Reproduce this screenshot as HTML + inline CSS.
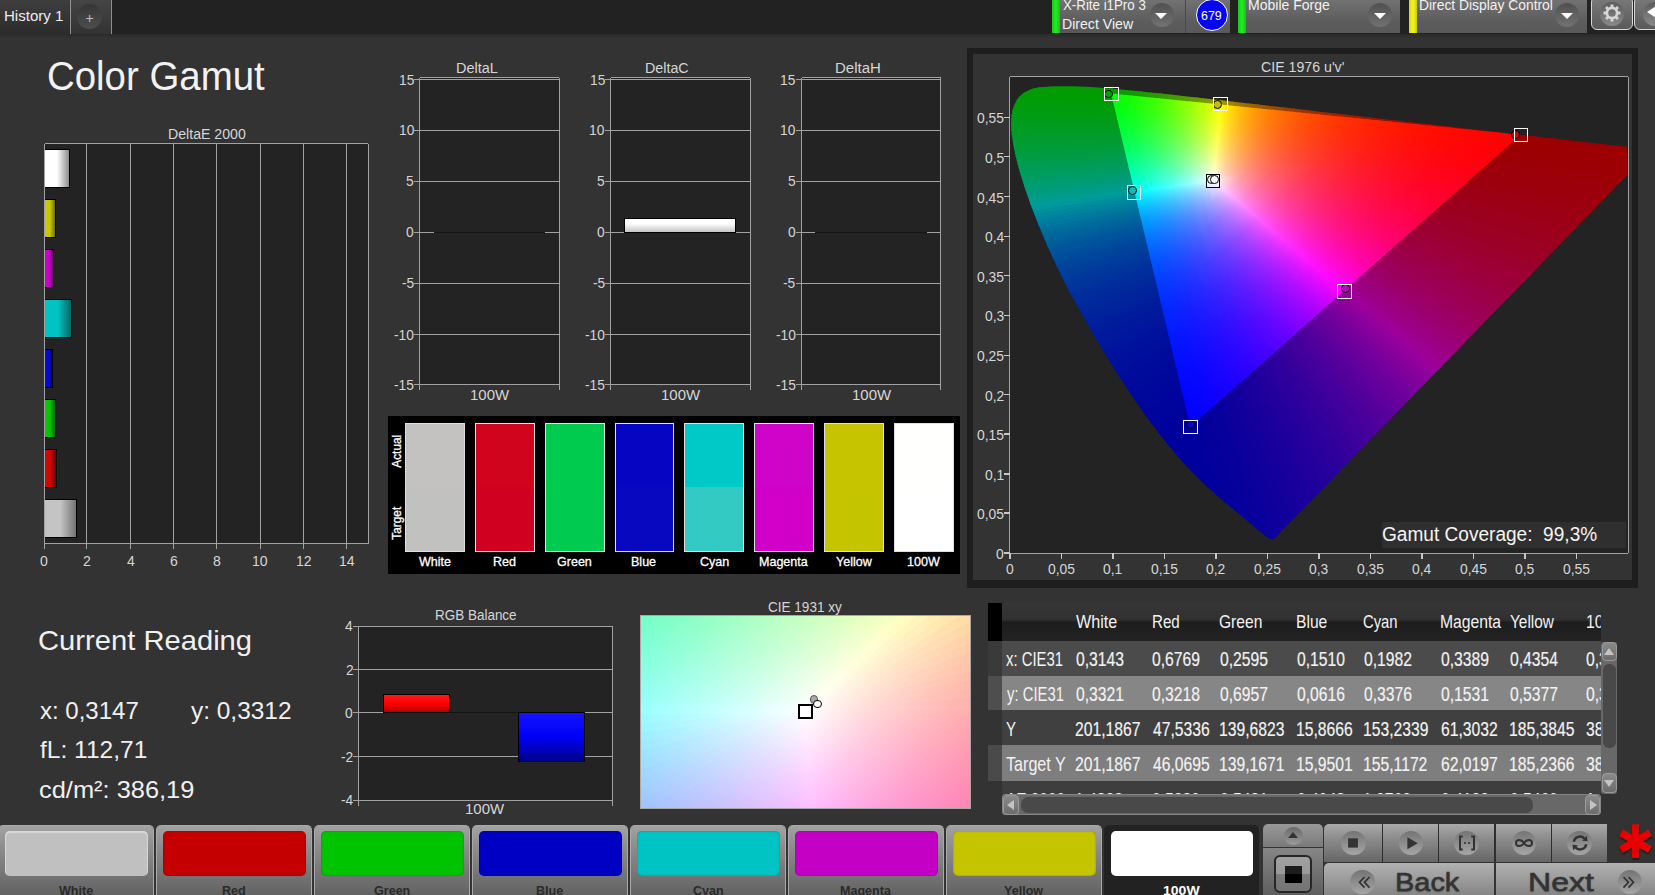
<!DOCTYPE html>
<html><head><meta charset="utf-8"><title>Color Gamut</title>
<style>
html,body{margin:0;padding:0;background:#333;}
body{width:1655px;height:895px;overflow:hidden;position:relative;font-family:"Liberation Sans",sans-serif;color:#e6e6e6;}
.a{position:absolute;}
.t{position:absolute;white-space:nowrap;}
</style></head><body>
<div class="a" style="left:0px;top:0px;width:1655px;height:33.5px;background:#222;"></div>
<div class="a" style="left:0px;top:33.5px;width:1655px;height:5px;background:linear-gradient(#2b2b2b,#333);"></div>
<div class="a" style="left:0px;top:0px;width:70px;height:33.5px;background:linear-gradient(#3e3e3e,#2b2b2b);"></div>
<div class="a" style="left:70px;top:0px;width:1px;height:33.5px;background:#8f8f8f;"></div>
<div class="a" style="left:71px;top:0px;width:40px;height:33.5px;background:linear-gradient(#454545,#333);"></div>
<div class="a" style="left:111px;top:0px;width:1px;height:33.5px;background:#8f8f8f;"></div>
<div class="a" style="left:77.1px;top:4px;width:25.4px;height:25.4px;border-radius:50%;background:linear-gradient(#353535,#4e4e4e);"></div>
<div class="t " style="left:85.54px;top:11.35px;font-size:14px;line-height:14px;transform:scaleX(1.000);transform-origin:0 50%;color:#bdbdbd;">+</div>
<div class="t " style="left:4.3px;top:9.03px;font-size:14.5px;line-height:14.5px;transform:scaleX(1.038);transform-origin:0 50%;color:#ededed;">History 1</div>
<div class="a" style="left:1052px;top:0px;width:178px;height:33.3px;background:linear-gradient(#727272,#5e5e5e 60%,#585858);"></div>
<div class="a" style="left:1052px;top:0px;width:7.5px;height:33.3px;background:linear-gradient(90deg,#19c819,#22ee22 50%,#14c414);"></div>
<div class="a" style="left:1185px;top:0px;width:1.2px;height:33.3px;background:#4a4a4a;"></div>
<div class="t " style="left:1062.93px;top:-2.35px;font-size:14px;line-height:14px;transform:scaleX(0.950);transform-origin:0 50%;color:#f2f2f2;">X-Rite i1Pro 3</div>
<div class="t " style="left:1062.07px;top:16.65px;font-size:14px;line-height:14px;transform:scaleX(1.008);transform-origin:0 50%;color:#f2f2f2;">Direct View</div>
<div class="a" style="left:1149.5px;top:2.6px;width:24px;height:24px;border-radius:12px;background:linear-gradient(#505050,#727272);"></div>
<div class="a" style="left:1155.4px;top:13.1px;width:0;height:0;border-left:6.1px solid transparent;border-right:6.1px solid transparent;border-top:6.2px solid #fff;"></div>
<div class="a" style="left:1238px;top:0px;width:162px;height:33.3px;background:linear-gradient(#727272,#5e5e5e 60%,#585858);"></div>
<div class="a" style="left:1238px;top:0px;width:7.5px;height:33.3px;background:linear-gradient(90deg,#19c819,#22ee22 50%,#14c414);"></div>
<div class="t " style="left:1248.08px;top:-2.35px;font-size:14px;line-height:14px;transform:scaleX(1.000);transform-origin:0 50%;color:#f2f2f2;">Mobile Forge</div>
<div class="a" style="left:1368px;top:2.6px;width:24px;height:24px;border-radius:12px;background:linear-gradient(#505050,#727272);"></div>
<div class="a" style="left:1373.9px;top:13.1px;width:0;height:0;border-left:6.1px solid transparent;border-right:6.1px solid transparent;border-top:6.2px solid #fff;"></div>
<div class="a" style="left:1409px;top:0px;width:177.7px;height:33.3px;background:linear-gradient(#727272,#5e5e5e 60%,#585858);"></div>
<div class="a" style="left:1409px;top:0px;width:7.5px;height:33.3px;background:linear-gradient(90deg,#d8d810,#f4f420 50%,#caca10);"></div>
<div class="t " style="left:1419.09px;top:-2.35px;font-size:14px;line-height:14px;transform:scaleX(0.989);transform-origin:0 50%;color:#f2f2f2;">Direct Display Control</div>
<div class="a" style="left:1555px;top:2.6px;width:24px;height:24px;border-radius:12px;background:linear-gradient(#505050,#727272);"></div>
<div class="a" style="left:1560.9px;top:13.1px;width:0;height:0;border-left:6.1px solid transparent;border-right:6.1px solid transparent;border-top:6.2px solid #fff;"></div>
<div class="a" style="left:1195.5px;top:-1.5px;width:30px;height:30px;border-radius:16px;background:#0606f0;border:1.3px solid #fff;"></div>
<div class="t " style="left:1201.13px;top:8.57px;font-size:13.5px;line-height:13.5px;transform:scaleX(0.920);transform-origin:0 50%;color:#fff;">679</div>
<div class="a" style="left:1591px;top:-4px;width:40px;height:32.2px;border-radius:6px;border:1.3px solid #d8d8d8;background:linear-gradient(#7a7a7a,#5a5a5a);"></div>
<div class="a" style="left:1600px;top:1.5px;width:24px;height:24px;border-radius:50%;background:linear-gradient(#5c5c5c,#8a8a8a);"></div>
<svg class="a" style="left:1600px;top:1.3px" width="24" height="24" viewBox="-12 -12 24 24"><g fill="none" stroke="#d6d6d6"><circle r="5.15" stroke-width="2.7"/><g stroke-width="2.9"><line x1="0" y1="-6" x2="0" y2="-8.5" transform="rotate(0)"/><line x1="0" y1="-6" x2="0" y2="-8.5" transform="rotate(45)"/><line x1="0" y1="-6" x2="0" y2="-8.5" transform="rotate(90)"/><line x1="0" y1="-6" x2="0" y2="-8.5" transform="rotate(135)"/><line x1="0" y1="-6" x2="0" y2="-8.5" transform="rotate(180)"/><line x1="0" y1="-6" x2="0" y2="-8.5" transform="rotate(225)"/><line x1="0" y1="-6" x2="0" y2="-8.5" transform="rotate(270)"/><line x1="0" y1="-6" x2="0" y2="-8.5" transform="rotate(315)"/></g></g></svg>
<div class="a" style="left:1634px;top:-4px;width:40px;height:32.2px;border-radius:6px;border:1.3px solid #d8d8d8;background:linear-gradient(#7a7a7a,#5a5a5a);"></div>
<div class="a" style="left:1643px;top:1.5px;width:24px;height:24px;border-radius:50%;background:linear-gradient(#5c5c5c,#8a8a8a);"></div>
<div class="a" style="left:1647px;top:6.4px;width:0;height:0;border-top:6.5px solid transparent;border-bottom:6.5px solid transparent;border-right:9px solid #fff;"></div>
<div class="t " style="left:47.18px;top:56.44px;font-size:40px;line-height:40px;transform:scaleX(0.960);transform-origin:0 50%;color:#f2f2f2;">Color Gamut</div>
<div class="t " style="left:167.57px;top:127.05px;font-size:14px;line-height:14px;transform:scaleX(1.010);transform-origin:0 50%;color:#d6d6d6;">DeltaE 2000</div>
<div class="a" style="left:44.6px;top:143.8px;width:323.8px;height:400px;background:#232323;"></div>
<div class="a" style="left:86px;top:143.8px;width:1px;height:400px;background:#a2a2a2;"></div>
<div class="a" style="left:130px;top:143.8px;width:1px;height:400px;background:#a2a2a2;"></div>
<div class="a" style="left:173px;top:143.8px;width:1px;height:400px;background:#a2a2a2;"></div>
<div class="a" style="left:216px;top:143.8px;width:1px;height:400px;background:#a2a2a2;"></div>
<div class="a" style="left:260px;top:143.8px;width:1px;height:400px;background:#a2a2a2;"></div>
<div class="a" style="left:303px;top:143.8px;width:1px;height:400px;background:#a2a2a2;"></div>
<div class="a" style="left:346px;top:143.8px;width:1px;height:400px;background:#a2a2a2;"></div>
<div class="a" style="left:44.6px;top:143px;width:323.8px;height:1px;background:#a2a2a2;"></div>
<div class="a" style="left:44.6px;top:543px;width:323.8px;height:1px;background:#a2a2a2;"></div>
<div class="a" style="left:44px;top:143.8px;width:1px;height:400px;background:#a2a2a2;"></div>
<div class="a" style="left:368px;top:143.8px;width:1px;height:400px;background:#a2a2a2;"></div>
<div class="a" style="left:44px;top:543.8px;width:1px;height:5px;background:#a2a2a2;"></div>
<div class="t " style="left:40px;top:553.73px;font-size:14.5px;line-height:14.5px;transform:scaleX(0.970);transform-origin:0 50%;color:#d6d6d6;">0</div>
<div class="a" style="left:86px;top:543.8px;width:1px;height:5px;background:#a2a2a2;"></div>
<div class="t " style="left:83.26px;top:553.73px;font-size:14.5px;line-height:14.5px;transform:scaleX(0.970);transform-origin:0 50%;color:#d6d6d6;">2</div>
<div class="a" style="left:130px;top:543.8px;width:1px;height:5px;background:#a2a2a2;"></div>
<div class="t " style="left:126.63px;top:553.73px;font-size:14.5px;line-height:14.5px;transform:scaleX(0.970);transform-origin:0 50%;color:#d6d6d6;">4</div>
<div class="a" style="left:173px;top:543.8px;width:1px;height:5px;background:#a2a2a2;"></div>
<div class="t " style="left:169.83px;top:553.73px;font-size:14.5px;line-height:14.5px;transform:scaleX(0.970);transform-origin:0 50%;color:#d6d6d6;">6</div>
<div class="a" style="left:216px;top:543.8px;width:1px;height:5px;background:#a2a2a2;"></div>
<div class="t " style="left:213.2px;top:553.73px;font-size:14.5px;line-height:14.5px;transform:scaleX(0.970);transform-origin:0 50%;color:#d6d6d6;">8</div>
<div class="a" style="left:260px;top:543.8px;width:1px;height:5px;background:#a2a2a2;"></div>
<div class="t " style="left:252.31px;top:553.73px;font-size:14.5px;line-height:14.5px;transform:scaleX(0.970);transform-origin:0 50%;color:#d6d6d6;">10</div>
<div class="a" style="left:303px;top:543.8px;width:1px;height:5px;background:#a2a2a2;"></div>
<div class="t " style="left:295.68px;top:553.73px;font-size:14.5px;line-height:14.5px;transform:scaleX(0.970);transform-origin:0 50%;color:#d6d6d6;">12</div>
<div class="a" style="left:346px;top:543.8px;width:1px;height:5px;background:#a2a2a2;"></div>
<div class="t " style="left:338.84px;top:553.73px;font-size:14.5px;line-height:14.5px;transform:scaleX(0.970);transform-origin:0 50%;color:#d6d6d6;">14</div>
<div class="a" style="left:45.2px;top:149.4px;width:25.3px;height:38.2px;background:linear-gradient(90deg,#ffffff 50%,#8c8c8c);border:1.3px solid #000;border-left:none;box-sizing:border-box;"></div>
<div class="a" style="left:45.2px;top:199.4px;width:11.2px;height:38.2px;background:linear-gradient(90deg,#c8c800 50%,#6c6c00);border:1.3px solid #000;border-left:none;box-sizing:border-box;"></div>
<div class="a" style="left:45.2px;top:249.4px;width:8.4px;height:38.2px;background:linear-gradient(90deg,#c800c8 50%,#6c006c);border:1.3px solid #000;border-left:none;box-sizing:border-box;"></div>
<div class="a" style="left:45.2px;top:299.4px;width:27.3px;height:38.2px;background:linear-gradient(90deg,#00c4c4 50%,#006464);border:1.3px solid #000;border-left:none;box-sizing:border-box;"></div>
<div class="a" style="left:45.2px;top:349.4px;width:7.8px;height:38.2px;background:linear-gradient(90deg,#0808d0 50%,#04046c);border:1.3px solid #000;border-left:none;box-sizing:border-box;"></div>
<div class="a" style="left:45.2px;top:399.4px;width:11px;height:38.2px;background:linear-gradient(90deg,#08c408 50%,#046c04);border:1.3px solid #000;border-left:none;box-sizing:border-box;"></div>
<div class="a" style="left:45.2px;top:449.4px;width:12.1px;height:38.2px;background:linear-gradient(90deg,#cc0808 50%,#6c0404);border:1.3px solid #000;border-left:none;box-sizing:border-box;"></div>
<div class="a" style="left:45.2px;top:499.4px;width:31.4px;height:38.2px;background:linear-gradient(90deg,#c4c4c4 50%,#747474);border:1.3px solid #000;border-left:none;box-sizing:border-box;"></div>
<div class="a" style="left:419.7px;top:77.6px;width:139.5px;height:306.8px;background:#232323;"></div>
<div class="t " style="left:455.54px;top:61.05px;font-size:14px;line-height:14px;transform:scaleX(1.033);transform-origin:0 50%;color:#d6d6d6;">DeltaL</div>
<div class="a" style="left:419.7px;top:79px;width:139.5px;height:1px;background:#a2a2a2;"></div>
<div class="a" style="left:414.2px;top:79px;width:5.5px;height:1px;background:#a2a2a2;"></div>
<div class="t " style="left:398.66px;top:72.63px;font-size:14.5px;line-height:14.5px;transform:scaleX(0.950);transform-origin:0 50%;color:#d6d6d6;">15</div>
<div class="a" style="left:419.7px;top:130px;width:139.5px;height:1px;background:#a2a2a2;"></div>
<div class="a" style="left:414.2px;top:130px;width:5.5px;height:1px;background:#a2a2a2;"></div>
<div class="t " style="left:398.59px;top:123.33px;font-size:14.5px;line-height:14.5px;transform:scaleX(0.950);transform-origin:0 50%;color:#d6d6d6;">10</div>
<div class="a" style="left:419.7px;top:181px;width:139.5px;height:1px;background:#a2a2a2;"></div>
<div class="a" style="left:414.2px;top:181px;width:5.5px;height:1px;background:#a2a2a2;"></div>
<div class="t " style="left:406.31px;top:174.38px;font-size:14.5px;line-height:14.5px;transform:scaleX(0.950);transform-origin:0 50%;color:#d6d6d6;">5</div>
<div class="a" style="left:419.7px;top:232px;width:139.5px;height:1px;background:#a2a2a2;"></div>
<div class="a" style="left:414.2px;top:232px;width:5.5px;height:1px;background:#a2a2a2;"></div>
<div class="t " style="left:406.24px;top:225.43px;font-size:14.5px;line-height:14.5px;transform:scaleX(0.950);transform-origin:0 50%;color:#d6d6d6;">0</div>
<div class="a" style="left:419.7px;top:283px;width:139.5px;height:1px;background:#a2a2a2;"></div>
<div class="a" style="left:414.2px;top:283px;width:5.5px;height:1px;background:#a2a2a2;"></div>
<div class="t " style="left:401.69px;top:276.48px;font-size:14.5px;line-height:14.5px;transform:scaleX(0.950);transform-origin:0 50%;color:#d6d6d6;">-5</div>
<div class="a" style="left:419.7px;top:334px;width:139.5px;height:1px;background:#a2a2a2;"></div>
<div class="a" style="left:414.2px;top:334px;width:5.5px;height:1px;background:#a2a2a2;"></div>
<div class="t " style="left:393.98px;top:327.53px;font-size:14.5px;line-height:14.5px;transform:scaleX(0.950);transform-origin:0 50%;color:#d6d6d6;">-10</div>
<div class="a" style="left:419.7px;top:384px;width:139.5px;height:1px;background:#a2a2a2;"></div>
<div class="a" style="left:414.2px;top:384px;width:5.5px;height:1px;background:#a2a2a2;"></div>
<div class="t " style="left:394.05px;top:378.43px;font-size:14.5px;line-height:14.5px;transform:scaleX(0.950);transform-origin:0 50%;color:#d6d6d6;">-15</div>
<div class="a" style="left:419.7px;top:77px;width:139.5px;height:1px;background:#a2a2a2;"></div>
<div class="a" style="left:419px;top:77.6px;width:1px;height:306.8px;background:#a2a2a2;"></div>
<div class="a" style="left:559px;top:77.6px;width:1px;height:306.8px;background:#a2a2a2;"></div>
<div class="a" style="left:419px;top:384.4px;width:1px;height:6px;background:#a2a2a2;"></div>
<div class="a" style="left:559px;top:384.4px;width:1px;height:6px;background:#a2a2a2;"></div>
<div class="t " style="left:470.33px;top:387.73px;font-size:14.5px;line-height:14.5px;transform:scaleX(1.032);transform-origin:0 50%;color:#d6d6d6;">100W</div>
<div class="a" style="left:610.6px;top:77.6px;width:139.5px;height:306.8px;background:#232323;"></div>
<div class="t " style="left:645.46px;top:61.05px;font-size:14px;line-height:14px;transform:scaleX(1.020);transform-origin:0 50%;color:#d6d6d6;">DeltaC</div>
<div class="a" style="left:610.6px;top:79px;width:139.5px;height:1px;background:#a2a2a2;"></div>
<div class="a" style="left:605.1px;top:79px;width:5.5px;height:1px;background:#a2a2a2;"></div>
<div class="t " style="left:589.56px;top:72.63px;font-size:14.5px;line-height:14.5px;transform:scaleX(0.950);transform-origin:0 50%;color:#d6d6d6;">15</div>
<div class="a" style="left:610.6px;top:130px;width:139.5px;height:1px;background:#a2a2a2;"></div>
<div class="a" style="left:605.1px;top:130px;width:5.5px;height:1px;background:#a2a2a2;"></div>
<div class="t " style="left:589.49px;top:123.33px;font-size:14.5px;line-height:14.5px;transform:scaleX(0.950);transform-origin:0 50%;color:#d6d6d6;">10</div>
<div class="a" style="left:610.6px;top:181px;width:139.5px;height:1px;background:#a2a2a2;"></div>
<div class="a" style="left:605.1px;top:181px;width:5.5px;height:1px;background:#a2a2a2;"></div>
<div class="t " style="left:597.21px;top:174.38px;font-size:14.5px;line-height:14.5px;transform:scaleX(0.950);transform-origin:0 50%;color:#d6d6d6;">5</div>
<div class="a" style="left:610.6px;top:232px;width:139.5px;height:1px;background:#a2a2a2;"></div>
<div class="a" style="left:605.1px;top:232px;width:5.5px;height:1px;background:#a2a2a2;"></div>
<div class="t " style="left:597.14px;top:225.43px;font-size:14.5px;line-height:14.5px;transform:scaleX(0.950);transform-origin:0 50%;color:#d6d6d6;">0</div>
<div class="a" style="left:610.6px;top:283px;width:139.5px;height:1px;background:#a2a2a2;"></div>
<div class="a" style="left:605.1px;top:283px;width:5.5px;height:1px;background:#a2a2a2;"></div>
<div class="t " style="left:592.59px;top:276.48px;font-size:14.5px;line-height:14.5px;transform:scaleX(0.950);transform-origin:0 50%;color:#d6d6d6;">-5</div>
<div class="a" style="left:610.6px;top:334px;width:139.5px;height:1px;background:#a2a2a2;"></div>
<div class="a" style="left:605.1px;top:334px;width:5.5px;height:1px;background:#a2a2a2;"></div>
<div class="t " style="left:584.88px;top:327.53px;font-size:14.5px;line-height:14.5px;transform:scaleX(0.950);transform-origin:0 50%;color:#d6d6d6;">-10</div>
<div class="a" style="left:610.6px;top:384px;width:139.5px;height:1px;background:#a2a2a2;"></div>
<div class="a" style="left:605.1px;top:384px;width:5.5px;height:1px;background:#a2a2a2;"></div>
<div class="t " style="left:584.95px;top:378.43px;font-size:14.5px;line-height:14.5px;transform:scaleX(0.950);transform-origin:0 50%;color:#d6d6d6;">-15</div>
<div class="a" style="left:610.6px;top:77px;width:139.5px;height:1px;background:#a2a2a2;"></div>
<div class="a" style="left:610px;top:77.6px;width:1px;height:306.8px;background:#a2a2a2;"></div>
<div class="a" style="left:750px;top:77.6px;width:1px;height:306.8px;background:#a2a2a2;"></div>
<div class="a" style="left:610px;top:384.4px;width:1px;height:6px;background:#a2a2a2;"></div>
<div class="a" style="left:750px;top:384.4px;width:1px;height:6px;background:#a2a2a2;"></div>
<div class="t " style="left:661.23px;top:387.73px;font-size:14.5px;line-height:14.5px;transform:scaleX(1.032);transform-origin:0 50%;color:#d6d6d6;">100W</div>
<div class="a" style="left:801.5px;top:77.6px;width:139.5px;height:306.8px;background:#232323;"></div>
<div class="t " style="left:835.35px;top:61.05px;font-size:14px;line-height:14px;transform:scaleX(1.071);transform-origin:0 50%;color:#d6d6d6;">DeltaH</div>
<div class="a" style="left:801.5px;top:79px;width:139.5px;height:1px;background:#a2a2a2;"></div>
<div class="a" style="left:796px;top:79px;width:5.5px;height:1px;background:#a2a2a2;"></div>
<div class="t " style="left:780.46px;top:72.63px;font-size:14.5px;line-height:14.5px;transform:scaleX(0.950);transform-origin:0 50%;color:#d6d6d6;">15</div>
<div class="a" style="left:801.5px;top:130px;width:139.5px;height:1px;background:#a2a2a2;"></div>
<div class="a" style="left:796px;top:130px;width:5.5px;height:1px;background:#a2a2a2;"></div>
<div class="t " style="left:780.39px;top:123.33px;font-size:14.5px;line-height:14.5px;transform:scaleX(0.950);transform-origin:0 50%;color:#d6d6d6;">10</div>
<div class="a" style="left:801.5px;top:181px;width:139.5px;height:1px;background:#a2a2a2;"></div>
<div class="a" style="left:796px;top:181px;width:5.5px;height:1px;background:#a2a2a2;"></div>
<div class="t " style="left:788.11px;top:174.38px;font-size:14.5px;line-height:14.5px;transform:scaleX(0.950);transform-origin:0 50%;color:#d6d6d6;">5</div>
<div class="a" style="left:801.5px;top:232px;width:139.5px;height:1px;background:#a2a2a2;"></div>
<div class="a" style="left:796px;top:232px;width:5.5px;height:1px;background:#a2a2a2;"></div>
<div class="t " style="left:788.04px;top:225.43px;font-size:14.5px;line-height:14.5px;transform:scaleX(0.950);transform-origin:0 50%;color:#d6d6d6;">0</div>
<div class="a" style="left:801.5px;top:283px;width:139.5px;height:1px;background:#a2a2a2;"></div>
<div class="a" style="left:796px;top:283px;width:5.5px;height:1px;background:#a2a2a2;"></div>
<div class="t " style="left:783.49px;top:276.48px;font-size:14.5px;line-height:14.5px;transform:scaleX(0.950);transform-origin:0 50%;color:#d6d6d6;">-5</div>
<div class="a" style="left:801.5px;top:334px;width:139.5px;height:1px;background:#a2a2a2;"></div>
<div class="a" style="left:796px;top:334px;width:5.5px;height:1px;background:#a2a2a2;"></div>
<div class="t " style="left:775.78px;top:327.53px;font-size:14.5px;line-height:14.5px;transform:scaleX(0.950);transform-origin:0 50%;color:#d6d6d6;">-10</div>
<div class="a" style="left:801.5px;top:384px;width:139.5px;height:1px;background:#a2a2a2;"></div>
<div class="a" style="left:796px;top:384px;width:5.5px;height:1px;background:#a2a2a2;"></div>
<div class="t " style="left:775.85px;top:378.43px;font-size:14.5px;line-height:14.5px;transform:scaleX(0.950);transform-origin:0 50%;color:#d6d6d6;">-15</div>
<div class="a" style="left:801.5px;top:77px;width:139.5px;height:1px;background:#a2a2a2;"></div>
<div class="a" style="left:801px;top:77.6px;width:1px;height:306.8px;background:#a2a2a2;"></div>
<div class="a" style="left:940px;top:77.6px;width:1px;height:306.8px;background:#a2a2a2;"></div>
<div class="a" style="left:801px;top:384.4px;width:1px;height:6px;background:#a2a2a2;"></div>
<div class="a" style="left:940px;top:384.4px;width:1px;height:6px;background:#a2a2a2;"></div>
<div class="t " style="left:852.13px;top:387.73px;font-size:14.5px;line-height:14.5px;transform:scaleX(1.032);transform-origin:0 50%;color:#d6d6d6;">100W</div>
<div class="a" style="left:433.5px;top:231.5px;width:111.5px;height:1.4px;background:#161616;"></div>
<div class="a" style="left:815.3px;top:231.5px;width:111.5px;height:1.4px;background:#161616;"></div>
<div class="a" style="left:624.2px;top:218.2px;width:112.2px;height:15px;box-sizing:border-box;border:1.8px solid #000;background:linear-gradient(#fff 35%,#c4c4c4);"></div>
<div class="a" style="left:387.8px;top:416.4px;width:572.6px;height:157.6px;background:#000;"></div>
<div class="a" style="left:405px;top:423.2px;width:59.8px;height:128.4px;box-sizing:border-box;border:1.2px solid #e0e0e0;background:linear-gradient(#c3c2c0 50%,#c1c1c0 50%);"></div>
<div class="t " style="left:418.93px;top:554.63px;font-size:13.2px;line-height:13.2px;transform:scaleX(0.950);transform-origin:0 50%;color:#fff;-webkit-text-stroke:0.3px #fff;">White</div>
<div class="a" style="left:474.86px;top:423.2px;width:59.8px;height:128.4px;box-sizing:border-box;border:1.2px solid #e0e0e0;background:linear-gradient(#d0041c 50%,#cf0020 50%);"></div>
<div class="t " style="left:492.93px;top:554.63px;font-size:13.2px;line-height:13.2px;transform:scaleX(0.950);transform-origin:0 50%;color:#fff;-webkit-text-stroke:0.3px #fff;">Red</div>
<div class="a" style="left:544.72px;top:423.2px;width:59.8px;height:128.4px;box-sizing:border-box;border:1.2px solid #e0e0e0;background:linear-gradient(#00cb4f 50%,#00cb50 50%);"></div>
<div class="t " style="left:557.05px;top:554.63px;font-size:13.2px;line-height:13.2px;transform:scaleX(0.950);transform-origin:0 50%;color:#fff;-webkit-text-stroke:0.3px #fff;">Green</div>
<div class="a" style="left:614.58px;top:423.2px;width:59.8px;height:128.4px;box-sizing:border-box;border:1.2px solid #e0e0e0;background:linear-gradient(#0606c2 50%,#0808c0 50%);"></div>
<div class="t " style="left:631.49px;top:554.63px;font-size:13.2px;line-height:13.2px;transform:scaleX(0.950);transform-origin:0 50%;color:#fff;-webkit-text-stroke:0.3px #fff;">Blue</div>
<div class="a" style="left:684.44px;top:423.2px;width:59.8px;height:128.4px;box-sizing:border-box;border:1.2px solid #e0e0e0;background:linear-gradient(#00c9c8 50%,#32cac2 50%);"></div>
<div class="t " style="left:699.56px;top:554.63px;font-size:13.2px;line-height:13.2px;transform:scaleX(0.950);transform-origin:0 50%;color:#fff;-webkit-text-stroke:0.3px #fff;">Cyan</div>
<div class="a" style="left:754.3px;top:423.2px;width:59.8px;height:128.4px;box-sizing:border-box;border:1.2px solid #e0e0e0;background:linear-gradient(#cf04c9 50%,#d000c8 50%);"></div>
<div class="t " style="left:759.08px;top:554.63px;font-size:13.2px;line-height:13.2px;transform:scaleX(0.950);transform-origin:0 50%;color:#fff;-webkit-text-stroke:0.3px #fff;">Magenta</div>
<div class="a" style="left:824.16px;top:423.2px;width:59.8px;height:128.4px;box-sizing:border-box;border:1.2px solid #e0e0e0;background:linear-gradient(#c6c300 50%,#c5c400 50%);"></div>
<div class="t " style="left:835.83px;top:554.63px;font-size:13.2px;line-height:13.2px;transform:scaleX(0.950);transform-origin:0 50%;color:#fff;-webkit-text-stroke:0.3px #fff;">Yellow</div>
<div class="a" style="left:894.02px;top:423.2px;width:59.8px;height:128.4px;box-sizing:border-box;border:1.2px solid #e0e0e0;background:linear-gradient(#fffffd 50%,#ffffff 50%);"></div>
<div class="t " style="left:906.85px;top:554.63px;font-size:13.2px;line-height:13.2px;transform:scaleX(0.950);transform-origin:0 50%;color:#fff;-webkit-text-stroke:0.3px #fff;">100W</div>
<div class="t " style="left:379.93px;top:444.75px;font-size:12.5px;line-height:12.5px;transform:rotate(-90deg) scaleX(0.950);transform-origin:50% 50%;color:#fff;-webkit-text-stroke:0.3px #fff;">Actual</div>
<div class="t " style="left:379.93px;top:517.15px;font-size:12.5px;line-height:12.5px;transform:rotate(-90deg) scaleX(0.950);transform-origin:50% 50%;color:#fff;-webkit-text-stroke:0.3px #fff;">Target</div>
<div class="a" style="left:967px;top:48px;width:671px;height:539.5px;background:#1e1e1e;"></div>
<div class="a" style="left:973.3px;top:53.8px;width:658.6px;height:526.6px;background:#333;"></div>
<div class="t " style="left:1260.79px;top:60.45px;font-size:14px;line-height:14px;transform:scaleX(1.012);transform-origin:0 50%;color:#d6d6d6;">CIE 1976 u'v'</div>
<div class="a" style="left:1009.6px;top:76.8px;width:618.4px;height:476.3px;background:#232323;"></div>
<svg class="a" style="left:1010.2px;top:77.4px" width="617.2" height="475" viewBox="1010.2 77.4 617.2 475"><defs><clipPath id="cl"><path d="M1274.4 539.2L1274.3 539.2L1274.2 539.2L1274.2 539.2L1274.1 539.3L1273.9 539.4L1273.7 539.3L1273.6 539.3L1273.4 539.4L1273.4 539.6L1273.3 539.7L1273.1 539.7L1272.9 539.7L1272.6 539.7L1272.3 539.7L1272 539.7L1271.6 539.7L1271.3 539.6L1270.9 539.5L1270.4 539.3L1269.6 538.9L1268.6 538.3L1267.5 537.6L1266.3 536.7L1264.9 535.6L1263.3 534.3L1261.4 532.9L1259.3 531.2L1257 529.2L1254.4 527L1251.6 524.6L1248.5 522L1245.1 519.2L1241.3 516L1237.1 512.5L1232.4 508.7L1227.4 504.6L1222.1 500.1L1216.2 495L1209.9 489.4L1203.1 483.2L1195.9 476.2L1188.1 468.1L1179.3 458.3L1169.3 446.4L1158.3 432.5L1146.6 416.8L1134.3 399.4L1121.5 380.2L1108.4 359.3L1095.2 337.3L1082.1 314.7L1069.5 291.8L1058 268.9L1047.8 246.7L1038.9 225.6L1031.2 205.8L1024.8 187.7L1019.8 171.6L1016 157.4L1013.5 145.1L1011.9 134.4L1011.3 125.3L1011.6 117.4L1012.7 110.6L1014.7 104.8L1017.3 99.9L1020.7 96L1024.6 92.9L1028.9 90.7L1033.7 89L1038.8 88L1044.2 87.3L1049.8 86.9L1055.6 86.7L1061.5 86.6L1067.3 86.6L1073.2 86.7L1079.1 86.9L1085.2 87.1L1091.5 87.5L1097.9 87.9L1104.6 88.4L1111.5 89L1118.6 89.6L1125.9 90.3L1133.6 91.1L1141.6 91.9L1149.9 92.8L1158.6 93.7L1167.6 94.7L1176.9 95.7L1186.7 96.8L1196.9 97.9L1207.5 99.1L1218.5 100.4L1229.9 101.7L1241.8 103.1L1254.1 104.5L1266.9 106L1280 107.5L1293.6 109L1307.5 110.6L1321.8 112.3L1336.4 114L1351.2 115.7L1366.3 117.4L1381.4 119.2L1396.3 120.9L1410.9 122.6L1425.4 124.2L1439.8 125.9L1454 127.5L1467.6 129.1L1480.6 130.6L1493 132L1504.8 133.3L1516 134.6L1526.5 135.9L1536.4 137L1545.6 138.1L1554.1 139L1562.1 140L1569.5 140.8L1576.4 141.6L1582.9 142.3L1589.1 143.1L1594.9 143.7L1600.4 144.4L1605.5 145L1610.2 145.5L1614.6 146L1618.6 146.5L1622.2 146.9L1625.4 147.2L1628.2 147.6L1630.8 147.9L1633.2 148.1L1635.3 148.4L1637.2 148.6L1638.8 148.8L1640.2 149L1641.4 149.1L1642.4 149.2L1643.4 149.3L1644.3 149.4L1645.2 149.5L1646 149.6L1646.7 149.7L1647.5 149.8L1648.3 149.9L1649 150L1649.7 150.1L1650.3 150.1L1650.7 150.2L1650.9 150.2L1651.2 150.2L1651.4 150.3L1651.6 150.3L1651.7 150.3L1651.8 150.3Z"/></clipPath><clipPath id="ct"><path d="M1521 135.2L1111.4 93.8L1190.5 427Z"/></clipPath><linearGradient id="g0" gradientUnits="userSpaceOnUse" x1="1213.6" y1="180.6" x2="1469.6" y2="180.6"><stop offset="0" stop-color="#ffffff"/><stop offset="0.1" stop-color="#ff9fae"/><stop offset="0.2" stop-color="#ff697f"/><stop offset="0.35" stop-color="#ff3b56"/><stop offset="0.5" stop-color="#ff213e"/><stop offset="0.65" stop-color="#ff112f"/><stop offset="0.8" stop-color="#ff0724"/><stop offset="1" stop-color="#ff001a"/></linearGradient><linearGradient id="g1" gradientUnits="userSpaceOnUse" x1="1213.6" y1="180.6" x2="1462.2" y2="187.1"><stop offset="0" stop-color="#ffffff"/><stop offset="0.1" stop-color="#ffa1b2"/><stop offset="0.2" stop-color="#ff6b85"/><stop offset="0.35" stop-color="#ff3c5d"/><stop offset="0.5" stop-color="#ff2245"/><stop offset="0.65" stop-color="#ff1235"/><stop offset="0.8" stop-color="#ff072a"/><stop offset="1" stop-color="#ff0020"/></linearGradient><linearGradient id="g2" gradientUnits="userSpaceOnUse" x1="1213.6" y1="180.6" x2="1455.2" y2="193.3"><stop offset="0" stop-color="#ffffff"/><stop offset="0.1" stop-color="#ffa2b6"/><stop offset="0.2" stop-color="#ff6d8a"/><stop offset="0.35" stop-color="#ff3e63"/><stop offset="0.5" stop-color="#ff234b"/><stop offset="0.65" stop-color="#ff123b"/><stop offset="0.8" stop-color="#ff0830"/><stop offset="1" stop-color="#ff0026"/></linearGradient><linearGradient id="g3" gradientUnits="userSpaceOnUse" x1="1213.6" y1="180.6" x2="1448.6" y2="199.1"><stop offset="0" stop-color="#ffffff"/><stop offset="0.1" stop-color="#ffa4b9"/><stop offset="0.2" stop-color="#ff6e8f"/><stop offset="0.35" stop-color="#ff3f69"/><stop offset="0.5" stop-color="#ff2451"/><stop offset="0.65" stop-color="#ff1341"/><stop offset="0.8" stop-color="#ff0836"/><stop offset="1" stop-color="#ff002c"/></linearGradient><linearGradient id="g4" gradientUnits="userSpaceOnUse" x1="1213.6" y1="180.6" x2="1442.3" y2="204.6"><stop offset="0" stop-color="#ffffff"/><stop offset="0.1" stop-color="#ffa5bd"/><stop offset="0.2" stop-color="#ff7094"/><stop offset="0.35" stop-color="#ff406f"/><stop offset="0.5" stop-color="#ff2558"/><stop offset="0.65" stop-color="#ff1348"/><stop offset="0.8" stop-color="#ff083d"/><stop offset="1" stop-color="#ff0032"/></linearGradient><linearGradient id="g5" gradientUnits="userSpaceOnUse" x1="1213.6" y1="180.6" x2="1436.3" y2="209.9"><stop offset="0" stop-color="#ffffff"/><stop offset="0.1" stop-color="#ffa7c0"/><stop offset="0.2" stop-color="#ff7299"/><stop offset="0.35" stop-color="#ff4275"/><stop offset="0.5" stop-color="#ff255e"/><stop offset="0.65" stop-color="#ff144e"/><stop offset="0.8" stop-color="#ff0843"/><stop offset="1" stop-color="#ff0038"/></linearGradient><linearGradient id="g6" gradientUnits="userSpaceOnUse" x1="1213.6" y1="180.6" x2="1430.6" y2="215"><stop offset="0" stop-color="#ffffff"/><stop offset="0.1" stop-color="#ffa8c4"/><stop offset="0.2" stop-color="#ff739e"/><stop offset="0.35" stop-color="#ff437b"/><stop offset="0.5" stop-color="#ff2664"/><stop offset="0.65" stop-color="#ff1455"/><stop offset="0.8" stop-color="#ff094a"/><stop offset="1" stop-color="#ff003f"/></linearGradient><linearGradient id="g7" gradientUnits="userSpaceOnUse" x1="1213.6" y1="180.6" x2="1425.2" y2="219.8"><stop offset="0" stop-color="#ffffff"/><stop offset="0.1" stop-color="#ffaac7"/><stop offset="0.2" stop-color="#ff75a3"/><stop offset="0.35" stop-color="#ff4481"/><stop offset="0.5" stop-color="#ff276b"/><stop offset="0.65" stop-color="#ff155c"/><stop offset="0.8" stop-color="#ff0951"/><stop offset="1" stop-color="#ff0046"/></linearGradient><linearGradient id="g8" gradientUnits="userSpaceOnUse" x1="1213.6" y1="180.6" x2="1419.9" y2="224.4"><stop offset="0" stop-color="#ffffff"/><stop offset="0.1" stop-color="#ffabca"/><stop offset="0.2" stop-color="#ff76a8"/><stop offset="0.35" stop-color="#ff4687"/><stop offset="0.5" stop-color="#ff2871"/><stop offset="0.65" stop-color="#ff1562"/><stop offset="0.8" stop-color="#ff0957"/><stop offset="1" stop-color="#ff004d"/></linearGradient><linearGradient id="g9" gradientUnits="userSpaceOnUse" x1="1213.6" y1="180.6" x2="1414.8" y2="228.9"><stop offset="0" stop-color="#ffffff"/><stop offset="0.1" stop-color="#ffaccd"/><stop offset="0.2" stop-color="#ff78ad"/><stop offset="0.35" stop-color="#ff478d"/><stop offset="0.5" stop-color="#ff2978"/><stop offset="0.65" stop-color="#ff1669"/><stop offset="0.8" stop-color="#ff095f"/><stop offset="1" stop-color="#ff0054"/></linearGradient><linearGradient id="g10" gradientUnits="userSpaceOnUse" x1="1213.6" y1="180.6" x2="1410" y2="233.2"><stop offset="0" stop-color="#ffffff"/><stop offset="0.1" stop-color="#ffadd0"/><stop offset="0.2" stop-color="#ff79b2"/><stop offset="0.35" stop-color="#ff4893"/><stop offset="0.5" stop-color="#ff2a7f"/><stop offset="0.65" stop-color="#ff1670"/><stop offset="0.8" stop-color="#ff0966"/><stop offset="1" stop-color="#ff005b"/></linearGradient><linearGradient id="g11" gradientUnits="userSpaceOnUse" x1="1213.6" y1="180.6" x2="1405.3" y2="237.4"><stop offset="0" stop-color="#ffffff"/><stop offset="0.1" stop-color="#ffafd3"/><stop offset="0.2" stop-color="#ff7bb6"/><stop offset="0.35" stop-color="#ff4999"/><stop offset="0.5" stop-color="#ff2b85"/><stop offset="0.65" stop-color="#ff1777"/><stop offset="0.8" stop-color="#ff0a6d"/><stop offset="1" stop-color="#ff0063"/></linearGradient><linearGradient id="g12" gradientUnits="userSpaceOnUse" x1="1213.6" y1="180.6" x2="1400.7" y2="241.4"><stop offset="0" stop-color="#ffffff"/><stop offset="0.1" stop-color="#ffb0d6"/><stop offset="0.2" stop-color="#ff7cbb"/><stop offset="0.35" stop-color="#ff4b9f"/><stop offset="0.5" stop-color="#ff2c8c"/><stop offset="0.65" stop-color="#ff177f"/><stop offset="0.8" stop-color="#ff0a74"/><stop offset="1" stop-color="#ff006a"/></linearGradient><linearGradient id="g13" gradientUnits="userSpaceOnUse" x1="1213.6" y1="180.6" x2="1396.3" y2="245.3"><stop offset="0" stop-color="#ffffff"/><stop offset="0.1" stop-color="#ffb1d9"/><stop offset="0.2" stop-color="#ff7ebf"/><stop offset="0.35" stop-color="#ff4ca5"/><stop offset="0.5" stop-color="#ff2c93"/><stop offset="0.65" stop-color="#ff1886"/><stop offset="0.8" stop-color="#ff0a7c"/><stop offset="1" stop-color="#ff0072"/></linearGradient><linearGradient id="g14" gradientUnits="userSpaceOnUse" x1="1213.6" y1="180.6" x2="1392" y2="249.1"><stop offset="0" stop-color="#ffffff"/><stop offset="0.1" stop-color="#ffb2dc"/><stop offset="0.2" stop-color="#ff7fc4"/><stop offset="0.35" stop-color="#ff4dab"/><stop offset="0.5" stop-color="#ff2d9a"/><stop offset="0.65" stop-color="#ff188d"/><stop offset="0.8" stop-color="#ff0a84"/><stop offset="1" stop-color="#ff007a"/></linearGradient><linearGradient id="g15" gradientUnits="userSpaceOnUse" x1="1213.6" y1="180.6" x2="1387.8" y2="252.8"><stop offset="0" stop-color="#ffffff"/><stop offset="0.1" stop-color="#ffb3df"/><stop offset="0.2" stop-color="#ff80c9"/><stop offset="0.35" stop-color="#ff4eb1"/><stop offset="0.5" stop-color="#ff2ea1"/><stop offset="0.65" stop-color="#ff1995"/><stop offset="0.8" stop-color="#ff0b8c"/><stop offset="1" stop-color="#ff0083"/></linearGradient><linearGradient id="g16" gradientUnits="userSpaceOnUse" x1="1213.6" y1="180.6" x2="1383.8" y2="256.4"><stop offset="0" stop-color="#ffffff"/><stop offset="0.1" stop-color="#ffb5e2"/><stop offset="0.2" stop-color="#ff82cd"/><stop offset="0.35" stop-color="#ff4fb7"/><stop offset="0.5" stop-color="#ff2fa8"/><stop offset="0.65" stop-color="#ff1a9d"/><stop offset="0.8" stop-color="#ff0b94"/><stop offset="1" stop-color="#ff008b"/></linearGradient><linearGradient id="g17" gradientUnits="userSpaceOnUse" x1="1213.6" y1="180.6" x2="1379.8" y2="259.9"><stop offset="0" stop-color="#ffffff"/><stop offset="0.1" stop-color="#ffb6e5"/><stop offset="0.2" stop-color="#ff83d2"/><stop offset="0.35" stop-color="#ff51bd"/><stop offset="0.5" stop-color="#ff30af"/><stop offset="0.65" stop-color="#ff1aa5"/><stop offset="0.8" stop-color="#ff0b9c"/><stop offset="1" stop-color="#ff0094"/></linearGradient><linearGradient id="g18" gradientUnits="userSpaceOnUse" x1="1213.6" y1="180.6" x2="1375.9" y2="263.3"><stop offset="0" stop-color="#ffffff"/><stop offset="0.1" stop-color="#ffb7e7"/><stop offset="0.2" stop-color="#ff85d6"/><stop offset="0.35" stop-color="#ff52c4"/><stop offset="0.5" stop-color="#ff31b6"/><stop offset="0.65" stop-color="#ff1bad"/><stop offset="0.8" stop-color="#ff0ba5"/><stop offset="1" stop-color="#ff009d"/></linearGradient><linearGradient id="g19" gradientUnits="userSpaceOnUse" x1="1213.6" y1="180.6" x2="1372.1" y2="266.7"><stop offset="0" stop-color="#ffffff"/><stop offset="0.1" stop-color="#ffb8ea"/><stop offset="0.2" stop-color="#ff86db"/><stop offset="0.35" stop-color="#ff53ca"/><stop offset="0.5" stop-color="#ff32be"/><stop offset="0.65" stop-color="#ff1bb5"/><stop offset="0.8" stop-color="#ff0cae"/><stop offset="1" stop-color="#ff00a7"/></linearGradient><linearGradient id="g20" gradientUnits="userSpaceOnUse" x1="1213.6" y1="180.6" x2="1368.4" y2="269.9"><stop offset="0" stop-color="#ffffff"/><stop offset="0.1" stop-color="#ffb9ed"/><stop offset="0.2" stop-color="#ff87df"/><stop offset="0.35" stop-color="#ff55d0"/><stop offset="0.5" stop-color="#ff33c5"/><stop offset="0.65" stop-color="#ff1cbd"/><stop offset="0.8" stop-color="#ff0cb7"/><stop offset="1" stop-color="#ff00b0"/></linearGradient><linearGradient id="g21" gradientUnits="userSpaceOnUse" x1="1213.6" y1="180.6" x2="1364.7" y2="273.2"><stop offset="0" stop-color="#ffffff"/><stop offset="0.1" stop-color="#ffbaef"/><stop offset="0.2" stop-color="#ff89e4"/><stop offset="0.35" stop-color="#ff56d7"/><stop offset="0.5" stop-color="#ff34cd"/><stop offset="0.65" stop-color="#ff1cc6"/><stop offset="0.8" stop-color="#ff0cc0"/><stop offset="1" stop-color="#ff00bb"/></linearGradient><linearGradient id="g22" gradientUnits="userSpaceOnUse" x1="1213.6" y1="180.6" x2="1361.1" y2="276.4"><stop offset="0" stop-color="#ffffff"/><stop offset="0.1" stop-color="#ffbbf2"/><stop offset="0.2" stop-color="#ff8ae8"/><stop offset="0.35" stop-color="#ff57dd"/><stop offset="0.5" stop-color="#ff35d5"/><stop offset="0.65" stop-color="#ff1dcf"/><stop offset="0.8" stop-color="#ff0dca"/><stop offset="1" stop-color="#ff00c5"/></linearGradient><linearGradient id="g23" gradientUnits="userSpaceOnUse" x1="1213.6" y1="180.6" x2="1357.5" y2="279.5"><stop offset="0" stop-color="#ffffff"/><stop offset="0.1" stop-color="#ffbcf5"/><stop offset="0.2" stop-color="#ff8ced"/><stop offset="0.35" stop-color="#ff59e4"/><stop offset="0.5" stop-color="#ff36dd"/><stop offset="0.65" stop-color="#ff1ed8"/><stop offset="0.8" stop-color="#ff0dd4"/><stop offset="1" stop-color="#ff00d0"/></linearGradient><linearGradient id="g24" gradientUnits="userSpaceOnUse" x1="1213.6" y1="180.6" x2="1354" y2="282.6"><stop offset="0" stop-color="#ffffff"/><stop offset="0.1" stop-color="#ffbdf7"/><stop offset="0.2" stop-color="#ff8df1"/><stop offset="0.35" stop-color="#ff5aeb"/><stop offset="0.5" stop-color="#ff37e6"/><stop offset="0.65" stop-color="#ff1ee2"/><stop offset="0.8" stop-color="#ff0ddf"/><stop offset="1" stop-color="#ff00db"/></linearGradient><linearGradient id="g25" gradientUnits="userSpaceOnUse" x1="1213.6" y1="180.6" x2="1350.6" y2="285.7"><stop offset="0" stop-color="#ffffff"/><stop offset="0.1" stop-color="#ffbefa"/><stop offset="0.2" stop-color="#ff8ff6"/><stop offset="0.35" stop-color="#ff5bf2"/><stop offset="0.5" stop-color="#ff38ee"/><stop offset="0.65" stop-color="#ff1feb"/><stop offset="0.8" stop-color="#ff0ee9"/><stop offset="1" stop-color="#ff00e7"/></linearGradient><linearGradient id="g26" gradientUnits="userSpaceOnUse" x1="1213.6" y1="180.6" x2="1347.1" y2="288.7"><stop offset="0" stop-color="#ffffff"/><stop offset="0.1" stop-color="#ffbffd"/><stop offset="0.2" stop-color="#ff90fb"/><stop offset="0.35" stop-color="#ff5df9"/><stop offset="0.5" stop-color="#ff39f7"/><stop offset="0.65" stop-color="#ff20f6"/><stop offset="0.8" stop-color="#ff0ef5"/><stop offset="1" stop-color="#ff00f3"/></linearGradient><linearGradient id="g27" gradientUnits="userSpaceOnUse" x1="1213.6" y1="180.6" x2="1343.7" y2="291.7"><stop offset="0" stop-color="#ffffff"/><stop offset="0.1" stop-color="#ffc0ff"/><stop offset="0.2" stop-color="#ff91ff"/><stop offset="0.35" stop-color="#fe5eff"/><stop offset="0.5" stop-color="#fe3aff"/><stop offset="0.65" stop-color="#fe20ff"/><stop offset="0.8" stop-color="#fe0eff"/><stop offset="1" stop-color="#fe00ff"/></linearGradient><linearGradient id="g28" gradientUnits="userSpaceOnUse" x1="1213.6" y1="180.6" x2="1340.3" y2="294.7"><stop offset="0" stop-color="#ffffff"/><stop offset="0.1" stop-color="#fcbfff"/><stop offset="0.2" stop-color="#fa90ff"/><stop offset="0.35" stop-color="#f75dff"/><stop offset="0.5" stop-color="#f539ff"/><stop offset="0.65" stop-color="#f420ff"/><stop offset="0.8" stop-color="#f20eff"/><stop offset="1" stop-color="#f100ff"/></linearGradient><linearGradient id="g29" gradientUnits="userSpaceOnUse" x1="1213.6" y1="180.6" x2="1337" y2="297.7"><stop offset="0" stop-color="#ffffff"/><stop offset="0.1" stop-color="#fabeff"/><stop offset="0.2" stop-color="#f58fff"/><stop offset="0.35" stop-color="#f05bff"/><stop offset="0.5" stop-color="#ed38ff"/><stop offset="0.65" stop-color="#ea1fff"/><stop offset="0.8" stop-color="#e70eff"/><stop offset="1" stop-color="#e500ff"/></linearGradient><linearGradient id="g30" gradientUnits="userSpaceOnUse" x1="1213.6" y1="180.6" x2="1333.6" y2="300.6"><stop offset="0" stop-color="#ffffff"/><stop offset="0.1" stop-color="#f7beff"/><stop offset="0.2" stop-color="#f18dff"/><stop offset="0.35" stop-color="#ea5aff"/><stop offset="0.5" stop-color="#e437ff"/><stop offset="0.65" stop-color="#e01fff"/><stop offset="0.8" stop-color="#dd0dff"/><stop offset="1" stop-color="#d900ff"/></linearGradient><linearGradient id="g31" gradientUnits="userSpaceOnUse" x1="1213.6" y1="180.6" x2="1330.3" y2="303.6"><stop offset="0" stop-color="#ffffff"/><stop offset="0.1" stop-color="#f4bdff"/><stop offset="0.2" stop-color="#ec8cff"/><stop offset="0.35" stop-color="#e359ff"/><stop offset="0.5" stop-color="#dc36ff"/><stop offset="0.65" stop-color="#d71eff"/><stop offset="0.8" stop-color="#d30dff"/><stop offset="1" stop-color="#cf00ff"/></linearGradient><linearGradient id="g32" gradientUnits="userSpaceOnUse" x1="1213.6" y1="180.6" x2="1327" y2="306.5"><stop offset="0" stop-color="#ffffff"/><stop offset="0.1" stop-color="#f2bcff"/><stop offset="0.2" stop-color="#e88bff"/><stop offset="0.35" stop-color="#dd58ff"/><stop offset="0.5" stop-color="#d535ff"/><stop offset="0.65" stop-color="#ce1dff"/><stop offset="0.8" stop-color="#c90dff"/><stop offset="1" stop-color="#c400ff"/></linearGradient><linearGradient id="g33" gradientUnits="userSpaceOnUse" x1="1213.6" y1="180.6" x2="1323.7" y2="309.4"><stop offset="0" stop-color="#ffffff"/><stop offset="0.1" stop-color="#efbbff"/><stop offset="0.2" stop-color="#e48aff"/><stop offset="0.35" stop-color="#d757ff"/><stop offset="0.5" stop-color="#cd35ff"/><stop offset="0.65" stop-color="#c61dff"/><stop offset="0.8" stop-color="#c00dff"/><stop offset="1" stop-color="#ba00ff"/></linearGradient><linearGradient id="g34" gradientUnits="userSpaceOnUse" x1="1213.6" y1="180.6" x2="1320.3" y2="312.4"><stop offset="0" stop-color="#ffffff"/><stop offset="0.1" stop-color="#edbaff"/><stop offset="0.2" stop-color="#e089ff"/><stop offset="0.35" stop-color="#d156ff"/><stop offset="0.5" stop-color="#c634ff"/><stop offset="0.65" stop-color="#be1cff"/><stop offset="0.8" stop-color="#b70cff"/><stop offset="1" stop-color="#b100ff"/></linearGradient><linearGradient id="g35" gradientUnits="userSpaceOnUse" x1="1213.6" y1="180.6" x2="1317" y2="315.3"><stop offset="0" stop-color="#ffffff"/><stop offset="0.1" stop-color="#ebb9ff"/><stop offset="0.2" stop-color="#db88ff"/><stop offset="0.35" stop-color="#cb55ff"/><stop offset="0.5" stop-color="#bf33ff"/><stop offset="0.65" stop-color="#b61cff"/><stop offset="0.8" stop-color="#af0cff"/><stop offset="1" stop-color="#a700ff"/></linearGradient><linearGradient id="g36" gradientUnits="userSpaceOnUse" x1="1213.6" y1="180.6" x2="1313.6" y2="318.3"><stop offset="0" stop-color="#ffffff"/><stop offset="0.1" stop-color="#e8b8ff"/><stop offset="0.2" stop-color="#d787ff"/><stop offset="0.35" stop-color="#c554ff"/><stop offset="0.5" stop-color="#b832ff"/><stop offset="0.65" stop-color="#ae1bff"/><stop offset="0.8" stop-color="#a70cff"/><stop offset="1" stop-color="#9f00ff"/></linearGradient><linearGradient id="g37" gradientUnits="userSpaceOnUse" x1="1213.6" y1="180.6" x2="1310.3" y2="321.3"><stop offset="0" stop-color="#ffffff"/><stop offset="0.1" stop-color="#e6b8ff"/><stop offset="0.2" stop-color="#d386ff"/><stop offset="0.35" stop-color="#c053ff"/><stop offset="0.5" stop-color="#b132ff"/><stop offset="0.65" stop-color="#a71bff"/><stop offset="0.8" stop-color="#9f0cff"/><stop offset="1" stop-color="#9600ff"/></linearGradient><linearGradient id="g38" gradientUnits="userSpaceOnUse" x1="1213.6" y1="180.6" x2="1306.9" y2="324.2"><stop offset="0" stop-color="#ffffff"/><stop offset="0.1" stop-color="#e3b7ff"/><stop offset="0.2" stop-color="#cf85ff"/><stop offset="0.35" stop-color="#ba52ff"/><stop offset="0.5" stop-color="#ab31ff"/><stop offset="0.65" stop-color="#a01bff"/><stop offset="0.8" stop-color="#970bff"/><stop offset="1" stop-color="#8e00ff"/></linearGradient><linearGradient id="g39" gradientUnits="userSpaceOnUse" x1="1213.6" y1="180.6" x2="1303.5" y2="327.3"><stop offset="0" stop-color="#ffffff"/><stop offset="0.1" stop-color="#e1b6ff"/><stop offset="0.2" stop-color="#cb83ff"/><stop offset="0.35" stop-color="#b551ff"/><stop offset="0.5" stop-color="#a530ff"/><stop offset="0.65" stop-color="#991aff"/><stop offset="0.8" stop-color="#900bff"/><stop offset="1" stop-color="#8600ff"/></linearGradient><linearGradient id="g40" gradientUnits="userSpaceOnUse" x1="1213.6" y1="180.6" x2="1300" y2="330.3"><stop offset="0" stop-color="#ffffff"/><stop offset="0.1" stop-color="#dfb5ff"/><stop offset="0.2" stop-color="#c882ff"/><stop offset="0.35" stop-color="#af50ff"/><stop offset="0.5" stop-color="#9e2fff"/><stop offset="0.65" stop-color="#921aff"/><stop offset="0.8" stop-color="#880bff"/><stop offset="1" stop-color="#7f00ff"/></linearGradient><linearGradient id="g41" gradientUnits="userSpaceOnUse" x1="1213.6" y1="180.6" x2="1296.6" y2="333.4"><stop offset="0" stop-color="#ffffff"/><stop offset="0.1" stop-color="#dcb4ff"/><stop offset="0.2" stop-color="#c481ff"/><stop offset="0.35" stop-color="#aa4fff"/><stop offset="0.5" stop-color="#982fff"/><stop offset="0.65" stop-color="#8b19ff"/><stop offset="0.8" stop-color="#810bff"/><stop offset="1" stop-color="#7700ff"/></linearGradient><linearGradient id="g42" gradientUnits="userSpaceOnUse" x1="1213.6" y1="180.6" x2="1293" y2="336.5"><stop offset="0" stop-color="#ffffff"/><stop offset="0.1" stop-color="#dab3ff"/><stop offset="0.2" stop-color="#c080ff"/><stop offset="0.35" stop-color="#a54eff"/><stop offset="0.5" stop-color="#922eff"/><stop offset="0.65" stop-color="#8519ff"/><stop offset="0.8" stop-color="#7a0bff"/><stop offset="1" stop-color="#7000ff"/></linearGradient><linearGradient id="g43" gradientUnits="userSpaceOnUse" x1="1213.6" y1="180.6" x2="1289.5" y2="339.6"><stop offset="0" stop-color="#ffffff"/><stop offset="0.1" stop-color="#d7b2ff"/><stop offset="0.2" stop-color="#bc7fff"/><stop offset="0.35" stop-color="#a04dff"/><stop offset="0.5" stop-color="#8c2dff"/><stop offset="0.65" stop-color="#7e18ff"/><stop offset="0.8" stop-color="#740aff"/><stop offset="1" stop-color="#6900ff"/></linearGradient><linearGradient id="g44" gradientUnits="userSpaceOnUse" x1="1213.6" y1="180.6" x2="1285.8" y2="342.8"><stop offset="0" stop-color="#ffffff"/><stop offset="0.1" stop-color="#d5b2ff"/><stop offset="0.2" stop-color="#b87eff"/><stop offset="0.35" stop-color="#9b4cff"/><stop offset="0.5" stop-color="#872dff"/><stop offset="0.65" stop-color="#7818ff"/><stop offset="0.8" stop-color="#6d0aff"/><stop offset="1" stop-color="#6200ff"/></linearGradient><linearGradient id="g45" gradientUnits="userSpaceOnUse" x1="1213.6" y1="180.6" x2="1282.2" y2="346.1"><stop offset="0" stop-color="#ffffff"/><stop offset="0.1" stop-color="#d3b1ff"/><stop offset="0.2" stop-color="#b47dff"/><stop offset="0.35" stop-color="#964bff"/><stop offset="0.5" stop-color="#812cff"/><stop offset="0.65" stop-color="#7218ff"/><stop offset="0.8" stop-color="#670aff"/><stop offset="1" stop-color="#5c00ff"/></linearGradient><linearGradient id="g46" gradientUnits="userSpaceOnUse" x1="1213.6" y1="180.6" x2="1278.4" y2="349.4"><stop offset="0" stop-color="#ffffff"/><stop offset="0.1" stop-color="#d0b0ff"/><stop offset="0.2" stop-color="#b07cff"/><stop offset="0.35" stop-color="#914aff"/><stop offset="0.5" stop-color="#7b2cff"/><stop offset="0.65" stop-color="#6c17ff"/><stop offset="0.8" stop-color="#610aff"/><stop offset="1" stop-color="#5600ff"/></linearGradient><linearGradient id="g47" gradientUnits="userSpaceOnUse" x1="1213.6" y1="180.6" x2="1274.6" y2="352.8"><stop offset="0" stop-color="#ffffff"/><stop offset="0.1" stop-color="#ceafff"/><stop offset="0.2" stop-color="#ad7bff"/><stop offset="0.35" stop-color="#8c4aff"/><stop offset="0.5" stop-color="#762bff"/><stop offset="0.65" stop-color="#6617ff"/><stop offset="0.8" stop-color="#5b0aff"/><stop offset="1" stop-color="#4f00ff"/></linearGradient><linearGradient id="g48" gradientUnits="userSpaceOnUse" x1="1213.6" y1="180.6" x2="1270.7" y2="356.2"><stop offset="0" stop-color="#ffffff"/><stop offset="0.1" stop-color="#cbaeff"/><stop offset="0.2" stop-color="#a97aff"/><stop offset="0.35" stop-color="#8749ff"/><stop offset="0.5" stop-color="#702aff"/><stop offset="0.65" stop-color="#6017ff"/><stop offset="0.8" stop-color="#550aff"/><stop offset="1" stop-color="#4900ff"/></linearGradient><linearGradient id="g49" gradientUnits="userSpaceOnUse" x1="1213.6" y1="180.6" x2="1266.7" y2="359.8"><stop offset="0" stop-color="#ffffff"/><stop offset="0.1" stop-color="#c9adff"/><stop offset="0.2" stop-color="#a579ff"/><stop offset="0.35" stop-color="#8248ff"/><stop offset="0.5" stop-color="#6b2aff"/><stop offset="0.65" stop-color="#5b16ff"/><stop offset="0.8" stop-color="#4f09ff"/><stop offset="1" stop-color="#4300ff"/></linearGradient><linearGradient id="g50" gradientUnits="userSpaceOnUse" x1="1213.6" y1="180.6" x2="1262.6" y2="363.4"><stop offset="0" stop-color="#ffffff"/><stop offset="0.1" stop-color="#c6acff"/><stop offset="0.2" stop-color="#a178ff"/><stop offset="0.35" stop-color="#7d47ff"/><stop offset="0.5" stop-color="#6529ff"/><stop offset="0.65" stop-color="#5516ff"/><stop offset="0.8" stop-color="#4909ff"/><stop offset="1" stop-color="#3e00ff"/></linearGradient><linearGradient id="g51" gradientUnits="userSpaceOnUse" x1="1213.6" y1="180.6" x2="1258.4" y2="367.1"><stop offset="0" stop-color="#ffffff"/><stop offset="0.1" stop-color="#c3abff"/><stop offset="0.2" stop-color="#9d77ff"/><stop offset="0.35" stop-color="#7846ff"/><stop offset="0.5" stop-color="#6028ff"/><stop offset="0.65" stop-color="#5015ff"/><stop offset="0.8" stop-color="#4409ff"/><stop offset="1" stop-color="#3800ff"/></linearGradient><linearGradient id="g52" gradientUnits="userSpaceOnUse" x1="1213.6" y1="180.6" x2="1254.1" y2="370.9"><stop offset="0" stop-color="#ffffff"/><stop offset="0.1" stop-color="#c1aaff"/><stop offset="0.2" stop-color="#9976ff"/><stop offset="0.35" stop-color="#7345ff"/><stop offset="0.5" stop-color="#5b28ff"/><stop offset="0.65" stop-color="#4a15ff"/><stop offset="0.8" stop-color="#3e09ff"/><stop offset="1" stop-color="#3300ff"/></linearGradient><linearGradient id="g53" gradientUnits="userSpaceOnUse" x1="1213.6" y1="180.6" x2="1249.6" y2="374.8"><stop offset="0" stop-color="#ffffff"/><stop offset="0.1" stop-color="#bea9ff"/><stop offset="0.2" stop-color="#9574ff"/><stop offset="0.35" stop-color="#6e44ff"/><stop offset="0.5" stop-color="#5627ff"/><stop offset="0.65" stop-color="#4515ff"/><stop offset="0.8" stop-color="#3909ff"/><stop offset="1" stop-color="#2d00ff"/></linearGradient><linearGradient id="g54" gradientUnits="userSpaceOnUse" x1="1213.6" y1="180.6" x2="1245" y2="378.9"><stop offset="0" stop-color="#ffffff"/><stop offset="0.1" stop-color="#bba8ff"/><stop offset="0.2" stop-color="#9173ff"/><stop offset="0.35" stop-color="#6943ff"/><stop offset="0.5" stop-color="#5026ff"/><stop offset="0.65" stop-color="#4014ff"/><stop offset="0.8" stop-color="#3409ff"/><stop offset="1" stop-color="#2800ff"/></linearGradient><linearGradient id="g55" gradientUnits="userSpaceOnUse" x1="1213.6" y1="180.6" x2="1240.3" y2="383.1"><stop offset="0" stop-color="#ffffff"/><stop offset="0.1" stop-color="#b9a7ff"/><stop offset="0.2" stop-color="#8d72ff"/><stop offset="0.35" stop-color="#6442ff"/><stop offset="0.5" stop-color="#4b26ff"/><stop offset="0.65" stop-color="#3a14ff"/><stop offset="0.8" stop-color="#2e08ff"/><stop offset="1" stop-color="#2300ff"/></linearGradient><linearGradient id="g56" gradientUnits="userSpaceOnUse" x1="1213.6" y1="180.6" x2="1235.3" y2="387.4"><stop offset="0" stop-color="#ffffff"/><stop offset="0.1" stop-color="#b6a6ff"/><stop offset="0.2" stop-color="#8971ff"/><stop offset="0.35" stop-color="#6041ff"/><stop offset="0.5" stop-color="#4625ff"/><stop offset="0.65" stop-color="#3514ff"/><stop offset="0.8" stop-color="#2908ff"/><stop offset="1" stop-color="#1e00ff"/></linearGradient><linearGradient id="g57" gradientUnits="userSpaceOnUse" x1="1213.6" y1="180.6" x2="1230.2" y2="391.9"><stop offset="0" stop-color="#ffffff"/><stop offset="0.1" stop-color="#b3a5ff"/><stop offset="0.2" stop-color="#8570ff"/><stop offset="0.35" stop-color="#5b40ff"/><stop offset="0.5" stop-color="#4125ff"/><stop offset="0.65" stop-color="#3013ff"/><stop offset="0.8" stop-color="#2408ff"/><stop offset="1" stop-color="#1900ff"/></linearGradient><linearGradient id="g58" gradientUnits="userSpaceOnUse" x1="1213.6" y1="180.6" x2="1224.9" y2="396.6"><stop offset="0" stop-color="#ffffff"/><stop offset="0.1" stop-color="#b0a4ff"/><stop offset="0.2" stop-color="#806fff"/><stop offset="0.35" stop-color="#563fff"/><stop offset="0.5" stop-color="#3c24ff"/><stop offset="0.65" stop-color="#2b13ff"/><stop offset="0.8" stop-color="#1f08ff"/><stop offset="1" stop-color="#1500ff"/></linearGradient><linearGradient id="g59" gradientUnits="userSpaceOnUse" x1="1213.6" y1="180.6" x2="1219.4" y2="401.5"><stop offset="0" stop-color="#ffffff"/><stop offset="0.1" stop-color="#ada3ff"/><stop offset="0.2" stop-color="#7c6dff"/><stop offset="0.35" stop-color="#513eff"/><stop offset="0.5" stop-color="#3723ff"/><stop offset="0.65" stop-color="#2612ff"/><stop offset="0.8" stop-color="#1b08ff"/><stop offset="1" stop-color="#1000ff"/></linearGradient><linearGradient id="g60" gradientUnits="userSpaceOnUse" x1="1213.6" y1="180.6" x2="1213.6" y2="406.6"><stop offset="0" stop-color="#ffffff"/><stop offset="0.1" stop-color="#aaa2ff"/><stop offset="0.2" stop-color="#786cff"/><stop offset="0.35" stop-color="#4c3dff"/><stop offset="0.5" stop-color="#3223ff"/><stop offset="0.65" stop-color="#2112ff"/><stop offset="0.8" stop-color="#1608ff"/><stop offset="1" stop-color="#0c00ff"/></linearGradient><linearGradient id="g61" gradientUnits="userSpaceOnUse" x1="1213.6" y1="180.6" x2="1207.5" y2="412"><stop offset="0" stop-color="#ffffff"/><stop offset="0.1" stop-color="#a6a1ff"/><stop offset="0.2" stop-color="#736bff"/><stop offset="0.35" stop-color="#473cff"/><stop offset="0.5" stop-color="#2d22ff"/><stop offset="0.65" stop-color="#1c12ff"/><stop offset="0.8" stop-color="#1207ff"/><stop offset="1" stop-color="#0800ff"/></linearGradient><linearGradient id="g62" gradientUnits="userSpaceOnUse" x1="1213.6" y1="180.6" x2="1201.2" y2="417.6"><stop offset="0" stop-color="#ffffff"/><stop offset="0.1" stop-color="#a39fff"/><stop offset="0.2" stop-color="#6f69ff"/><stop offset="0.35" stop-color="#423bff"/><stop offset="0.5" stop-color="#2821ff"/><stop offset="0.65" stop-color="#1811ff"/><stop offset="0.8" stop-color="#0d07ff"/><stop offset="1" stop-color="#0400ff"/></linearGradient><linearGradient id="g63" gradientUnits="userSpaceOnUse" x1="1213.6" y1="180.6" x2="1194.5" y2="423.5"><stop offset="0" stop-color="#ffffff"/><stop offset="0.1" stop-color="#9f9eff"/><stop offset="0.2" stop-color="#6a68ff"/><stop offset="0.35" stop-color="#3d3aff"/><stop offset="0.5" stop-color="#2321ff"/><stop offset="0.65" stop-color="#1311ff"/><stop offset="0.8" stop-color="#0907ff"/><stop offset="1" stop-color="#0100ff"/></linearGradient><linearGradient id="g64" gradientUnits="userSpaceOnUse" x1="1213.6" y1="180.6" x2="1188.6" y2="418.7"><stop offset="0" stop-color="#ffffff"/><stop offset="0.1" stop-color="#9fa0ff"/><stop offset="0.2" stop-color="#696aff"/><stop offset="0.35" stop-color="#3b3dff"/><stop offset="0.5" stop-color="#2123ff"/><stop offset="0.65" stop-color="#1113ff"/><stop offset="0.8" stop-color="#0709ff"/><stop offset="1" stop-color="#0001ff"/></linearGradient><linearGradient id="g65" gradientUnits="userSpaceOnUse" x1="1213.6" y1="180.6" x2="1184.5" y2="401.6"><stop offset="0" stop-color="#ffffff"/><stop offset="0.1" stop-color="#a2a5ff"/><stop offset="0.2" stop-color="#6d71ff"/><stop offset="0.35" stop-color="#3e43ff"/><stop offset="0.5" stop-color="#2329ff"/><stop offset="0.65" stop-color="#1218ff"/><stop offset="0.8" stop-color="#080dff"/><stop offset="1" stop-color="#0004ff"/></linearGradient><linearGradient id="g66" gradientUnits="userSpaceOnUse" x1="1213.6" y1="180.6" x2="1181" y2="386.6"><stop offset="0" stop-color="#ffffff"/><stop offset="0.1" stop-color="#a5aaff"/><stop offset="0.2" stop-color="#7077ff"/><stop offset="0.35" stop-color="#404aff"/><stop offset="0.5" stop-color="#252fff"/><stop offset="0.65" stop-color="#131dff"/><stop offset="0.8" stop-color="#0811ff"/><stop offset="1" stop-color="#0007ff"/></linearGradient><linearGradient id="g67" gradientUnits="userSpaceOnUse" x1="1213.6" y1="180.6" x2="1177.9" y2="373.5"><stop offset="0" stop-color="#ffffff"/><stop offset="0.1" stop-color="#a8afff"/><stop offset="0.2" stop-color="#737dff"/><stop offset="0.35" stop-color="#4350ff"/><stop offset="0.5" stop-color="#2634ff"/><stop offset="0.65" stop-color="#1422ff"/><stop offset="0.8" stop-color="#0816ff"/><stop offset="1" stop-color="#000bff"/></linearGradient><linearGradient id="g68" gradientUnits="userSpaceOnUse" x1="1213.6" y1="180.6" x2="1175.1" y2="361.8"><stop offset="0" stop-color="#ffffff"/><stop offset="0.1" stop-color="#abb3ff"/><stop offset="0.2" stop-color="#7683ff"/><stop offset="0.35" stop-color="#4556ff"/><stop offset="0.5" stop-color="#283aff"/><stop offset="0.65" stop-color="#1527ff"/><stop offset="0.8" stop-color="#091aff"/><stop offset="1" stop-color="#000fff"/></linearGradient><linearGradient id="g69" gradientUnits="userSpaceOnUse" x1="1213.6" y1="180.6" x2="1172.6" y2="351.4"><stop offset="0" stop-color="#ffffff"/><stop offset="0.1" stop-color="#adb7ff"/><stop offset="0.2" stop-color="#7988ff"/><stop offset="0.35" stop-color="#475bff"/><stop offset="0.5" stop-color="#293fff"/><stop offset="0.65" stop-color="#162cff"/><stop offset="0.8" stop-color="#091fff"/><stop offset="1" stop-color="#0013ff"/></linearGradient><linearGradient id="g70" gradientUnits="userSpaceOnUse" x1="1213.6" y1="180.6" x2="1170.4" y2="342"><stop offset="0" stop-color="#ffffff"/><stop offset="0.1" stop-color="#afbaff"/><stop offset="0.2" stop-color="#7b8dff"/><stop offset="0.35" stop-color="#4a61ff"/><stop offset="0.5" stop-color="#2b45ff"/><stop offset="0.65" stop-color="#1731ff"/><stop offset="0.8" stop-color="#0a24ff"/><stop offset="1" stop-color="#0017ff"/></linearGradient><linearGradient id="g71" gradientUnits="userSpaceOnUse" x1="1213.6" y1="180.6" x2="1168.3" y2="333.4"><stop offset="0" stop-color="#ffffff"/><stop offset="0.1" stop-color="#b1bdff"/><stop offset="0.2" stop-color="#7d91ff"/><stop offset="0.35" stop-color="#4c66ff"/><stop offset="0.5" stop-color="#2c4aff"/><stop offset="0.65" stop-color="#1836ff"/><stop offset="0.8" stop-color="#0a28ff"/><stop offset="1" stop-color="#001bff"/></linearGradient><linearGradient id="g72" gradientUnits="userSpaceOnUse" x1="1213.6" y1="180.6" x2="1166.5" y2="325.6"><stop offset="0" stop-color="#ffffff"/><stop offset="0.1" stop-color="#b3c0ff"/><stop offset="0.2" stop-color="#8096ff"/><stop offset="0.35" stop-color="#4e6bff"/><stop offset="0.5" stop-color="#2e4fff"/><stop offset="0.65" stop-color="#193bff"/><stop offset="0.8" stop-color="#0b2cff"/><stop offset="1" stop-color="#001fff"/></linearGradient><linearGradient id="g73" gradientUnits="userSpaceOnUse" x1="1213.6" y1="180.6" x2="1164.8" y2="318.5"><stop offset="0" stop-color="#ffffff"/><stop offset="0.1" stop-color="#b5c3ff"/><stop offset="0.2" stop-color="#829aff"/><stop offset="0.35" stop-color="#4f70ff"/><stop offset="0.5" stop-color="#2f53ff"/><stop offset="0.65" stop-color="#1940ff"/><stop offset="0.8" stop-color="#0b31ff"/><stop offset="1" stop-color="#0023ff"/></linearGradient><linearGradient id="g74" gradientUnits="userSpaceOnUse" x1="1213.6" y1="180.6" x2="1163.2" y2="311.9"><stop offset="0" stop-color="#ffffff"/><stop offset="0.1" stop-color="#b6c6ff"/><stop offset="0.2" stop-color="#849eff"/><stop offset="0.35" stop-color="#5174ff"/><stop offset="0.5" stop-color="#3058ff"/><stop offset="0.65" stop-color="#1a44ff"/><stop offset="0.8" stop-color="#0b35ff"/><stop offset="1" stop-color="#0027ff"/></linearGradient><linearGradient id="g75" gradientUnits="userSpaceOnUse" x1="1213.6" y1="180.6" x2="1161.8" y2="305.8"><stop offset="0" stop-color="#ffffff"/><stop offset="0.1" stop-color="#b8c8ff"/><stop offset="0.2" stop-color="#86a1ff"/><stop offset="0.35" stop-color="#5379ff"/><stop offset="0.5" stop-color="#325dff"/><stop offset="0.65" stop-color="#1b49ff"/><stop offset="0.8" stop-color="#0c3aff"/><stop offset="1" stop-color="#002bff"/></linearGradient><linearGradient id="g76" gradientUnits="userSpaceOnUse" x1="1213.6" y1="180.6" x2="1160.4" y2="300.1"><stop offset="0" stop-color="#ffffff"/><stop offset="0.1" stop-color="#b9cbff"/><stop offset="0.2" stop-color="#88a5ff"/><stop offset="0.35" stop-color="#557dff"/><stop offset="0.5" stop-color="#3361ff"/><stop offset="0.65" stop-color="#1c4dff"/><stop offset="0.8" stop-color="#0c3eff"/><stop offset="1" stop-color="#002fff"/></linearGradient><linearGradient id="g77" gradientUnits="userSpaceOnUse" x1="1213.6" y1="180.6" x2="1159.2" y2="294.8"><stop offset="0" stop-color="#ffffff"/><stop offset="0.1" stop-color="#bacdff"/><stop offset="0.2" stop-color="#89a8ff"/><stop offset="0.35" stop-color="#5681ff"/><stop offset="0.5" stop-color="#3466ff"/><stop offset="0.65" stop-color="#1d52ff"/><stop offset="0.8" stop-color="#0c42ff"/><stop offset="1" stop-color="#0033ff"/></linearGradient><linearGradient id="g78" gradientUnits="userSpaceOnUse" x1="1213.6" y1="180.6" x2="1158" y2="289.8"><stop offset="0" stop-color="#ffffff"/><stop offset="0.1" stop-color="#bccfff"/><stop offset="0.2" stop-color="#8bacff"/><stop offset="0.35" stop-color="#5885ff"/><stop offset="0.5" stop-color="#356aff"/><stop offset="0.65" stop-color="#1d56ff"/><stop offset="0.8" stop-color="#0d47ff"/><stop offset="1" stop-color="#0037ff"/></linearGradient><linearGradient id="g79" gradientUnits="userSpaceOnUse" x1="1213.6" y1="180.6" x2="1156.9" y2="285.1"><stop offset="0" stop-color="#ffffff"/><stop offset="0.1" stop-color="#bdd1ff"/><stop offset="0.2" stop-color="#8dafff"/><stop offset="0.35" stop-color="#5989ff"/><stop offset="0.5" stop-color="#366eff"/><stop offset="0.65" stop-color="#1e5aff"/><stop offset="0.8" stop-color="#0d4bff"/><stop offset="1" stop-color="#003bff"/></linearGradient><linearGradient id="g80" gradientUnits="userSpaceOnUse" x1="1213.6" y1="180.6" x2="1155.8" y2="280.7"><stop offset="0" stop-color="#ffffff"/><stop offset="0.1" stop-color="#bed3ff"/><stop offset="0.2" stop-color="#8eb2ff"/><stop offset="0.35" stop-color="#5b8dff"/><stop offset="0.5" stop-color="#3872ff"/><stop offset="0.65" stop-color="#1f5fff"/><stop offset="0.8" stop-color="#0e4fff"/><stop offset="1" stop-color="#003fff"/></linearGradient><linearGradient id="g81" gradientUnits="userSpaceOnUse" x1="1213.6" y1="180.6" x2="1154.8" y2="276.5"><stop offset="0" stop-color="#ffffff"/><stop offset="0.1" stop-color="#bfd5ff"/><stop offset="0.2" stop-color="#90b5ff"/><stop offset="0.35" stop-color="#5c91ff"/><stop offset="0.5" stop-color="#3977ff"/><stop offset="0.65" stop-color="#2063ff"/><stop offset="0.8" stop-color="#0e53ff"/><stop offset="1" stop-color="#0044ff"/></linearGradient><linearGradient id="g82" gradientUnits="userSpaceOnUse" x1="1213.6" y1="180.6" x2="1153.9" y2="272.6"><stop offset="0" stop-color="#ffffff"/><stop offset="0.1" stop-color="#c0d7ff"/><stop offset="0.2" stop-color="#91b7ff"/><stop offset="0.35" stop-color="#5e94ff"/><stop offset="0.5" stop-color="#3a7bff"/><stop offset="0.65" stop-color="#2067ff"/><stop offset="0.8" stop-color="#0e58ff"/><stop offset="1" stop-color="#0048ff"/></linearGradient><linearGradient id="g83" gradientUnits="userSpaceOnUse" x1="1213.6" y1="180.6" x2="1153" y2="268.8"><stop offset="0" stop-color="#ffffff"/><stop offset="0.1" stop-color="#c1d8ff"/><stop offset="0.2" stop-color="#93baff"/><stop offset="0.35" stop-color="#5f98ff"/><stop offset="0.5" stop-color="#3b7fff"/><stop offset="0.65" stop-color="#216bff"/><stop offset="0.8" stop-color="#0f5cff"/><stop offset="1" stop-color="#004cff"/></linearGradient><linearGradient id="g84" gradientUnits="userSpaceOnUse" x1="1213.6" y1="180.6" x2="1152.1" y2="265.2"><stop offset="0" stop-color="#ffffff"/><stop offset="0.1" stop-color="#c2daff"/><stop offset="0.2" stop-color="#94bdff"/><stop offset="0.35" stop-color="#609cff"/><stop offset="0.5" stop-color="#3c83ff"/><stop offset="0.65" stop-color="#226fff"/><stop offset="0.8" stop-color="#0f60ff"/><stop offset="1" stop-color="#0050ff"/></linearGradient><linearGradient id="g85" gradientUnits="userSpaceOnUse" x1="1213.6" y1="180.6" x2="1151.3" y2="261.8"><stop offset="0" stop-color="#ffffff"/><stop offset="0.1" stop-color="#c3dcff"/><stop offset="0.2" stop-color="#95bfff"/><stop offset="0.35" stop-color="#629fff"/><stop offset="0.5" stop-color="#3d87ff"/><stop offset="0.65" stop-color="#2274ff"/><stop offset="0.8" stop-color="#0f64ff"/><stop offset="1" stop-color="#0054ff"/></linearGradient><linearGradient id="g86" gradientUnits="userSpaceOnUse" x1="1213.6" y1="180.6" x2="1150.5" y2="258.5"><stop offset="0" stop-color="#ffffff"/><stop offset="0.1" stop-color="#c4ddff"/><stop offset="0.2" stop-color="#96c2ff"/><stop offset="0.35" stop-color="#63a2ff"/><stop offset="0.5" stop-color="#3e8aff"/><stop offset="0.65" stop-color="#2378ff"/><stop offset="0.8" stop-color="#1069ff"/><stop offset="1" stop-color="#0059ff"/></linearGradient><linearGradient id="g87" gradientUnits="userSpaceOnUse" x1="1213.6" y1="180.6" x2="1149.8" y2="255.3"><stop offset="0" stop-color="#ffffff"/><stop offset="0.1" stop-color="#c5dfff"/><stop offset="0.2" stop-color="#98c4ff"/><stop offset="0.35" stop-color="#64a6ff"/><stop offset="0.5" stop-color="#3f8eff"/><stop offset="0.65" stop-color="#247cff"/><stop offset="0.8" stop-color="#106dff"/><stop offset="1" stop-color="#005dff"/></linearGradient><linearGradient id="g88" gradientUnits="userSpaceOnUse" x1="1213.6" y1="180.6" x2="1149.1" y2="252.3"><stop offset="0" stop-color="#ffffff"/><stop offset="0.1" stop-color="#c6e0ff"/><stop offset="0.2" stop-color="#99c7ff"/><stop offset="0.35" stop-color="#66a9ff"/><stop offset="0.5" stop-color="#4092ff"/><stop offset="0.65" stop-color="#2480ff"/><stop offset="0.8" stop-color="#1071ff"/><stop offset="1" stop-color="#0061ff"/></linearGradient><linearGradient id="g89" gradientUnits="userSpaceOnUse" x1="1213.6" y1="180.6" x2="1148.4" y2="249.3"><stop offset="0" stop-color="#ffffff"/><stop offset="0.1" stop-color="#c7e1ff"/><stop offset="0.2" stop-color="#9ac9ff"/><stop offset="0.35" stop-color="#67acff"/><stop offset="0.5" stop-color="#4196ff"/><stop offset="0.65" stop-color="#2584ff"/><stop offset="0.8" stop-color="#1175ff"/><stop offset="1" stop-color="#0066ff"/></linearGradient><linearGradient id="g90" gradientUnits="userSpaceOnUse" x1="1213.6" y1="180.6" x2="1147.7" y2="246.5"><stop offset="0" stop-color="#ffffff"/><stop offset="0.1" stop-color="#c8e3ff"/><stop offset="0.2" stop-color="#9bccff"/><stop offset="0.35" stop-color="#68b0ff"/><stop offset="0.5" stop-color="#429aff"/><stop offset="0.65" stop-color="#2688ff"/><stop offset="0.8" stop-color="#117aff"/><stop offset="1" stop-color="#006aff"/></linearGradient><linearGradient id="g91" gradientUnits="userSpaceOnUse" x1="1213.6" y1="180.6" x2="1147" y2="243.8"><stop offset="0" stop-color="#ffffff"/><stop offset="0.1" stop-color="#c8e4ff"/><stop offset="0.2" stop-color="#9cceff"/><stop offset="0.35" stop-color="#69b3ff"/><stop offset="0.5" stop-color="#439dff"/><stop offset="0.65" stop-color="#268cff"/><stop offset="0.8" stop-color="#117eff"/><stop offset="1" stop-color="#006fff"/></linearGradient><linearGradient id="g92" gradientUnits="userSpaceOnUse" x1="1213.6" y1="180.6" x2="1146.4" y2="241.1"><stop offset="0" stop-color="#ffffff"/><stop offset="0.1" stop-color="#c9e5ff"/><stop offset="0.2" stop-color="#9ed0ff"/><stop offset="0.35" stop-color="#6bb6ff"/><stop offset="0.5" stop-color="#44a1ff"/><stop offset="0.65" stop-color="#2790ff"/><stop offset="0.8" stop-color="#1282ff"/><stop offset="1" stop-color="#0073ff"/></linearGradient><linearGradient id="g93" gradientUnits="userSpaceOnUse" x1="1213.6" y1="180.6" x2="1145.8" y2="238.5"><stop offset="0" stop-color="#ffffff"/><stop offset="0.1" stop-color="#cae7ff"/><stop offset="0.2" stop-color="#9fd2ff"/><stop offset="0.35" stop-color="#6cb9ff"/><stop offset="0.5" stop-color="#45a5ff"/><stop offset="0.65" stop-color="#2894ff"/><stop offset="0.8" stop-color="#1287ff"/><stop offset="1" stop-color="#0078ff"/></linearGradient><linearGradient id="g94" gradientUnits="userSpaceOnUse" x1="1213.6" y1="180.6" x2="1145.2" y2="236"><stop offset="0" stop-color="#ffffff"/><stop offset="0.1" stop-color="#cbe8ff"/><stop offset="0.2" stop-color="#a0d4ff"/><stop offset="0.35" stop-color="#6dbcff"/><stop offset="0.5" stop-color="#46a9ff"/><stop offset="0.65" stop-color="#2899ff"/><stop offset="0.8" stop-color="#128bff"/><stop offset="1" stop-color="#007cff"/></linearGradient><linearGradient id="g95" gradientUnits="userSpaceOnUse" x1="1213.6" y1="180.6" x2="1144.6" y2="233.5"><stop offset="0" stop-color="#ffffff"/><stop offset="0.1" stop-color="#cbe9ff"/><stop offset="0.2" stop-color="#a1d6ff"/><stop offset="0.35" stop-color="#6ebfff"/><stop offset="0.5" stop-color="#47acff"/><stop offset="0.65" stop-color="#299dff"/><stop offset="0.8" stop-color="#1390ff"/><stop offset="1" stop-color="#0081ff"/></linearGradient><linearGradient id="g96" gradientUnits="userSpaceOnUse" x1="1213.6" y1="180.6" x2="1144" y2="231.1"><stop offset="0" stop-color="#ffffff"/><stop offset="0.1" stop-color="#cceaff"/><stop offset="0.2" stop-color="#a2d9ff"/><stop offset="0.35" stop-color="#6fc2ff"/><stop offset="0.5" stop-color="#48b0ff"/><stop offset="0.65" stop-color="#2aa1ff"/><stop offset="0.8" stop-color="#1394ff"/><stop offset="1" stop-color="#0086ff"/></linearGradient><linearGradient id="g97" gradientUnits="userSpaceOnUse" x1="1213.6" y1="180.6" x2="1143.5" y2="228.8"><stop offset="0" stop-color="#ffffff"/><stop offset="0.1" stop-color="#cdebff"/><stop offset="0.2" stop-color="#a3dbff"/><stop offset="0.35" stop-color="#70c6ff"/><stop offset="0.5" stop-color="#49b4ff"/><stop offset="0.65" stop-color="#2ba5ff"/><stop offset="0.8" stop-color="#1399ff"/><stop offset="1" stop-color="#008bff"/></linearGradient><linearGradient id="g98" gradientUnits="userSpaceOnUse" x1="1213.6" y1="180.6" x2="1142.9" y2="226.5"><stop offset="0" stop-color="#ffffff"/><stop offset="0.1" stop-color="#ceedff"/><stop offset="0.2" stop-color="#a4ddff"/><stop offset="0.35" stop-color="#72c9ff"/><stop offset="0.5" stop-color="#4ab8ff"/><stop offset="0.65" stop-color="#2baaff"/><stop offset="0.8" stop-color="#149eff"/><stop offset="1" stop-color="#0090ff"/></linearGradient><linearGradient id="g99" gradientUnits="userSpaceOnUse" x1="1213.6" y1="180.6" x2="1142.4" y2="224.2"><stop offset="0" stop-color="#ffffff"/><stop offset="0.1" stop-color="#ceeeff"/><stop offset="0.2" stop-color="#a5dfff"/><stop offset="0.35" stop-color="#73ccff"/><stop offset="0.5" stop-color="#4bbcff"/><stop offset="0.65" stop-color="#2caeff"/><stop offset="0.8" stop-color="#14a3ff"/><stop offset="1" stop-color="#0095ff"/></linearGradient><linearGradient id="g100" gradientUnits="userSpaceOnUse" x1="1213.6" y1="180.6" x2="1141.9" y2="222"><stop offset="0" stop-color="#ffffff"/><stop offset="0.1" stop-color="#cfefff"/><stop offset="0.2" stop-color="#a6e1ff"/><stop offset="0.35" stop-color="#74cfff"/><stop offset="0.5" stop-color="#4cc0ff"/><stop offset="0.65" stop-color="#2db3ff"/><stop offset="0.8" stop-color="#15a7ff"/><stop offset="1" stop-color="#009bff"/></linearGradient><linearGradient id="g101" gradientUnits="userSpaceOnUse" x1="1213.6" y1="180.6" x2="1141.4" y2="219.8"><stop offset="0" stop-color="#ffffff"/><stop offset="0.1" stop-color="#d0f0ff"/><stop offset="0.2" stop-color="#a7e3ff"/><stop offset="0.35" stop-color="#75d2ff"/><stop offset="0.5" stop-color="#4dc4ff"/><stop offset="0.65" stop-color="#2db7ff"/><stop offset="0.8" stop-color="#15acff"/><stop offset="1" stop-color="#00a0ff"/></linearGradient><linearGradient id="g102" gradientUnits="userSpaceOnUse" x1="1213.6" y1="180.6" x2="1140.8" y2="217.7"><stop offset="0" stop-color="#ffffff"/><stop offset="0.1" stop-color="#d0f1ff"/><stop offset="0.2" stop-color="#a8e5ff"/><stop offset="0.35" stop-color="#76d5ff"/><stop offset="0.5" stop-color="#4ec7ff"/><stop offset="0.65" stop-color="#2ebcff"/><stop offset="0.8" stop-color="#15b2ff"/><stop offset="1" stop-color="#00a6ff"/></linearGradient><linearGradient id="g103" gradientUnits="userSpaceOnUse" x1="1213.6" y1="180.6" x2="1140.3" y2="215.5"><stop offset="0" stop-color="#ffffff"/><stop offset="0.1" stop-color="#d1f2ff"/><stop offset="0.2" stop-color="#a9e7ff"/><stop offset="0.35" stop-color="#77d8ff"/><stop offset="0.5" stop-color="#4fcbff"/><stop offset="0.65" stop-color="#2fc0ff"/><stop offset="0.8" stop-color="#16b7ff"/><stop offset="1" stop-color="#00acff"/></linearGradient><linearGradient id="g104" gradientUnits="userSpaceOnUse" x1="1213.6" y1="180.6" x2="1139.8" y2="213.4"><stop offset="0" stop-color="#ffffff"/><stop offset="0.1" stop-color="#d2f3ff"/><stop offset="0.2" stop-color="#aae9ff"/><stop offset="0.35" stop-color="#79dbff"/><stop offset="0.5" stop-color="#50d0ff"/><stop offset="0.65" stop-color="#30c5ff"/><stop offset="0.8" stop-color="#16bcff"/><stop offset="1" stop-color="#00b2ff"/></linearGradient><linearGradient id="g105" gradientUnits="userSpaceOnUse" x1="1213.6" y1="180.6" x2="1139.3" y2="211.4"><stop offset="0" stop-color="#ffffff"/><stop offset="0.1" stop-color="#d2f5ff"/><stop offset="0.2" stop-color="#abebff"/><stop offset="0.35" stop-color="#7adfff"/><stop offset="0.5" stop-color="#51d4ff"/><stop offset="0.65" stop-color="#30caff"/><stop offset="0.8" stop-color="#17c2ff"/><stop offset="1" stop-color="#00b8ff"/></linearGradient><linearGradient id="g106" gradientUnits="userSpaceOnUse" x1="1213.6" y1="180.6" x2="1138.9" y2="209.3"><stop offset="0" stop-color="#ffffff"/><stop offset="0.1" stop-color="#d3f6ff"/><stop offset="0.2" stop-color="#acedff"/><stop offset="0.35" stop-color="#7be2ff"/><stop offset="0.5" stop-color="#52d8ff"/><stop offset="0.65" stop-color="#31cfff"/><stop offset="0.8" stop-color="#17c7ff"/><stop offset="1" stop-color="#00beff"/></linearGradient><linearGradient id="g107" gradientUnits="userSpaceOnUse" x1="1213.6" y1="180.6" x2="1138.4" y2="207.2"><stop offset="0" stop-color="#ffffff"/><stop offset="0.1" stop-color="#d4f7ff"/><stop offset="0.2" stop-color="#adefff"/><stop offset="0.35" stop-color="#7ce5ff"/><stop offset="0.5" stop-color="#53dcff"/><stop offset="0.65" stop-color="#32d4ff"/><stop offset="0.8" stop-color="#17cdff"/><stop offset="1" stop-color="#00c5ff"/></linearGradient><linearGradient id="g108" gradientUnits="userSpaceOnUse" x1="1213.6" y1="180.6" x2="1137.9" y2="205.2"><stop offset="0" stop-color="#ffffff"/><stop offset="0.1" stop-color="#d4f8ff"/><stop offset="0.2" stop-color="#aef1ff"/><stop offset="0.35" stop-color="#7de8ff"/><stop offset="0.5" stop-color="#55e1ff"/><stop offset="0.65" stop-color="#33d9ff"/><stop offset="0.8" stop-color="#18d3ff"/><stop offset="1" stop-color="#00ccff"/></linearGradient><linearGradient id="g109" gradientUnits="userSpaceOnUse" x1="1213.6" y1="180.6" x2="1137.4" y2="203.2"><stop offset="0" stop-color="#ffffff"/><stop offset="0.1" stop-color="#d5f9ff"/><stop offset="0.2" stop-color="#aff3ff"/><stop offset="0.35" stop-color="#7fecff"/><stop offset="0.5" stop-color="#56e5ff"/><stop offset="0.65" stop-color="#34dfff"/><stop offset="0.8" stop-color="#18d9ff"/><stop offset="1" stop-color="#00d3ff"/></linearGradient><linearGradient id="g110" gradientUnits="userSpaceOnUse" x1="1213.6" y1="180.6" x2="1136.9" y2="201.1"><stop offset="0" stop-color="#ffffff"/><stop offset="0.1" stop-color="#d6faff"/><stop offset="0.2" stop-color="#b1f5ff"/><stop offset="0.35" stop-color="#80efff"/><stop offset="0.5" stop-color="#57eaff"/><stop offset="0.65" stop-color="#35e4ff"/><stop offset="0.8" stop-color="#19e0ff"/><stop offset="1" stop-color="#00daff"/></linearGradient><linearGradient id="g111" gradientUnits="userSpaceOnUse" x1="1213.6" y1="180.6" x2="1136.4" y2="199.1"><stop offset="0" stop-color="#ffffff"/><stop offset="0.1" stop-color="#d6fbff"/><stop offset="0.2" stop-color="#b2f8ff"/><stop offset="0.35" stop-color="#81f3ff"/><stop offset="0.5" stop-color="#58eeff"/><stop offset="0.65" stop-color="#35eaff"/><stop offset="0.8" stop-color="#19e6ff"/><stop offset="1" stop-color="#00e2ff"/></linearGradient><linearGradient id="g112" gradientUnits="userSpaceOnUse" x1="1213.6" y1="180.6" x2="1136" y2="197.1"><stop offset="0" stop-color="#ffffff"/><stop offset="0.1" stop-color="#d7fcff"/><stop offset="0.2" stop-color="#b3faff"/><stop offset="0.35" stop-color="#83f6ff"/><stop offset="0.5" stop-color="#59f3ff"/><stop offset="0.65" stop-color="#36f0ff"/><stop offset="0.8" stop-color="#1aedff"/><stop offset="1" stop-color="#00eaff"/></linearGradient><linearGradient id="g113" gradientUnits="userSpaceOnUse" x1="1213.6" y1="180.6" x2="1135.5" y2="195.1"><stop offset="0" stop-color="#ffffff"/><stop offset="0.1" stop-color="#d8fdff"/><stop offset="0.2" stop-color="#b4fcff"/><stop offset="0.35" stop-color="#84faff"/><stop offset="0.5" stop-color="#5bf8ff"/><stop offset="0.65" stop-color="#37f6ff"/><stop offset="0.8" stop-color="#1af4ff"/><stop offset="1" stop-color="#00f2ff"/></linearGradient><linearGradient id="g114" gradientUnits="userSpaceOnUse" x1="1213.6" y1="180.6" x2="1135" y2="193"><stop offset="0" stop-color="#ffffff"/><stop offset="0.1" stop-color="#d8ffff"/><stop offset="0.2" stop-color="#b5feff"/><stop offset="0.35" stop-color="#85feff"/><stop offset="0.5" stop-color="#5cfdff"/><stop offset="0.65" stop-color="#38fcff"/><stop offset="0.8" stop-color="#1bfcff"/><stop offset="1" stop-color="#00fbff"/></linearGradient><linearGradient id="g115" gradientUnits="userSpaceOnUse" x1="1213.6" y1="180.6" x2="1134.5" y2="191"><stop offset="0" stop-color="#ffffff"/><stop offset="0.1" stop-color="#d8fffe"/><stop offset="0.2" stop-color="#b5fffe"/><stop offset="0.35" stop-color="#85fffd"/><stop offset="0.5" stop-color="#5cfffc"/><stop offset="0.65" stop-color="#39fffb"/><stop offset="0.8" stop-color="#1bfffa"/><stop offset="1" stop-color="#00fff9"/></linearGradient><linearGradient id="g116" gradientUnits="userSpaceOnUse" x1="1213.6" y1="180.6" x2="1134" y2="189"><stop offset="0" stop-color="#ffffff"/><stop offset="0.1" stop-color="#d8fffd"/><stop offset="0.2" stop-color="#b5fffb"/><stop offset="0.35" stop-color="#85fff9"/><stop offset="0.5" stop-color="#5bfff7"/><stop offset="0.65" stop-color="#38fff5"/><stop offset="0.8" stop-color="#1bfff3"/><stop offset="1" stop-color="#00fff0"/></linearGradient><linearGradient id="g117" gradientUnits="userSpaceOnUse" x1="1213.6" y1="180.6" x2="1133.5" y2="186.9"><stop offset="0" stop-color="#ffffff"/><stop offset="0.1" stop-color="#d8fffc"/><stop offset="0.2" stop-color="#b4fff9"/><stop offset="0.35" stop-color="#84fff5"/><stop offset="0.5" stop-color="#5bfff2"/><stop offset="0.65" stop-color="#38ffee"/><stop offset="0.8" stop-color="#1bffeb"/><stop offset="1" stop-color="#00ffe7"/></linearGradient><linearGradient id="g118" gradientUnits="userSpaceOnUse" x1="1213.6" y1="180.6" x2="1133" y2="184.8"><stop offset="0" stop-color="#ffffff"/><stop offset="0.1" stop-color="#d8fffb"/><stop offset="0.2" stop-color="#b4fff7"/><stop offset="0.35" stop-color="#84fff1"/><stop offset="0.5" stop-color="#5affec"/><stop offset="0.65" stop-color="#37ffe8"/><stop offset="0.8" stop-color="#1affe4"/><stop offset="1" stop-color="#00ffde"/></linearGradient><linearGradient id="g119" gradientUnits="userSpaceOnUse" x1="1213.6" y1="180.6" x2="1132.5" y2="182.7"><stop offset="0" stop-color="#ffffff"/><stop offset="0.1" stop-color="#d7fffa"/><stop offset="0.2" stop-color="#b3fff5"/><stop offset="0.35" stop-color="#83ffee"/><stop offset="0.5" stop-color="#5affe7"/><stop offset="0.65" stop-color="#37ffe2"/><stop offset="0.8" stop-color="#1affdc"/><stop offset="1" stop-color="#00ffd6"/></linearGradient><linearGradient id="g120" gradientUnits="userSpaceOnUse" x1="1213.6" y1="180.6" x2="1132" y2="180.6"><stop offset="0" stop-color="#ffffff"/><stop offset="0.1" stop-color="#d7fff9"/><stop offset="0.2" stop-color="#b3fff2"/><stop offset="0.35" stop-color="#83ffea"/><stop offset="0.5" stop-color="#59ffe2"/><stop offset="0.65" stop-color="#36ffdb"/><stop offset="0.8" stop-color="#1affd5"/><stop offset="1" stop-color="#00ffcd"/></linearGradient><linearGradient id="g121" gradientUnits="userSpaceOnUse" x1="1213.6" y1="180.6" x2="1131.5" y2="178.4"><stop offset="0" stop-color="#ffffff"/><stop offset="0.1" stop-color="#d7fff7"/><stop offset="0.2" stop-color="#b2fff0"/><stop offset="0.35" stop-color="#82ffe6"/><stop offset="0.5" stop-color="#59ffdd"/><stop offset="0.65" stop-color="#36ffd5"/><stop offset="0.8" stop-color="#1affce"/><stop offset="1" stop-color="#00ffc5"/></linearGradient><linearGradient id="g122" gradientUnits="userSpaceOnUse" x1="1213.6" y1="180.6" x2="1131" y2="176.3"><stop offset="0" stop-color="#ffffff"/><stop offset="0.1" stop-color="#d6fff6"/><stop offset="0.2" stop-color="#b2ffee"/><stop offset="0.35" stop-color="#81ffe3"/><stop offset="0.5" stop-color="#58ffd8"/><stop offset="0.65" stop-color="#36ffcf"/><stop offset="0.8" stop-color="#19ffc6"/><stop offset="1" stop-color="#00ffbc"/></linearGradient><linearGradient id="g123" gradientUnits="userSpaceOnUse" x1="1213.6" y1="180.6" x2="1130.5" y2="174.1"><stop offset="0" stop-color="#ffffff"/><stop offset="0.1" stop-color="#d6fff5"/><stop offset="0.2" stop-color="#b1ffec"/><stop offset="0.35" stop-color="#81ffdf"/><stop offset="0.5" stop-color="#58ffd3"/><stop offset="0.65" stop-color="#35ffc9"/><stop offset="0.8" stop-color="#19ffbf"/><stop offset="1" stop-color="#00ffb4"/></linearGradient><linearGradient id="g124" gradientUnits="userSpaceOnUse" x1="1213.6" y1="180.6" x2="1130" y2="171.8"><stop offset="0" stop-color="#ffffff"/><stop offset="0.1" stop-color="#d6fff4"/><stop offset="0.2" stop-color="#b1ffe9"/><stop offset="0.35" stop-color="#80ffdb"/><stop offset="0.5" stop-color="#57ffce"/><stop offset="0.65" stop-color="#35ffc3"/><stop offset="0.8" stop-color="#19ffb8"/><stop offset="1" stop-color="#00ffac"/></linearGradient><linearGradient id="g125" gradientUnits="userSpaceOnUse" x1="1213.6" y1="180.6" x2="1129.4" y2="169.5"><stop offset="0" stop-color="#ffffff"/><stop offset="0.1" stop-color="#d5fff2"/><stop offset="0.2" stop-color="#b0ffe7"/><stop offset="0.35" stop-color="#80ffd7"/><stop offset="0.5" stop-color="#56ffc9"/><stop offset="0.65" stop-color="#34ffbd"/><stop offset="0.8" stop-color="#19ffb1"/><stop offset="1" stop-color="#00ffa4"/></linearGradient><linearGradient id="g126" gradientUnits="userSpaceOnUse" x1="1213.6" y1="180.6" x2="1128.9" y2="167.2"><stop offset="0" stop-color="#ffffff"/><stop offset="0.1" stop-color="#d5fff1"/><stop offset="0.2" stop-color="#b0ffe4"/><stop offset="0.35" stop-color="#7fffd3"/><stop offset="0.5" stop-color="#56ffc4"/><stop offset="0.65" stop-color="#34ffb6"/><stop offset="0.8" stop-color="#18ffaa"/><stop offset="1" stop-color="#00ff9c"/></linearGradient><linearGradient id="g127" gradientUnits="userSpaceOnUse" x1="1213.6" y1="180.6" x2="1128.3" y2="164.8"><stop offset="0" stop-color="#ffffff"/><stop offset="0.1" stop-color="#d5fff0"/><stop offset="0.2" stop-color="#afffe2"/><stop offset="0.35" stop-color="#7effcf"/><stop offset="0.5" stop-color="#55ffbf"/><stop offset="0.65" stop-color="#33ffb0"/><stop offset="0.8" stop-color="#18ffa3"/><stop offset="1" stop-color="#00ff94"/></linearGradient><linearGradient id="g128" gradientUnits="userSpaceOnUse" x1="1213.6" y1="180.6" x2="1127.7" y2="162.3"><stop offset="0" stop-color="#ffffff"/><stop offset="0.1" stop-color="#d4ffef"/><stop offset="0.2" stop-color="#afffe0"/><stop offset="0.35" stop-color="#7effcb"/><stop offset="0.5" stop-color="#55ffba"/><stop offset="0.65" stop-color="#33ffaa"/><stop offset="0.8" stop-color="#18ff9c"/><stop offset="1" stop-color="#00ff8c"/></linearGradient><linearGradient id="g129" gradientUnits="userSpaceOnUse" x1="1213.6" y1="180.6" x2="1127.1" y2="159.8"><stop offset="0" stop-color="#ffffff"/><stop offset="0.1" stop-color="#d4ffed"/><stop offset="0.2" stop-color="#aeffdd"/><stop offset="0.35" stop-color="#7dffc7"/><stop offset="0.5" stop-color="#54ffb5"/><stop offset="0.65" stop-color="#33ffa4"/><stop offset="0.8" stop-color="#18ff95"/><stop offset="1" stop-color="#00ff84"/></linearGradient><linearGradient id="g130" gradientUnits="userSpaceOnUse" x1="1213.6" y1="180.6" x2="1126.5" y2="157.3"><stop offset="0" stop-color="#ffffff"/><stop offset="0.1" stop-color="#d4ffec"/><stop offset="0.2" stop-color="#aeffda"/><stop offset="0.35" stop-color="#7cffc3"/><stop offset="0.5" stop-color="#54ffaf"/><stop offset="0.65" stop-color="#32ff9e"/><stop offset="0.8" stop-color="#17ff8e"/><stop offset="1" stop-color="#00ff7c"/></linearGradient><linearGradient id="g131" gradientUnits="userSpaceOnUse" x1="1213.6" y1="180.6" x2="1125.9" y2="154.6"><stop offset="0" stop-color="#ffffff"/><stop offset="0.1" stop-color="#d3ffea"/><stop offset="0.2" stop-color="#adffd8"/><stop offset="0.35" stop-color="#7cffbf"/><stop offset="0.5" stop-color="#53ffaa"/><stop offset="0.65" stop-color="#32ff97"/><stop offset="0.8" stop-color="#17ff87"/><stop offset="1" stop-color="#00ff74"/></linearGradient><linearGradient id="g132" gradientUnits="userSpaceOnUse" x1="1213.6" y1="180.6" x2="1125.2" y2="151.9"><stop offset="0" stop-color="#ffffff"/><stop offset="0.1" stop-color="#d3ffe9"/><stop offset="0.2" stop-color="#acffd5"/><stop offset="0.35" stop-color="#7bffbb"/><stop offset="0.5" stop-color="#52ffa5"/><stop offset="0.65" stop-color="#31ff91"/><stop offset="0.8" stop-color="#17ff80"/><stop offset="1" stop-color="#00ff6c"/></linearGradient><linearGradient id="g133" gradientUnits="userSpaceOnUse" x1="1213.6" y1="180.6" x2="1124.6" y2="149.1"><stop offset="0" stop-color="#ffffff"/><stop offset="0.1" stop-color="#d3ffe7"/><stop offset="0.2" stop-color="#acffd2"/><stop offset="0.35" stop-color="#7affb7"/><stop offset="0.5" stop-color="#52ff9f"/><stop offset="0.65" stop-color="#31ff8b"/><stop offset="0.8" stop-color="#17ff79"/><stop offset="1" stop-color="#00ff64"/></linearGradient><linearGradient id="g134" gradientUnits="userSpaceOnUse" x1="1213.6" y1="180.6" x2="1123.9" y2="146.1"><stop offset="0" stop-color="#ffffff"/><stop offset="0.1" stop-color="#d2ffe6"/><stop offset="0.2" stop-color="#abffd0"/><stop offset="0.35" stop-color="#7affb2"/><stop offset="0.5" stop-color="#51ff9a"/><stop offset="0.65" stop-color="#30ff84"/><stop offset="0.8" stop-color="#16ff72"/><stop offset="1" stop-color="#00ff5d"/></linearGradient><linearGradient id="g135" gradientUnits="userSpaceOnUse" x1="1213.6" y1="180.6" x2="1123.1" y2="143.1"><stop offset="0" stop-color="#ffffff"/><stop offset="0.1" stop-color="#d2ffe4"/><stop offset="0.2" stop-color="#abffcd"/><stop offset="0.35" stop-color="#79ffae"/><stop offset="0.5" stop-color="#50ff94"/><stop offset="0.65" stop-color="#30ff7e"/><stop offset="0.8" stop-color="#16ff6b"/><stop offset="1" stop-color="#00ff55"/></linearGradient><linearGradient id="g136" gradientUnits="userSpaceOnUse" x1="1213.6" y1="180.6" x2="1122.4" y2="140"><stop offset="0" stop-color="#ffffff"/><stop offset="0.1" stop-color="#d1ffe3"/><stop offset="0.2" stop-color="#aaffca"/><stop offset="0.35" stop-color="#78ffaa"/><stop offset="0.5" stop-color="#50ff8e"/><stop offset="0.65" stop-color="#2fff77"/><stop offset="0.8" stop-color="#16ff63"/><stop offset="1" stop-color="#00ff4d"/></linearGradient><linearGradient id="g137" gradientUnits="userSpaceOnUse" x1="1213.6" y1="180.6" x2="1121.6" y2="136.7"><stop offset="0" stop-color="#ffffff"/><stop offset="0.1" stop-color="#d1ffe1"/><stop offset="0.2" stop-color="#a9ffc7"/><stop offset="0.35" stop-color="#77ffa5"/><stop offset="0.5" stop-color="#4fff88"/><stop offset="0.65" stop-color="#2fff70"/><stop offset="0.8" stop-color="#16ff5c"/><stop offset="1" stop-color="#00ff45"/></linearGradient><linearGradient id="g138" gradientUnits="userSpaceOnUse" x1="1213.6" y1="180.6" x2="1120.8" y2="133.3"><stop offset="0" stop-color="#ffffff"/><stop offset="0.1" stop-color="#d1ffdf"/><stop offset="0.2" stop-color="#a9ffc4"/><stop offset="0.35" stop-color="#77ffa0"/><stop offset="0.5" stop-color="#4eff83"/><stop offset="0.65" stop-color="#2eff6a"/><stop offset="0.8" stop-color="#15ff55"/><stop offset="1" stop-color="#00ff3e"/></linearGradient><linearGradient id="g139" gradientUnits="userSpaceOnUse" x1="1213.6" y1="180.6" x2="1120" y2="129.8"><stop offset="0" stop-color="#ffffff"/><stop offset="0.1" stop-color="#d0ffdd"/><stop offset="0.2" stop-color="#a8ffc0"/><stop offset="0.35" stop-color="#76ff9b"/><stop offset="0.5" stop-color="#4eff7c"/><stop offset="0.65" stop-color="#2eff63"/><stop offset="0.8" stop-color="#15ff4d"/><stop offset="1" stop-color="#00ff36"/></linearGradient><linearGradient id="g140" gradientUnits="userSpaceOnUse" x1="1213.6" y1="180.6" x2="1119.1" y2="126"><stop offset="0" stop-color="#ffffff"/><stop offset="0.1" stop-color="#d0ffdc"/><stop offset="0.2" stop-color="#a7ffbd"/><stop offset="0.35" stop-color="#75ff96"/><stop offset="0.5" stop-color="#4dff76"/><stop offset="0.65" stop-color="#2dff5c"/><stop offset="0.8" stop-color="#15ff46"/><stop offset="1" stop-color="#00ff2e"/></linearGradient><linearGradient id="g141" gradientUnits="userSpaceOnUse" x1="1213.6" y1="180.6" x2="1118.2" y2="122.1"><stop offset="0" stop-color="#ffffff"/><stop offset="0.1" stop-color="#cfffda"/><stop offset="0.2" stop-color="#a6ffb9"/><stop offset="0.35" stop-color="#74ff91"/><stop offset="0.5" stop-color="#4cff70"/><stop offset="0.65" stop-color="#2dff55"/><stop offset="0.8" stop-color="#15ff3f"/><stop offset="1" stop-color="#00ff27"/></linearGradient><linearGradient id="g142" gradientUnits="userSpaceOnUse" x1="1213.6" y1="180.6" x2="1117.2" y2="118"><stop offset="0" stop-color="#ffffff"/><stop offset="0.1" stop-color="#cfffd7"/><stop offset="0.2" stop-color="#a6ffb6"/><stop offset="0.35" stop-color="#73ff8b"/><stop offset="0.5" stop-color="#4bff69"/><stop offset="0.65" stop-color="#2cff4e"/><stop offset="0.8" stop-color="#14ff37"/><stop offset="1" stop-color="#00ff1f"/></linearGradient><linearGradient id="g143" gradientUnits="userSpaceOnUse" x1="1213.6" y1="180.6" x2="1116.1" y2="113.6"><stop offset="0" stop-color="#ffffff"/><stop offset="0.1" stop-color="#ceffd5"/><stop offset="0.2" stop-color="#a5ffb2"/><stop offset="0.35" stop-color="#72ff86"/><stop offset="0.5" stop-color="#4bff63"/><stop offset="0.65" stop-color="#2cff47"/><stop offset="0.8" stop-color="#14ff30"/><stop offset="1" stop-color="#00ff18"/></linearGradient><linearGradient id="g144" gradientUnits="userSpaceOnUse" x1="1213.6" y1="180.6" x2="1115" y2="109"><stop offset="0" stop-color="#ffffff"/><stop offset="0.1" stop-color="#cdffd3"/><stop offset="0.2" stop-color="#a4ffae"/><stop offset="0.35" stop-color="#71ff80"/><stop offset="0.5" stop-color="#4aff5c"/><stop offset="0.65" stop-color="#2bff3f"/><stop offset="0.8" stop-color="#14ff28"/><stop offset="1" stop-color="#00ff11"/></linearGradient><linearGradient id="g145" gradientUnits="userSpaceOnUse" x1="1213.6" y1="180.6" x2="1113.9" y2="104.1"><stop offset="0" stop-color="#ffffff"/><stop offset="0.1" stop-color="#cdffd1"/><stop offset="0.2" stop-color="#a3ffaa"/><stop offset="0.35" stop-color="#70ff7a"/><stop offset="0.5" stop-color="#49ff55"/><stop offset="0.65" stop-color="#2aff38"/><stop offset="0.8" stop-color="#13ff21"/><stop offset="1" stop-color="#00ff0a"/></linearGradient><linearGradient id="g146" gradientUnits="userSpaceOnUse" x1="1213.6" y1="180.6" x2="1112.6" y2="98.8"><stop offset="0" stop-color="#ffffff"/><stop offset="0.1" stop-color="#ccffce"/><stop offset="0.2" stop-color="#a2ffa5"/><stop offset="0.35" stop-color="#6fff74"/><stop offset="0.5" stop-color="#48ff4e"/><stop offset="0.65" stop-color="#2aff30"/><stop offset="0.8" stop-color="#13ff19"/><stop offset="1" stop-color="#00ff04"/></linearGradient><linearGradient id="g147" gradientUnits="userSpaceOnUse" x1="1213.6" y1="180.6" x2="1112.1" y2="93.9"><stop offset="0" stop-color="#ffffff"/><stop offset="0.1" stop-color="#ccffcc"/><stop offset="0.2" stop-color="#a1ffa1"/><stop offset="0.35" stop-color="#6fff6e"/><stop offset="0.5" stop-color="#48ff47"/><stop offset="0.65" stop-color="#2aff29"/><stop offset="0.8" stop-color="#13ff13"/><stop offset="1" stop-color="#00ff00"/></linearGradient><linearGradient id="g148" gradientUnits="userSpaceOnUse" x1="1213.6" y1="180.6" x2="1117.9" y2="94.5"><stop offset="0" stop-color="#ffffff"/><stop offset="0.1" stop-color="#ceffcc"/><stop offset="0.2" stop-color="#a6ffa2"/><stop offset="0.35" stop-color="#75ff6f"/><stop offset="0.5" stop-color="#4fff48"/><stop offset="0.65" stop-color="#31ff2a"/><stop offset="0.8" stop-color="#1bff13"/><stop offset="1" stop-color="#05ff00"/></linearGradient><linearGradient id="g149" gradientUnits="userSpaceOnUse" x1="1213.6" y1="180.6" x2="1123.4" y2="95"><stop offset="0" stop-color="#ffffff"/><stop offset="0.1" stop-color="#d1ffcd"/><stop offset="0.2" stop-color="#aaffa3"/><stop offset="0.35" stop-color="#7bff70"/><stop offset="0.5" stop-color="#56ff49"/><stop offset="0.65" stop-color="#39ff2a"/><stop offset="0.8" stop-color="#22ff13"/><stop offset="1" stop-color="#0bff00"/></linearGradient><linearGradient id="g150" gradientUnits="userSpaceOnUse" x1="1213.6" y1="180.6" x2="1128.5" y2="95.5"><stop offset="0" stop-color="#ffffff"/><stop offset="0.1" stop-color="#d3ffcd"/><stop offset="0.2" stop-color="#aeffa4"/><stop offset="0.35" stop-color="#81ff71"/><stop offset="0.5" stop-color="#5dff49"/><stop offset="0.65" stop-color="#40ff2b"/><stop offset="0.8" stop-color="#29ff14"/><stop offset="1" stop-color="#12ff00"/></linearGradient><linearGradient id="g151" gradientUnits="userSpaceOnUse" x1="1213.6" y1="180.6" x2="1133.3" y2="96"><stop offset="0" stop-color="#ffffff"/><stop offset="0.1" stop-color="#d5ffce"/><stop offset="0.2" stop-color="#b2ffa4"/><stop offset="0.35" stop-color="#86ff72"/><stop offset="0.5" stop-color="#63ff4a"/><stop offset="0.65" stop-color="#47ff2b"/><stop offset="0.8" stop-color="#30ff14"/><stop offset="1" stop-color="#19ff00"/></linearGradient><linearGradient id="g152" gradientUnits="userSpaceOnUse" x1="1213.6" y1="180.6" x2="1137.9" y2="96.5"><stop offset="0" stop-color="#ffffff"/><stop offset="0.1" stop-color="#d7ffce"/><stop offset="0.2" stop-color="#b5ffa5"/><stop offset="0.35" stop-color="#8bff73"/><stop offset="0.5" stop-color="#6aff4b"/><stop offset="0.65" stop-color="#4eff2c"/><stop offset="0.8" stop-color="#38ff14"/><stop offset="1" stop-color="#20ff00"/></linearGradient><linearGradient id="g153" gradientUnits="userSpaceOnUse" x1="1213.6" y1="180.6" x2="1142.1" y2="96.9"><stop offset="0" stop-color="#ffffff"/><stop offset="0.1" stop-color="#d9ffcf"/><stop offset="0.2" stop-color="#b9ffa6"/><stop offset="0.35" stop-color="#90ff73"/><stop offset="0.5" stop-color="#70ff4c"/><stop offset="0.65" stop-color="#55ff2c"/><stop offset="0.8" stop-color="#3fff14"/><stop offset="1" stop-color="#27ff00"/></linearGradient><linearGradient id="g154" gradientUnits="userSpaceOnUse" x1="1213.6" y1="180.6" x2="1146.2" y2="97.3"><stop offset="0" stop-color="#ffffff"/><stop offset="0.1" stop-color="#dbffcf"/><stop offset="0.2" stop-color="#bcffa6"/><stop offset="0.35" stop-color="#95ff74"/><stop offset="0.5" stop-color="#76ff4c"/><stop offset="0.65" stop-color="#5bff2d"/><stop offset="0.8" stop-color="#46ff15"/><stop offset="1" stop-color="#2eff00"/></linearGradient><linearGradient id="g155" gradientUnits="userSpaceOnUse" x1="1213.6" y1="180.6" x2="1150" y2="97.7"><stop offset="0" stop-color="#ffffff"/><stop offset="0.1" stop-color="#ddffd0"/><stop offset="0.2" stop-color="#bfffa7"/><stop offset="0.35" stop-color="#9aff75"/><stop offset="0.5" stop-color="#7bff4d"/><stop offset="0.65" stop-color="#62ff2d"/><stop offset="0.8" stop-color="#4dff15"/><stop offset="1" stop-color="#35ff00"/></linearGradient><linearGradient id="g156" gradientUnits="userSpaceOnUse" x1="1213.6" y1="180.6" x2="1153.6" y2="98.1"><stop offset="0" stop-color="#ffffff"/><stop offset="0.1" stop-color="#dfffd0"/><stop offset="0.2" stop-color="#c2ffa8"/><stop offset="0.35" stop-color="#9fff75"/><stop offset="0.5" stop-color="#81ff4d"/><stop offset="0.65" stop-color="#68ff2e"/><stop offset="0.8" stop-color="#53ff15"/><stop offset="1" stop-color="#3cff00"/></linearGradient><linearGradient id="g157" gradientUnits="userSpaceOnUse" x1="1213.6" y1="180.6" x2="1157.1" y2="98.4"><stop offset="0" stop-color="#ffffff"/><stop offset="0.1" stop-color="#e0ffd0"/><stop offset="0.2" stop-color="#c5ffa8"/><stop offset="0.35" stop-color="#a3ff76"/><stop offset="0.5" stop-color="#86ff4e"/><stop offset="0.65" stop-color="#6eff2e"/><stop offset="0.8" stop-color="#5aff15"/><stop offset="1" stop-color="#44ff00"/></linearGradient><linearGradient id="g158" gradientUnits="userSpaceOnUse" x1="1213.6" y1="180.6" x2="1160.5" y2="98.8"><stop offset="0" stop-color="#ffffff"/><stop offset="0.1" stop-color="#e2ffd1"/><stop offset="0.2" stop-color="#c8ffa9"/><stop offset="0.35" stop-color="#a7ff77"/><stop offset="0.5" stop-color="#8cff4e"/><stop offset="0.65" stop-color="#74ff2e"/><stop offset="0.8" stop-color="#61ff15"/><stop offset="1" stop-color="#4bff00"/></linearGradient><linearGradient id="g159" gradientUnits="userSpaceOnUse" x1="1213.6" y1="180.6" x2="1163.7" y2="99.1"><stop offset="0" stop-color="#ffffff"/><stop offset="0.1" stop-color="#e3ffd1"/><stop offset="0.2" stop-color="#cbffa9"/><stop offset="0.35" stop-color="#abff77"/><stop offset="0.5" stop-color="#91ff4f"/><stop offset="0.65" stop-color="#7aff2f"/><stop offset="0.8" stop-color="#67ff16"/><stop offset="1" stop-color="#52ff00"/></linearGradient><linearGradient id="g160" gradientUnits="userSpaceOnUse" x1="1213.6" y1="180.6" x2="1166.7" y2="99.4"><stop offset="0" stop-color="#ffffff"/><stop offset="0.1" stop-color="#e5ffd1"/><stop offset="0.2" stop-color="#cdffaa"/><stop offset="0.35" stop-color="#afff78"/><stop offset="0.5" stop-color="#96ff50"/><stop offset="0.65" stop-color="#80ff2f"/><stop offset="0.8" stop-color="#6eff16"/><stop offset="1" stop-color="#59ff00"/></linearGradient><linearGradient id="g161" gradientUnits="userSpaceOnUse" x1="1213.6" y1="180.6" x2="1169.7" y2="99.7"><stop offset="0" stop-color="#ffffff"/><stop offset="0.1" stop-color="#e6ffd2"/><stop offset="0.2" stop-color="#d0ffaa"/><stop offset="0.35" stop-color="#b3ff78"/><stop offset="0.5" stop-color="#9bff50"/><stop offset="0.65" stop-color="#86ff30"/><stop offset="0.8" stop-color="#74ff16"/><stop offset="1" stop-color="#60ff00"/></linearGradient><linearGradient id="g162" gradientUnits="userSpaceOnUse" x1="1213.6" y1="180.6" x2="1172.5" y2="100"><stop offset="0" stop-color="#ffffff"/><stop offset="0.1" stop-color="#e7ffd2"/><stop offset="0.2" stop-color="#d2ffab"/><stop offset="0.35" stop-color="#b7ff79"/><stop offset="0.5" stop-color="#a0ff51"/><stop offset="0.65" stop-color="#8cff30"/><stop offset="0.8" stop-color="#7aff16"/><stop offset="1" stop-color="#66ff00"/></linearGradient><linearGradient id="g163" gradientUnits="userSpaceOnUse" x1="1213.6" y1="180.6" x2="1175.3" y2="100.2"><stop offset="0" stop-color="#ffffff"/><stop offset="0.1" stop-color="#e9ffd2"/><stop offset="0.2" stop-color="#d5ffab"/><stop offset="0.35" stop-color="#bbff7a"/><stop offset="0.5" stop-color="#a5ff51"/><stop offset="0.65" stop-color="#91ff30"/><stop offset="0.8" stop-color="#81ff16"/><stop offset="1" stop-color="#6dff00"/></linearGradient><linearGradient id="g164" gradientUnits="userSpaceOnUse" x1="1213.6" y1="180.6" x2="1178" y2="100.5"><stop offset="0" stop-color="#ffffff"/><stop offset="0.1" stop-color="#eaffd3"/><stop offset="0.2" stop-color="#d7ffac"/><stop offset="0.35" stop-color="#bfff7a"/><stop offset="0.5" stop-color="#a9ff52"/><stop offset="0.65" stop-color="#97ff31"/><stop offset="0.8" stop-color="#87ff17"/><stop offset="1" stop-color="#74ff00"/></linearGradient><linearGradient id="g165" gradientUnits="userSpaceOnUse" x1="1213.6" y1="180.6" x2="1180.5" y2="100.8"><stop offset="0" stop-color="#ffffff"/><stop offset="0.1" stop-color="#ebffd3"/><stop offset="0.2" stop-color="#daffac"/><stop offset="0.35" stop-color="#c2ff7b"/><stop offset="0.5" stop-color="#aeff52"/><stop offset="0.65" stop-color="#9cff31"/><stop offset="0.8" stop-color="#8dff17"/><stop offset="1" stop-color="#7bff00"/></linearGradient><linearGradient id="g166" gradientUnits="userSpaceOnUse" x1="1213.6" y1="180.6" x2="1183.1" y2="101"><stop offset="0" stop-color="#ffffff"/><stop offset="0.1" stop-color="#ecffd3"/><stop offset="0.2" stop-color="#dcffac"/><stop offset="0.35" stop-color="#c6ff7b"/><stop offset="0.5" stop-color="#b2ff52"/><stop offset="0.65" stop-color="#a2ff31"/><stop offset="0.8" stop-color="#93ff17"/><stop offset="1" stop-color="#82ff00"/></linearGradient><linearGradient id="g167" gradientUnits="userSpaceOnUse" x1="1213.6" y1="180.6" x2="1185.5" y2="101.3"><stop offset="0" stop-color="#ffffff"/><stop offset="0.1" stop-color="#eeffd3"/><stop offset="0.2" stop-color="#deffad"/><stop offset="0.35" stop-color="#c9ff7c"/><stop offset="0.5" stop-color="#b7ff53"/><stop offset="0.65" stop-color="#a7ff32"/><stop offset="0.8" stop-color="#99ff17"/><stop offset="1" stop-color="#89ff00"/></linearGradient><linearGradient id="g168" gradientUnits="userSpaceOnUse" x1="1213.6" y1="180.6" x2="1187.9" y2="101.5"><stop offset="0" stop-color="#ffffff"/><stop offset="0.1" stop-color="#efffd4"/><stop offset="0.2" stop-color="#e0ffad"/><stop offset="0.35" stop-color="#cdff7c"/><stop offset="0.5" stop-color="#bbff53"/><stop offset="0.65" stop-color="#acff32"/><stop offset="0.8" stop-color="#9fff17"/><stop offset="1" stop-color="#90ff00"/></linearGradient><linearGradient id="g169" gradientUnits="userSpaceOnUse" x1="1213.6" y1="180.6" x2="1190.3" y2="101.8"><stop offset="0" stop-color="#ffffff"/><stop offset="0.1" stop-color="#f0ffd4"/><stop offset="0.2" stop-color="#e2ffae"/><stop offset="0.35" stop-color="#d0ff7d"/><stop offset="0.5" stop-color="#c0ff54"/><stop offset="0.65" stop-color="#b2ff32"/><stop offset="0.8" stop-color="#a5ff18"/><stop offset="1" stop-color="#96ff00"/></linearGradient><linearGradient id="g170" gradientUnits="userSpaceOnUse" x1="1213.6" y1="180.6" x2="1192.5" y2="102"><stop offset="0" stop-color="#ffffff"/><stop offset="0.1" stop-color="#f1ffd4"/><stop offset="0.2" stop-color="#e4ffae"/><stop offset="0.35" stop-color="#d3ff7d"/><stop offset="0.5" stop-color="#c4ff54"/><stop offset="0.65" stop-color="#b7ff33"/><stop offset="0.8" stop-color="#abff18"/><stop offset="1" stop-color="#9dff00"/></linearGradient><linearGradient id="g171" gradientUnits="userSpaceOnUse" x1="1213.6" y1="180.6" x2="1194.8" y2="102.2"><stop offset="0" stop-color="#ffffff"/><stop offset="0.1" stop-color="#f2ffd4"/><stop offset="0.2" stop-color="#e6ffae"/><stop offset="0.35" stop-color="#d7ff7d"/><stop offset="0.5" stop-color="#c9ff55"/><stop offset="0.65" stop-color="#bcff33"/><stop offset="0.8" stop-color="#b1ff18"/><stop offset="1" stop-color="#a4ff00"/></linearGradient><linearGradient id="g172" gradientUnits="userSpaceOnUse" x1="1213.6" y1="180.6" x2="1197" y2="102.4"><stop offset="0" stop-color="#ffffff"/><stop offset="0.1" stop-color="#f3ffd5"/><stop offset="0.2" stop-color="#e8ffaf"/><stop offset="0.35" stop-color="#daff7e"/><stop offset="0.5" stop-color="#cdff55"/><stop offset="0.65" stop-color="#c1ff33"/><stop offset="0.8" stop-color="#b7ff18"/><stop offset="1" stop-color="#abff00"/></linearGradient><linearGradient id="g173" gradientUnits="userSpaceOnUse" x1="1213.6" y1="180.6" x2="1199.2" y2="102.7"><stop offset="0" stop-color="#ffffff"/><stop offset="0.1" stop-color="#f4ffd5"/><stop offset="0.2" stop-color="#eaffaf"/><stop offset="0.35" stop-color="#ddff7e"/><stop offset="0.5" stop-color="#d1ff55"/><stop offset="0.65" stop-color="#c7ff34"/><stop offset="0.8" stop-color="#bdff18"/><stop offset="1" stop-color="#b2ff00"/></linearGradient><linearGradient id="g174" gradientUnits="userSpaceOnUse" x1="1213.6" y1="180.6" x2="1201.3" y2="102.9"><stop offset="0" stop-color="#ffffff"/><stop offset="0.1" stop-color="#f5ffd5"/><stop offset="0.2" stop-color="#ecffb0"/><stop offset="0.35" stop-color="#e0ff7f"/><stop offset="0.5" stop-color="#d6ff56"/><stop offset="0.65" stop-color="#ccff34"/><stop offset="0.8" stop-color="#c3ff18"/><stop offset="1" stop-color="#b9ff00"/></linearGradient><linearGradient id="g175" gradientUnits="userSpaceOnUse" x1="1213.6" y1="180.6" x2="1203.4" y2="103.1"><stop offset="0" stop-color="#ffffff"/><stop offset="0.1" stop-color="#f6ffd5"/><stop offset="0.2" stop-color="#eeffb0"/><stop offset="0.35" stop-color="#e4ff7f"/><stop offset="0.5" stop-color="#daff56"/><stop offset="0.65" stop-color="#d1ff34"/><stop offset="0.8" stop-color="#c9ff19"/><stop offset="1" stop-color="#c0ff00"/></linearGradient><linearGradient id="g176" gradientUnits="userSpaceOnUse" x1="1213.6" y1="180.6" x2="1205.5" y2="103.3"><stop offset="0" stop-color="#ffffff"/><stop offset="0.1" stop-color="#f7ffd6"/><stop offset="0.2" stop-color="#f0ffb0"/><stop offset="0.35" stop-color="#e7ff80"/><stop offset="0.5" stop-color="#deff57"/><stop offset="0.65" stop-color="#d6ff34"/><stop offset="0.8" stop-color="#cfff19"/><stop offset="1" stop-color="#c7ff00"/></linearGradient><linearGradient id="g177" gradientUnits="userSpaceOnUse" x1="1213.6" y1="180.6" x2="1207.5" y2="103.5"><stop offset="0" stop-color="#ffffff"/><stop offset="0.1" stop-color="#f8ffd6"/><stop offset="0.2" stop-color="#f2ffb1"/><stop offset="0.35" stop-color="#eaff80"/><stop offset="0.5" stop-color="#e2ff57"/><stop offset="0.65" stop-color="#dcff35"/><stop offset="0.8" stop-color="#d5ff19"/><stop offset="1" stop-color="#ceff00"/></linearGradient><linearGradient id="g178" gradientUnits="userSpaceOnUse" x1="1213.6" y1="180.6" x2="1209.6" y2="103.7"><stop offset="0" stop-color="#ffffff"/><stop offset="0.1" stop-color="#f9ffd6"/><stop offset="0.2" stop-color="#f4ffb1"/><stop offset="0.35" stop-color="#edff81"/><stop offset="0.5" stop-color="#e7ff57"/><stop offset="0.65" stop-color="#e1ff35"/><stop offset="0.8" stop-color="#dcff19"/><stop offset="1" stop-color="#d5ff00"/></linearGradient><linearGradient id="g179" gradientUnits="userSpaceOnUse" x1="1213.6" y1="180.6" x2="1211.6" y2="103.9"><stop offset="0" stop-color="#ffffff"/><stop offset="0.1" stop-color="#faffd6"/><stop offset="0.2" stop-color="#f6ffb1"/><stop offset="0.35" stop-color="#f0ff81"/><stop offset="0.5" stop-color="#ebff58"/><stop offset="0.65" stop-color="#e6ff35"/><stop offset="0.8" stop-color="#e2ff19"/><stop offset="1" stop-color="#dcff00"/></linearGradient><linearGradient id="g180" gradientUnits="userSpaceOnUse" x1="1213.6" y1="180.6" x2="1213.6" y2="104.1"><stop offset="0" stop-color="#ffffff"/><stop offset="0.1" stop-color="#fbffd6"/><stop offset="0.2" stop-color="#f8ffb2"/><stop offset="0.35" stop-color="#f4ff82"/><stop offset="0.5" stop-color="#efff58"/><stop offset="0.65" stop-color="#ecff36"/><stop offset="0.8" stop-color="#e8ff19"/><stop offset="1" stop-color="#e4ff00"/></linearGradient><linearGradient id="g181" gradientUnits="userSpaceOnUse" x1="1213.6" y1="180.6" x2="1215.6" y2="104.3"><stop offset="0" stop-color="#ffffff"/><stop offset="0.1" stop-color="#fcffd7"/><stop offset="0.2" stop-color="#faffb2"/><stop offset="0.35" stop-color="#f7ff82"/><stop offset="0.5" stop-color="#f4ff59"/><stop offset="0.65" stop-color="#f1ff36"/><stop offset="0.8" stop-color="#eeff1a"/><stop offset="1" stop-color="#ebff00"/></linearGradient><linearGradient id="g182" gradientUnits="userSpaceOnUse" x1="1213.6" y1="180.6" x2="1217.6" y2="104.5"><stop offset="0" stop-color="#ffffff"/><stop offset="0.1" stop-color="#fdffd7"/><stop offset="0.2" stop-color="#fcffb3"/><stop offset="0.35" stop-color="#faff82"/><stop offset="0.5" stop-color="#f8ff59"/><stop offset="0.65" stop-color="#f6ff36"/><stop offset="0.8" stop-color="#f5ff1a"/><stop offset="1" stop-color="#f3ff00"/></linearGradient><linearGradient id="g183" gradientUnits="userSpaceOnUse" x1="1213.6" y1="180.6" x2="1219.6" y2="104.7"><stop offset="0" stop-color="#ffffff"/><stop offset="0.1" stop-color="#feffd7"/><stop offset="0.2" stop-color="#feffb3"/><stop offset="0.35" stop-color="#fdff83"/><stop offset="0.5" stop-color="#fcff5a"/><stop offset="0.65" stop-color="#fcff37"/><stop offset="0.8" stop-color="#fbff1a"/><stop offset="1" stop-color="#fbff00"/></linearGradient><linearGradient id="g184" gradientUnits="userSpaceOnUse" x1="1213.6" y1="180.6" x2="1221.6" y2="104.9"><stop offset="0" stop-color="#ffffff"/><stop offset="0.1" stop-color="#ffffd7"/><stop offset="0.2" stop-color="#fffeb3"/><stop offset="0.35" stop-color="#fffe83"/><stop offset="0.5" stop-color="#fffd59"/><stop offset="0.65" stop-color="#fffd36"/><stop offset="0.8" stop-color="#fffc1a"/><stop offset="1" stop-color="#fffc00"/></linearGradient><linearGradient id="g185" gradientUnits="userSpaceOnUse" x1="1213.6" y1="180.6" x2="1223.5" y2="105.1"><stop offset="0" stop-color="#ffffff"/><stop offset="0.1" stop-color="#fffed6"/><stop offset="0.2" stop-color="#fffcb2"/><stop offset="0.35" stop-color="#fffa81"/><stop offset="0.5" stop-color="#fff958"/><stop offset="0.65" stop-color="#fff736"/><stop offset="0.8" stop-color="#fff619"/><stop offset="1" stop-color="#fff400"/></linearGradient><linearGradient id="g186" gradientUnits="userSpaceOnUse" x1="1213.6" y1="180.6" x2="1225.5" y2="105.3"><stop offset="0" stop-color="#ffffff"/><stop offset="0.1" stop-color="#fffdd6"/><stop offset="0.2" stop-color="#fffab1"/><stop offset="0.35" stop-color="#fff780"/><stop offset="0.5" stop-color="#fff457"/><stop offset="0.65" stop-color="#fff235"/><stop offset="0.8" stop-color="#fff019"/><stop offset="1" stop-color="#ffed00"/></linearGradient><linearGradient id="g187" gradientUnits="userSpaceOnUse" x1="1213.6" y1="180.6" x2="1227.5" y2="105.5"><stop offset="0" stop-color="#ffffff"/><stop offset="0.1" stop-color="#fffcd5"/><stop offset="0.2" stop-color="#fff8b0"/><stop offset="0.35" stop-color="#fff47f"/><stop offset="0.5" stop-color="#fff056"/><stop offset="0.65" stop-color="#ffed34"/><stop offset="0.8" stop-color="#ffea18"/><stop offset="1" stop-color="#ffe600"/></linearGradient><linearGradient id="g188" gradientUnits="userSpaceOnUse" x1="1213.6" y1="180.6" x2="1229.5" y2="105.7"><stop offset="0" stop-color="#ffffff"/><stop offset="0.1" stop-color="#fffbd5"/><stop offset="0.2" stop-color="#fff7af"/><stop offset="0.35" stop-color="#fff17e"/><stop offset="0.5" stop-color="#ffec55"/><stop offset="0.65" stop-color="#ffe833"/><stop offset="0.8" stop-color="#ffe418"/><stop offset="1" stop-color="#ffdf00"/></linearGradient><linearGradient id="g189" gradientUnits="userSpaceOnUse" x1="1213.6" y1="180.6" x2="1231.5" y2="105.9"><stop offset="0" stop-color="#ffffff"/><stop offset="0.1" stop-color="#fffad4"/><stop offset="0.2" stop-color="#fff5ae"/><stop offset="0.35" stop-color="#ffee7d"/><stop offset="0.5" stop-color="#ffe854"/><stop offset="0.65" stop-color="#ffe332"/><stop offset="0.8" stop-color="#ffde18"/><stop offset="1" stop-color="#ffd800"/></linearGradient><linearGradient id="g190" gradientUnits="userSpaceOnUse" x1="1213.6" y1="180.6" x2="1233.6" y2="106.1"><stop offset="0" stop-color="#ffffff"/><stop offset="0.1" stop-color="#fff9d3"/><stop offset="0.2" stop-color="#fff3ad"/><stop offset="0.35" stop-color="#ffeb7c"/><stop offset="0.5" stop-color="#ffe453"/><stop offset="0.65" stop-color="#ffde32"/><stop offset="0.8" stop-color="#ffd917"/><stop offset="1" stop-color="#ffd200"/></linearGradient><linearGradient id="g191" gradientUnits="userSpaceOnUse" x1="1213.6" y1="180.6" x2="1235.6" y2="106.3"><stop offset="0" stop-color="#ffffff"/><stop offset="0.1" stop-color="#fff8d3"/><stop offset="0.2" stop-color="#fff1ac"/><stop offset="0.35" stop-color="#ffe87a"/><stop offset="0.5" stop-color="#ffe052"/><stop offset="0.65" stop-color="#ffd931"/><stop offset="0.8" stop-color="#ffd317"/><stop offset="1" stop-color="#ffcc00"/></linearGradient><linearGradient id="g192" gradientUnits="userSpaceOnUse" x1="1213.6" y1="180.6" x2="1237.7" y2="106.6"><stop offset="0" stop-color="#ffffff"/><stop offset="0.1" stop-color="#fff7d2"/><stop offset="0.2" stop-color="#ffefab"/><stop offset="0.35" stop-color="#ffe579"/><stop offset="0.5" stop-color="#ffdc51"/><stop offset="0.65" stop-color="#ffd530"/><stop offset="0.8" stop-color="#ffce16"/><stop offset="1" stop-color="#ffc600"/></linearGradient><linearGradient id="g193" gradientUnits="userSpaceOnUse" x1="1213.6" y1="180.6" x2="1239.8" y2="106.8"><stop offset="0" stop-color="#ffffff"/><stop offset="0.1" stop-color="#fff6d1"/><stop offset="0.2" stop-color="#ffedaa"/><stop offset="0.35" stop-color="#ffe278"/><stop offset="0.5" stop-color="#ffd950"/><stop offset="0.65" stop-color="#ffd02f"/><stop offset="0.8" stop-color="#ffc916"/><stop offset="1" stop-color="#ffc000"/></linearGradient><linearGradient id="g194" gradientUnits="userSpaceOnUse" x1="1213.6" y1="180.6" x2="1241.9" y2="107"><stop offset="0" stop-color="#ffffff"/><stop offset="0.1" stop-color="#fff5d1"/><stop offset="0.2" stop-color="#ffeba9"/><stop offset="0.35" stop-color="#ffdf77"/><stop offset="0.5" stop-color="#ffd54f"/><stop offset="0.65" stop-color="#ffcc2f"/><stop offset="0.8" stop-color="#ffc416"/><stop offset="1" stop-color="#ffbb00"/></linearGradient><linearGradient id="g195" gradientUnits="userSpaceOnUse" x1="1213.6" y1="180.6" x2="1244" y2="107.2"><stop offset="0" stop-color="#ffffff"/><stop offset="0.1" stop-color="#fff4d0"/><stop offset="0.2" stop-color="#ffe9a8"/><stop offset="0.35" stop-color="#ffdc76"/><stop offset="0.5" stop-color="#ffd14e"/><stop offset="0.65" stop-color="#ffc72e"/><stop offset="0.8" stop-color="#ffbf15"/><stop offset="1" stop-color="#ffb500"/></linearGradient><linearGradient id="g196" gradientUnits="userSpaceOnUse" x1="1213.6" y1="180.6" x2="1246.2" y2="107.4"><stop offset="0" stop-color="#ffffff"/><stop offset="0.1" stop-color="#fff3d0"/><stop offset="0.2" stop-color="#ffe8a7"/><stop offset="0.35" stop-color="#ffd975"/><stop offset="0.5" stop-color="#ffcd4d"/><stop offset="0.65" stop-color="#ffc32d"/><stop offset="0.8" stop-color="#ffba15"/><stop offset="1" stop-color="#ffb000"/></linearGradient><linearGradient id="g197" gradientUnits="userSpaceOnUse" x1="1213.6" y1="180.6" x2="1248.4" y2="107.6"><stop offset="0" stop-color="#ffffff"/><stop offset="0.1" stop-color="#fff2cf"/><stop offset="0.2" stop-color="#ffe6a6"/><stop offset="0.35" stop-color="#ffd674"/><stop offset="0.5" stop-color="#ffca4c"/><stop offset="0.65" stop-color="#ffbf2d"/><stop offset="0.8" stop-color="#ffb514"/><stop offset="1" stop-color="#ffaa00"/></linearGradient><linearGradient id="g198" gradientUnits="userSpaceOnUse" x1="1213.6" y1="180.6" x2="1250.7" y2="107.9"><stop offset="0" stop-color="#ffffff"/><stop offset="0.1" stop-color="#fff0ce"/><stop offset="0.2" stop-color="#ffe4a5"/><stop offset="0.35" stop-color="#ffd473"/><stop offset="0.5" stop-color="#ffc64b"/><stop offset="0.65" stop-color="#ffba2c"/><stop offset="0.8" stop-color="#ffb014"/><stop offset="1" stop-color="#ffa500"/></linearGradient><linearGradient id="g199" gradientUnits="userSpaceOnUse" x1="1213.6" y1="180.6" x2="1253" y2="108.1"><stop offset="0" stop-color="#ffffff"/><stop offset="0.1" stop-color="#ffefce"/><stop offset="0.2" stop-color="#ffe2a4"/><stop offset="0.35" stop-color="#ffd172"/><stop offset="0.5" stop-color="#ffc24a"/><stop offset="0.65" stop-color="#ffb62b"/><stop offset="0.8" stop-color="#ffac14"/><stop offset="1" stop-color="#ffa000"/></linearGradient><linearGradient id="g200" gradientUnits="userSpaceOnUse" x1="1213.6" y1="180.6" x2="1255.3" y2="108.3"><stop offset="0" stop-color="#ffffff"/><stop offset="0.1" stop-color="#ffeecd"/><stop offset="0.2" stop-color="#ffe0a3"/><stop offset="0.35" stop-color="#ffce70"/><stop offset="0.5" stop-color="#ffbf49"/><stop offset="0.65" stop-color="#ffb22b"/><stop offset="0.8" stop-color="#ffa713"/><stop offset="1" stop-color="#ff9b00"/></linearGradient><linearGradient id="g201" gradientUnits="userSpaceOnUse" x1="1213.6" y1="180.6" x2="1257.7" y2="108.6"><stop offset="0" stop-color="#ffffff"/><stop offset="0.1" stop-color="#ffedcc"/><stop offset="0.2" stop-color="#ffdea2"/><stop offset="0.35" stop-color="#ffcb6f"/><stop offset="0.5" stop-color="#ffbb48"/><stop offset="0.65" stop-color="#ffae2a"/><stop offset="0.8" stop-color="#ffa313"/><stop offset="1" stop-color="#ff9600"/></linearGradient><linearGradient id="g202" gradientUnits="userSpaceOnUse" x1="1213.6" y1="180.6" x2="1260.2" y2="108.8"><stop offset="0" stop-color="#ffffff"/><stop offset="0.1" stop-color="#ffeccc"/><stop offset="0.2" stop-color="#ffdca1"/><stop offset="0.35" stop-color="#ffc86e"/><stop offset="0.5" stop-color="#ffb747"/><stop offset="0.65" stop-color="#ffaa29"/><stop offset="0.8" stop-color="#ff9e13"/><stop offset="1" stop-color="#ff9100"/></linearGradient><linearGradient id="g203" gradientUnits="userSpaceOnUse" x1="1213.6" y1="180.6" x2="1262.8" y2="109.1"><stop offset="0" stop-color="#ffffff"/><stop offset="0.1" stop-color="#ffebcb"/><stop offset="0.2" stop-color="#ffdaa0"/><stop offset="0.35" stop-color="#ffc56d"/><stop offset="0.5" stop-color="#ffb446"/><stop offset="0.65" stop-color="#ffa629"/><stop offset="0.8" stop-color="#ff9a12"/><stop offset="1" stop-color="#ff8d00"/></linearGradient><linearGradient id="g204" gradientUnits="userSpaceOnUse" x1="1213.6" y1="180.6" x2="1265.4" y2="109.4"><stop offset="0" stop-color="#ffffff"/><stop offset="0.1" stop-color="#ffeaca"/><stop offset="0.2" stop-color="#ffd89f"/><stop offset="0.35" stop-color="#ffc26c"/><stop offset="0.5" stop-color="#ffb045"/><stop offset="0.65" stop-color="#ffa228"/><stop offset="0.8" stop-color="#ff9512"/><stop offset="1" stop-color="#ff8800"/></linearGradient><linearGradient id="g205" gradientUnits="userSpaceOnUse" x1="1213.6" y1="180.6" x2="1268.1" y2="109.6"><stop offset="0" stop-color="#ffffff"/><stop offset="0.1" stop-color="#ffe9c9"/><stop offset="0.2" stop-color="#ffd69e"/><stop offset="0.35" stop-color="#ffbf6b"/><stop offset="0.5" stop-color="#ffac44"/><stop offset="0.65" stop-color="#ff9d27"/><stop offset="0.8" stop-color="#ff9112"/><stop offset="1" stop-color="#ff8300"/></linearGradient><linearGradient id="g206" gradientUnits="userSpaceOnUse" x1="1213.6" y1="180.6" x2="1270.8" y2="109.9"><stop offset="0" stop-color="#ffffff"/><stop offset="0.1" stop-color="#ffe7c9"/><stop offset="0.2" stop-color="#ffd49d"/><stop offset="0.35" stop-color="#ffbc6a"/><stop offset="0.5" stop-color="#ffa943"/><stop offset="0.65" stop-color="#ff9927"/><stop offset="0.8" stop-color="#ff8d11"/><stop offset="1" stop-color="#ff7f00"/></linearGradient><linearGradient id="g207" gradientUnits="userSpaceOnUse" x1="1213.6" y1="180.6" x2="1273.7" y2="110.2"><stop offset="0" stop-color="#ffffff"/><stop offset="0.1" stop-color="#ffe6c8"/><stop offset="0.2" stop-color="#ffd19c"/><stop offset="0.35" stop-color="#ffb968"/><stop offset="0.5" stop-color="#ffa542"/><stop offset="0.65" stop-color="#ff9526"/><stop offset="0.8" stop-color="#ff8811"/><stop offset="1" stop-color="#ff7a00"/></linearGradient><linearGradient id="g208" gradientUnits="userSpaceOnUse" x1="1213.6" y1="180.6" x2="1276.7" y2="110.5"><stop offset="0" stop-color="#ffffff"/><stop offset="0.1" stop-color="#ffe5c7"/><stop offset="0.2" stop-color="#ffcf9a"/><stop offset="0.35" stop-color="#ffb567"/><stop offset="0.5" stop-color="#ffa141"/><stop offset="0.65" stop-color="#ff9125"/><stop offset="0.8" stop-color="#ff8411"/><stop offset="1" stop-color="#ff7500"/></linearGradient><linearGradient id="g209" gradientUnits="userSpaceOnUse" x1="1213.6" y1="180.6" x2="1279.8" y2="110.8"><stop offset="0" stop-color="#ffffff"/><stop offset="0.1" stop-color="#ffe3c6"/><stop offset="0.2" stop-color="#ffcd99"/><stop offset="0.35" stop-color="#ffb266"/><stop offset="0.5" stop-color="#ff9e40"/><stop offset="0.65" stop-color="#ff8d25"/><stop offset="0.8" stop-color="#ff7f10"/><stop offset="1" stop-color="#ff7100"/></linearGradient><linearGradient id="g210" gradientUnits="userSpaceOnUse" x1="1213.6" y1="180.6" x2="1283.1" y2="111.1"><stop offset="0" stop-color="#ffffff"/><stop offset="0.1" stop-color="#ffe2c5"/><stop offset="0.2" stop-color="#ffcb98"/><stop offset="0.35" stop-color="#ffaf65"/><stop offset="0.5" stop-color="#ff9a3f"/><stop offset="0.65" stop-color="#ff8924"/><stop offset="0.8" stop-color="#ff7b10"/><stop offset="1" stop-color="#ff6c00"/></linearGradient><linearGradient id="g211" gradientUnits="userSpaceOnUse" x1="1213.6" y1="180.6" x2="1286.4" y2="111.5"><stop offset="0" stop-color="#ffffff"/><stop offset="0.1" stop-color="#ffe1c4"/><stop offset="0.2" stop-color="#ffc897"/><stop offset="0.35" stop-color="#ffac63"/><stop offset="0.5" stop-color="#ff963e"/><stop offset="0.65" stop-color="#ff8523"/><stop offset="0.8" stop-color="#ff7710"/><stop offset="1" stop-color="#ff6800"/></linearGradient><linearGradient id="g212" gradientUnits="userSpaceOnUse" x1="1213.6" y1="180.6" x2="1290" y2="111.8"><stop offset="0" stop-color="#ffffff"/><stop offset="0.1" stop-color="#ffdfc3"/><stop offset="0.2" stop-color="#ffc695"/><stop offset="0.35" stop-color="#ffa862"/><stop offset="0.5" stop-color="#ff923d"/><stop offset="0.65" stop-color="#ff8022"/><stop offset="0.8" stop-color="#ff720f"/><stop offset="1" stop-color="#ff6400"/></linearGradient><linearGradient id="g213" gradientUnits="userSpaceOnUse" x1="1213.6" y1="180.6" x2="1293.7" y2="112.2"><stop offset="0" stop-color="#ffffff"/><stop offset="0.1" stop-color="#ffdec2"/><stop offset="0.2" stop-color="#ffc394"/><stop offset="0.35" stop-color="#ffa561"/><stop offset="0.5" stop-color="#ff8e3c"/><stop offset="0.65" stop-color="#ff7c22"/><stop offset="0.8" stop-color="#ff6e0f"/><stop offset="1" stop-color="#ff5f00"/></linearGradient><linearGradient id="g214" gradientUnits="userSpaceOnUse" x1="1213.6" y1="180.6" x2="1297.6" y2="112.6"><stop offset="0" stop-color="#ffffff"/><stop offset="0.1" stop-color="#ffdcc1"/><stop offset="0.2" stop-color="#ffc193"/><stop offset="0.35" stop-color="#ffa15f"/><stop offset="0.5" stop-color="#ff8a3b"/><stop offset="0.65" stop-color="#ff7821"/><stop offset="0.8" stop-color="#ff6a0f"/><stop offset="1" stop-color="#ff5b00"/></linearGradient><linearGradient id="g215" gradientUnits="userSpaceOnUse" x1="1213.6" y1="180.6" x2="1301.7" y2="113"><stop offset="0" stop-color="#ffffff"/><stop offset="0.1" stop-color="#ffdac0"/><stop offset="0.2" stop-color="#ffbe91"/><stop offset="0.35" stop-color="#ff9e5e"/><stop offset="0.5" stop-color="#ff863a"/><stop offset="0.65" stop-color="#ff7420"/><stop offset="0.8" stop-color="#ff650e"/><stop offset="1" stop-color="#ff5600"/></linearGradient><linearGradient id="g216" gradientUnits="userSpaceOnUse" x1="1213.6" y1="180.6" x2="1306" y2="113.5"><stop offset="0" stop-color="#ffffff"/><stop offset="0.1" stop-color="#ffd8bf"/><stop offset="0.2" stop-color="#ffbb90"/><stop offset="0.35" stop-color="#ff9a5c"/><stop offset="0.5" stop-color="#ff8239"/><stop offset="0.65" stop-color="#ff6f20"/><stop offset="0.8" stop-color="#ff610e"/><stop offset="1" stop-color="#ff5200"/></linearGradient><linearGradient id="g217" gradientUnits="userSpaceOnUse" x1="1213.6" y1="180.6" x2="1310.6" y2="113.9"><stop offset="0" stop-color="#ffffff"/><stop offset="0.1" stop-color="#ffd7be"/><stop offset="0.2" stop-color="#ffb88e"/><stop offset="0.35" stop-color="#ff965b"/><stop offset="0.5" stop-color="#ff7d38"/><stop offset="0.65" stop-color="#ff6b1f"/><stop offset="0.8" stop-color="#ff5c0e"/><stop offset="1" stop-color="#ff4d00"/></linearGradient><linearGradient id="g218" gradientUnits="userSpaceOnUse" x1="1213.6" y1="180.6" x2="1315.5" y2="114.4"><stop offset="0" stop-color="#ffffff"/><stop offset="0.1" stop-color="#ffd5bd"/><stop offset="0.2" stop-color="#ffb58d"/><stop offset="0.35" stop-color="#ff9259"/><stop offset="0.5" stop-color="#ff7936"/><stop offset="0.65" stop-color="#ff661e"/><stop offset="0.8" stop-color="#ff580d"/><stop offset="1" stop-color="#ff4900"/></linearGradient><linearGradient id="g219" gradientUnits="userSpaceOnUse" x1="1213.6" y1="180.6" x2="1320.7" y2="114.9"><stop offset="0" stop-color="#ffffff"/><stop offset="0.1" stop-color="#ffd3bc"/><stop offset="0.2" stop-color="#ffb28b"/><stop offset="0.35" stop-color="#ff8e58"/><stop offset="0.5" stop-color="#ff7535"/><stop offset="0.65" stop-color="#ff621d"/><stop offset="0.8" stop-color="#ff530d"/><stop offset="1" stop-color="#ff4400"/></linearGradient><linearGradient id="g220" gradientUnits="userSpaceOnUse" x1="1213.6" y1="180.6" x2="1326.3" y2="115.5"><stop offset="0" stop-color="#ffffff"/><stop offset="0.1" stop-color="#ffd0ba"/><stop offset="0.2" stop-color="#ffae89"/><stop offset="0.35" stop-color="#ff8a56"/><stop offset="0.5" stop-color="#ff7034"/><stop offset="0.65" stop-color="#ff5d1d"/><stop offset="0.8" stop-color="#ff4e0c"/><stop offset="1" stop-color="#ff4000"/></linearGradient><linearGradient id="g221" gradientUnits="userSpaceOnUse" x1="1213.6" y1="180.6" x2="1332.4" y2="116.1"><stop offset="0" stop-color="#ffffff"/><stop offset="0.1" stop-color="#ffceb9"/><stop offset="0.2" stop-color="#ffab87"/><stop offset="0.35" stop-color="#ff8554"/><stop offset="0.5" stop-color="#ff6b33"/><stop offset="0.65" stop-color="#ff581c"/><stop offset="0.8" stop-color="#ff4a0c"/><stop offset="1" stop-color="#ff3b00"/></linearGradient><linearGradient id="g222" gradientUnits="userSpaceOnUse" x1="1213.6" y1="180.6" x2="1338.9" y2="116.8"><stop offset="0" stop-color="#ffffff"/><stop offset="0.1" stop-color="#ffccb7"/><stop offset="0.2" stop-color="#ffa785"/><stop offset="0.35" stop-color="#ff8153"/><stop offset="0.5" stop-color="#ff6631"/><stop offset="0.65" stop-color="#ff531b"/><stop offset="0.8" stop-color="#ff450c"/><stop offset="1" stop-color="#ff3700"/></linearGradient><linearGradient id="g223" gradientUnits="userSpaceOnUse" x1="1213.6" y1="180.6" x2="1345.9" y2="117.5"><stop offset="0" stop-color="#ffffff"/><stop offset="0.1" stop-color="#ffc9b6"/><stop offset="0.2" stop-color="#ffa383"/><stop offset="0.35" stop-color="#ff7c51"/><stop offset="0.5" stop-color="#ff6130"/><stop offset="0.65" stop-color="#ff4e1a"/><stop offset="0.8" stop-color="#ff400b"/><stop offset="1" stop-color="#ff3200"/></linearGradient><linearGradient id="g224" gradientUnits="userSpaceOnUse" x1="1213.6" y1="180.6" x2="1353.6" y2="118.3"><stop offset="0" stop-color="#ffffff"/><stop offset="0.1" stop-color="#ffc6b4"/><stop offset="0.2" stop-color="#ff9f81"/><stop offset="0.35" stop-color="#ff774f"/><stop offset="0.5" stop-color="#ff5c2f"/><stop offset="0.65" stop-color="#ff4919"/><stop offset="0.8" stop-color="#ff3b0b"/><stop offset="1" stop-color="#ff2d00"/></linearGradient><linearGradient id="g225" gradientUnits="userSpaceOnUse" x1="1213.6" y1="180.6" x2="1362" y2="119.1"><stop offset="0" stop-color="#ffffff"/><stop offset="0.1" stop-color="#ffc3b2"/><stop offset="0.2" stop-color="#ff9b7f"/><stop offset="0.35" stop-color="#ff724d"/><stop offset="0.5" stop-color="#ff572d"/><stop offset="0.65" stop-color="#ff4418"/><stop offset="0.8" stop-color="#ff360a"/><stop offset="1" stop-color="#ff2900"/></linearGradient><linearGradient id="g226" gradientUnits="userSpaceOnUse" x1="1213.6" y1="180.6" x2="1371.3" y2="120.1"><stop offset="0" stop-color="#ffffff"/><stop offset="0.1" stop-color="#ffc0b0"/><stop offset="0.2" stop-color="#ff967c"/><stop offset="0.35" stop-color="#ff6d4b"/><stop offset="0.5" stop-color="#ff522c"/><stop offset="0.65" stop-color="#ff3f17"/><stop offset="0.8" stop-color="#ff310a"/><stop offset="1" stop-color="#ff2400"/></linearGradient><linearGradient id="g227" gradientUnits="userSpaceOnUse" x1="1213.6" y1="180.6" x2="1381.6" y2="121.1"><stop offset="0" stop-color="#ffffff"/><stop offset="0.1" stop-color="#ffbdae"/><stop offset="0.2" stop-color="#ff917a"/><stop offset="0.35" stop-color="#ff6748"/><stop offset="0.5" stop-color="#ff4c2a"/><stop offset="0.65" stop-color="#ff3a16"/><stop offset="0.8" stop-color="#ff2c0a"/><stop offset="1" stop-color="#ff2000"/></linearGradient><linearGradient id="g228" gradientUnits="userSpaceOnUse" x1="1213.6" y1="180.6" x2="1393.1" y2="122.3"><stop offset="0" stop-color="#ffffff"/><stop offset="0.1" stop-color="#ffb9ab"/><stop offset="0.2" stop-color="#ff8c77"/><stop offset="0.35" stop-color="#ff6146"/><stop offset="0.5" stop-color="#ff4628"/><stop offset="0.65" stop-color="#ff3415"/><stop offset="0.8" stop-color="#ff2709"/><stop offset="1" stop-color="#ff1b00"/></linearGradient><linearGradient id="g229" gradientUnits="userSpaceOnUse" x1="1213.6" y1="180.6" x2="1406.1" y2="123.6"><stop offset="0" stop-color="#ffffff"/><stop offset="0.1" stop-color="#ffb5a9"/><stop offset="0.2" stop-color="#ff8674"/><stop offset="0.35" stop-color="#ff5b44"/><stop offset="0.5" stop-color="#ff4027"/><stop offset="0.65" stop-color="#ff2e14"/><stop offset="0.8" stop-color="#ff2209"/><stop offset="1" stop-color="#ff1600"/></linearGradient><linearGradient id="g230" gradientUnits="userSpaceOnUse" x1="1213.6" y1="180.6" x2="1420.9" y2="125.1"><stop offset="0" stop-color="#ffffff"/><stop offset="0.1" stop-color="#ffb0a6"/><stop offset="0.2" stop-color="#ff8070"/><stop offset="0.35" stop-color="#ff5441"/><stop offset="0.5" stop-color="#ff3a25"/><stop offset="0.65" stop-color="#ff2913"/><stop offset="0.8" stop-color="#ff1d08"/><stop offset="1" stop-color="#ff1200"/></linearGradient><linearGradient id="g231" gradientUnits="userSpaceOnUse" x1="1213.6" y1="180.6" x2="1437.8" y2="126.8"><stop offset="0" stop-color="#ffffff"/><stop offset="0.1" stop-color="#ffaba3"/><stop offset="0.2" stop-color="#ff796d"/><stop offset="0.35" stop-color="#ff4d3e"/><stop offset="0.5" stop-color="#ff3323"/><stop offset="0.65" stop-color="#ff2312"/><stop offset="0.8" stop-color="#ff1708"/><stop offset="1" stop-color="#ff0d00"/></linearGradient><linearGradient id="g232" gradientUnits="userSpaceOnUse" x1="1213.6" y1="180.6" x2="1457.5" y2="128.8"><stop offset="0" stop-color="#ffffff"/><stop offset="0.1" stop-color="#ffa59f"/><stop offset="0.2" stop-color="#ff7269"/><stop offset="0.35" stop-color="#ff463b"/><stop offset="0.5" stop-color="#ff2d21"/><stop offset="0.65" stop-color="#ff1d11"/><stop offset="0.8" stop-color="#ff1207"/><stop offset="1" stop-color="#ff0900"/></linearGradient><linearGradient id="g233" gradientUnits="userSpaceOnUse" x1="1213.6" y1="180.6" x2="1480.7" y2="131.1"><stop offset="0" stop-color="#ffffff"/><stop offset="0.1" stop-color="#ff9f9b"/><stop offset="0.2" stop-color="#ff6a65"/><stop offset="0.35" stop-color="#ff3e38"/><stop offset="0.5" stop-color="#ff261f"/><stop offset="0.65" stop-color="#ff1710"/><stop offset="0.8" stop-color="#ff0d07"/><stop offset="1" stop-color="#ff0500"/></linearGradient><linearGradient id="g234" gradientUnits="userSpaceOnUse" x1="1213.6" y1="180.6" x2="1508.4" y2="133.9"><stop offset="0" stop-color="#ffffff"/><stop offset="0.1" stop-color="#ff9796"/><stop offset="0.2" stop-color="#ff6260"/><stop offset="0.35" stop-color="#ff3634"/><stop offset="0.5" stop-color="#ff1f1d"/><stop offset="0.65" stop-color="#ff110f"/><stop offset="0.8" stop-color="#ff0806"/><stop offset="1" stop-color="#ff0100"/></linearGradient><linearGradient id="g235" gradientUnits="userSpaceOnUse" x1="1213.6" y1="180.6" x2="1514.4" y2="141"><stop offset="0" stop-color="#ffffff"/><stop offset="0.1" stop-color="#ff9597"/><stop offset="0.2" stop-color="#ff5f62"/><stop offset="0.35" stop-color="#ff3437"/><stop offset="0.5" stop-color="#ff1c1f"/><stop offset="0.65" stop-color="#ff0f11"/><stop offset="0.8" stop-color="#ff0609"/><stop offset="1" stop-color="#ff0002"/></linearGradient><linearGradient id="g236" gradientUnits="userSpaceOnUse" x1="1213.6" y1="180.6" x2="1504.1" y2="150.1"><stop offset="0" stop-color="#ffffff"/><stop offset="0.1" stop-color="#ff989c"/><stop offset="0.2" stop-color="#ff6168"/><stop offset="0.35" stop-color="#ff353d"/><stop offset="0.5" stop-color="#ff1d25"/><stop offset="0.65" stop-color="#ff0f17"/><stop offset="0.8" stop-color="#ff060e"/><stop offset="1" stop-color="#ff0006"/></linearGradient><linearGradient id="g237" gradientUnits="userSpaceOnUse" x1="1213.6" y1="180.6" x2="1494.6" y2="158.5"><stop offset="0" stop-color="#ffffff"/><stop offset="0.1" stop-color="#ff9aa1"/><stop offset="0.2" stop-color="#ff636e"/><stop offset="0.35" stop-color="#ff3744"/><stop offset="0.5" stop-color="#ff1e2c"/><stop offset="0.65" stop-color="#ff101d"/><stop offset="0.8" stop-color="#ff0613"/><stop offset="1" stop-color="#ff000a"/></linearGradient><linearGradient id="g238" gradientUnits="userSpaceOnUse" x1="1213.6" y1="180.6" x2="1485.7" y2="166.3"><stop offset="0" stop-color="#ffffff"/><stop offset="0.1" stop-color="#ff9ba5"/><stop offset="0.2" stop-color="#ff6574"/><stop offset="0.35" stop-color="#ff384a"/><stop offset="0.5" stop-color="#ff1f32"/><stop offset="0.65" stop-color="#ff1023"/><stop offset="0.8" stop-color="#ff0718"/><stop offset="1" stop-color="#ff000f"/></linearGradient><linearGradient id="g239" gradientUnits="userSpaceOnUse" x1="1213.6" y1="180.6" x2="1477.4" y2="173.7"><stop offset="0" stop-color="#ffffff"/><stop offset="0.1" stop-color="#ff9daa"/><stop offset="0.2" stop-color="#ff677a"/><stop offset="0.35" stop-color="#ff3a50"/><stop offset="0.5" stop-color="#ff2038"/><stop offset="0.65" stop-color="#ff1129"/><stop offset="0.8" stop-color="#ff071e"/><stop offset="1" stop-color="#ff0014"/></linearGradient></defs><g clip-path="url(#cl)"><g shape-rendering="crispEdges"><path fill="#9c0000" d="M1515.8 136.9L3011.8 300.9L4137.8 -707L2635.4 -868.9"/><path fill="#009c00" d="M1115.1 97L779.5 -1369L-727.5 -1516.4L-382.4 -42"/><path fill="#00009c" d="M1192.1 422.1L56.3 1408.6L412.7 2879.3L1551.7 1882.9"/><path fill="#009c01" d="M1112.9 94L28.6 -15.6L27.1 0.1L1114 98.4"/><path fill="#009c02" d="M1113.7 97.1L27.5 -4.4L26.1 11.3L1114.7 101.5"/><path fill="#009c05" d="M1114.4 100.2L26.5 6.8L25.2 22.5L1115.5 104.6"/><path fill="#009c07" d="M1115.2 103.4L25.6 18L24.4 33.7L1116.2 107.7"/><path fill="#009c0a" d="M1115.9 106.5L24.7 29.2L23.7 44.9L1116.9 110.8"/><path fill="#009c0c" d="M1116.7 109.6L24 40.4L23.1 56.1L1117.7 113.9"/><path fill="#009c0f" d="M1117.4 112.7L23.3 51.6L22.5 67.3L1118.4 116.9"/><path fill="#009c12" d="M1118.1 115.7L22.7 62.8L22.1 78.6L1119.1 120"/><path fill="#009c16" d="M1118.8 118.8L22.2 74.1L21.7 89.8L1119.9 123"/><path fill="#009c19" d="M1119.6 121.8L21.8 85.3L21.4 101L1120.6 126.1"/><path fill="#009c1d" d="M1120.3 124.8L21.5 96.5L21.2 112.3L1121.3 129.1"/><path fill="#009c21" d="M1121 127.9L21.2 107.8L21 123.5L1122 132.1"/><path fill="#009c25" d="M1121.7 130.9L21.1 119L21 134.7L1122.7 135.1"/><path fill="#009c29" d="M1122.4 133.9L21 130.2L21 146L1123.4 138"/><path fill="#009c2d" d="M1123.2 136.8L21 141.5L21.2 157.2L1124.1 141"/><path fill="#009c31" d="M1123.9 139.8L21.1 152.7L21.4 168.4L1124.9 144"/><path fill="#009c36" d="M1124.6 142.8L21.3 164L21.7 179.7L1125.6 146.9"/><path fill="#009c3a" d="M1125.3 145.7L21.5 175.2L22 190.9L1126.3 149.9"/><path fill="#009c3f" d="M1126 148.7L21.9 186.4L22.5 202.1L1127 152.8"/><path fill="#009c44" d="M1126.7 151.6L22.3 197.6L23 213.4L1127.6 155.7"/><path fill="#009c4a" d="M1127.4 154.5L22.8 208.9L23.7 224.6L1128.3 158.6"/><path fill="#009c4f" d="M1128.1 157.5L23.4 220.1L24.4 235.8L1129 161.5"/><path fill="#009c55" d="M1128.8 160.4L24.1 231.3L25.2 247L1129.7 164.4"/><path fill="#009c5a" d="M1129.5 163.3L24.8 242.5L26 258.2L1130.4 167.3"/><path fill="#009c60" d="M1130.1 166.2L25.7 253.7L27 269.4L1131.1 170.2"/><path fill="#009c66" d="M1130.8 169L26.6 264.9L28.1 280.6L1131.8 173.1"/><path fill="#009c6d" d="M1131.5 171.9L27.6 276.1L29.2 291.8L1132.5 176"/><path fill="#009c73" d="M1132.2 174.8L28.7 287.3L30.4 302.9L1133.2 178.8"/><path fill="#009c7a" d="M1132.9 177.7L29.9 298.5L31.7 314.1L1133.8 181.7"/><path fill="#009c81" d="M1133.6 180.5L31.2 309.6L33.1 325.3L1134.5 184.5"/><path fill="#009c88" d="M1134.2 183.4L32.5 320.8L34.6 336.4L1135.2 187.4"/><path fill="#009c90" d="M1134.9 186.3L34 331.9L36.1 347.5L1135.9 190.2"/><path fill="#009c98" d="M1135.6 189.1L35.5 343.1L37.7 358.6L1136.5 193.1"/><path fill="#00989c" d="M1136.3 192L37.1 354.2L39.4 369.8L1137.2 195.9"/><path fill="#00909c" d="M1137 194.8L38.8 365.3L41.2 380.8L1137.9 198.8"/><path fill="#00899c" d="M1137.6 197.6L40.5 376.4L43.1 391.9L1138.6 201.6"/><path fill="#00839c" d="M1138.3 200.5L42.4 387.5L45.1 403L1139.2 204.4"/><path fill="#007c9c" d="M1139 203.3L44.3 398.6L47.1 414L1139.9 207.3"/><path fill="#00779c" d="M1139.6 206.1L46.3 409.6L49.3 425.1L1140.6 210.1"/><path fill="#00719c" d="M1140.3 209L48.4 420.7L51.5 436.1L1141.3 212.9"/><path fill="#006c9c" d="M1141 211.8L50.6 431.7L53.8 447.1L1141.9 215.8"/><path fill="#00679c" d="M1141.7 214.6L52.9 442.7L56.2 458.1L1142.6 218.6"/><path fill="#00639c" d="M1142.3 217.5L55.2 453.7L58.6 469L1143.3 221.4"/><path fill="#005e9c" d="M1143 220.3L57.6 464.6L61.2 480L1143.9 224.2"/><path fill="#005a9c" d="M1143.7 223.1L60.1 475.6L63.8 490.9L1144.6 227.1"/><path fill="#00569c" d="M1144.3 225.9L62.7 486.5L66.5 501.8L1145.3 229.9"/><path fill="#00539c" d="M1145 228.7L65.4 497.5L69.3 512.7L1146 232.7"/><path fill="#004f9c" d="M1145.7 231.6L68.2 508.3L72.1 523.6L1146.6 235.5"/><path fill="#004c9c" d="M1146.4 234.4L71 519.2L75.1 534.4L1147.3 238.4"/><path fill="#00489c" d="M1147 237.2L73.9 530.1L78.1 545.2L1148 241.2"/><path fill="#00459c" d="M1147.7 240.1L76.9 540.9L81.2 556L1148.6 244"/><path fill="#00429c" d="M1148.4 242.9L80 551.7L84.4 566.8L1149.3 246.8"/><path fill="#00409c" d="M1149 245.7L83.1 562.5L87.7 577.5L1150 249.7"/><path fill="#003d9c" d="M1149.7 248.5L86.4 573.3L91.1 588.3L1150.7 252.5"/><path fill="#003a9c" d="M1150.4 251.4L89.7 584L94.5 599L1151.3 255.4"/><path fill="#00389c" d="M1151.1 254.2L93.1 594.7L98 609.6L1152 258.2"/><path fill="#00369c" d="M1151.7 257.1L96.6 605.4L101.6 620.3L1152.7 261.1"/><path fill="#00339c" d="M1152.4 259.9L100.2 616L105.3 630.9L1153.4 263.9"/><path fill="#00319c" d="M1153.1 262.8L103.8 626.7L109 641.5L1154 266.8"/><path fill="#002f9c" d="M1153.8 265.6L107.5 637.3L112.9 652.1L1154.7 269.6"/><path fill="#002d9c" d="M1154.4 268.5L111.3 647.8L116.8 662.6L1155.4 272.5"/><path fill="#002b9c" d="M1155.1 271.3L115.2 658.4L120.8 673.1L1156.1 275.4"/><path fill="#00299c" d="M1155.8 274.2L119.2 668.9L124.8 683.6L1156.8 278.2"/><path fill="#00289c" d="M1156.5 277.1L123.2 679.4L129 694L1157.4 281.1"/><path fill="#00269c" d="M1157.2 280L127.3 689.9L133.2 704.4L1158.1 284"/><path fill="#00249c" d="M1157.9 282.9L131.5 700.3L137.5 714.8L1158.8 286.9"/><path fill="#00239c" d="M1158.5 285.8L135.8 710.7L141.9 725.2L1159.5 289.8"/><path fill="#00219c" d="M1159.2 288.7L140.1 721L146.4 735.5L1160.2 292.7"/><path fill="#00209c" d="M1159.9 291.6L144.6 731.4L150.9 745.8L1160.9 295.7"/><path fill="#001e9c" d="M1160.6 294.5L149.1 741.7L155.5 756L1161.6 298.6"/><path fill="#001d9c" d="M1161.3 297.4L153.6 751.9L160.2 766.2L1162.3 301.5"/><path fill="#001c9c" d="M1162 300.3L158.3 762.1L165 776.4L1163 304.5"/><path fill="#001a9c" d="M1162.7 303.3L163 772.3L169.8 786.5L1163.7 307.4"/><path fill="#00199c" d="M1163.4 306.2L167.9 782.5L174.7 796.6L1164.4 310.4"/><path fill="#00189c" d="M1164.1 309.2L172.7 792.6L179.7 806.7L1165.1 313.4"/><path fill="#00179c" d="M1164.8 312.2L177.7 802.7L184.8 816.7L1165.8 316.4"/><path fill="#00169c" d="M1165.5 315.2L182.7 812.7L189.9 826.7L1166.5 319.4"/><path fill="#00149c" d="M1166.2 318.2L187.9 822.7L195.1 836.7L1167.2 322.4"/><path fill="#00139c" d="M1166.9 321.2L193 832.7L200.4 846.6L1167.9 325.4"/><path fill="#00129c" d="M1167.6 324.2L198.3 842.6L205.8 856.5L1168.6 328.4"/><path fill="#00119c" d="M1168.3 327.2L203.6 852.5L211.2 866.3L1169.4 331.5"/><path fill="#00119c" d="M1169.1 330.2L209.1 862.4L216.8 876.1L1170.1 334.5"/><path fill="#00109c" d="M1169.8 333.3L214.5 872.2L222.3 885.8L1170.8 337.6"/><path fill="#000f9c" d="M1170.5 336.4L220.1 881.9L228 895.5L1171.5 340.7"/><path fill="#000e9c" d="M1171.2 339.4L225.7 891.7L233.7 905.2L1172.3 343.8"/><path fill="#000d9c" d="M1172 342.5L231.4 901.4L239.5 914.8L1173 346.9"/><path fill="#000c9c" d="M1172.7 345.6L237.2 911L245.4 924.4L1173.7 350"/><path fill="#000b9c" d="M1173.4 348.8L243.1 920.6L251.4 933.9L1174.5 353.2"/><path fill="#000b9c" d="M1174.2 351.9L249 930.1L257.4 943.4L1175.2 356.3"/><path fill="#000a9c" d="M1174.9 355.1L255 939.6L263.5 952.9L1176 359.5"/><path fill="#00099c" d="M1175.7 358.2L261 949.1L269.6 962.3L1176.7 362.7"/><path fill="#00099c" d="M1176.4 361.4L267.2 958.5L275.9 971.6L1177.5 365.9"/><path fill="#00089c" d="M1177.2 364.6L273.4 967.9L282.2 980.9L1178.3 369.2"/><path fill="#00079c" d="M1178 367.9L279.6 977.2L288.5 990.2L1179 372.4"/><path fill="#00079c" d="M1178.7 371.1L286 986.5L295 999.4L1179.8 375.7"/><path fill="#00069c" d="M1179.5 374.4L292.4 995.7L301.5 1008.6L1180.6 379"/><path fill="#00059c" d="M1180.3 377.7L298.9 1004.9L308.1 1017.7L1181.4 382.3"/><path fill="#00059c" d="M1181 381L305.4 1014L314.7 1026.7L1182.1 385.6"/><path fill="#00049c" d="M1181.8 384.3L312 1023.1L321.4 1035.7L1182.9 389"/><path fill="#00049c" d="M1182.6 387.6L318.7 1032.1L328.2 1044.7L1183.7 392.3"/><path fill="#00039c" d="M1183.4 391L325.5 1041.1L335 1053.6L1184.5 395.7"/><path fill="#00039c" d="M1184.2 394.4L332.3 1050.1L342 1062.5L1185.3 399.2"/><path fill="#00029c" d="M1185 397.8L339.2 1058.9L348.9 1071.3L1186.2 402.6"/><path fill="#00029c" d="M1185.8 401.2L346.1 1067.8L356 1080L1187 406.1"/><path fill="#00029c" d="M1186.6 404.7L353.2 1076.5L363.1 1088.7L1187.8 409.6"/><path fill="#00019c" d="M1187.5 408.2L360.2 1085.3L370.3 1097.4L1188.6 413.1"/><path fill="#00019c" d="M1188.3 411.7L367.4 1093.9L377.5 1106L1189.5 416.6"/><path fill="#00019c" d="M1189.1 415.2L374.6 1102.5L384.8 1114.5L1190.3 420.2"/><path fill="#00009c" d="M1190 418.8L381.9 1111.1L392.2 1123L1191.2 423.8"/><path fill="#00009c" d="M1190.8 422.4L389.2 1119.6L396.6 1128.1L1191.7 426"/><path fill="#00009c" d="M1190.2 425.5L1458 1553.2L1480.9 1547.6L1194.7 421.5"/><path fill="#01009c" d="M1193.4 422.7L1474.4 1549.2L1497.2 1543.3L1197.9 418.7"/><path fill="#02009c" d="M1196.6 419.8L1490.7 1545.1L1513.5 1538.9L1201.1 415.9"/><path fill="#03009c" d="M1199.8 417L1507 1540.7L1529.7 1534.3L1204.2 413.1"/><path fill="#04009c" d="M1202.9 414.2L1523.3 1536.2L1545.9 1529.5L1207.2 410.4"/><path fill="#05009c" d="M1206 411.5L1539.5 1531.4L1562 1524.5L1210.3 407.7"/><path fill="#06009c" d="M1209.1 408.8L1555.6 1526.5L1578.1 1519.4L1213.3 405"/><path fill="#08009c" d="M1212.1 406.1L1571.7 1521.4L1594.1 1514L1216.3 402.4"/><path fill="#09009c" d="M1215.1 403.4L1587.7 1516.2L1610 1508.5L1219.3 399.8"/><path fill="#0a009c" d="M1218.1 400.8L1603.7 1510.7L1625.9 1502.8L1222.2 397.2"/><path fill="#0c009c" d="M1221 398.2L1619.6 1505.1L1641.7 1496.9L1225.1 394.6"/><path fill="#0d009c" d="M1223.9 395.6L1635.4 1499.3L1657.5 1490.9L1228 392"/><path fill="#0f009c" d="M1226.8 393.1L1651.2 1493.3L1673.1 1484.7L1230.9 389.5"/><path fill="#10009c" d="M1229.7 390.5L1666.9 1487.2L1688.7 1478.3L1233.7 387"/><path fill="#12009c" d="M1232.6 388L1682.5 1480.8L1704.3 1471.7L1236.5 384.5"/><path fill="#14009c" d="M1235.4 385.5L1698.1 1474.3L1719.7 1464.9L1239.3 382"/><path fill="#15009c" d="M1238.2 383L1713.6 1467.6L1735.1 1458L1242.1 379.6"/><path fill="#17009c" d="M1241 380.5L1729 1460.8L1750.4 1450.9L1244.8 377.1"/><path fill="#19009c" d="M1243.7 378.1L1744.3 1453.8L1765.6 1443.6L1247.6 374.7"/><path fill="#1b009c" d="M1246.5 375.7L1759.6 1446.6L1780.8 1436.2L1250.3 372.3"/><path fill="#1d009c" d="M1249.2 373.2L1774.7 1439.2L1795.8 1428.6L1253 369.9"/><path fill="#1f009c" d="M1251.9 370.8L1789.8 1431.6L1810.8 1420.8L1255.7 367.5"/><path fill="#21009c" d="M1254.6 368.5L1804.8 1423.9L1825.7 1412.8L1258.4 365.1"/><path fill="#23009c" d="M1257.3 366.1L1819.7 1416L1840.5 1404.7L1261 362.8"/><path fill="#25009c" d="M1260 363.7L1834.6 1408L1855.2 1396.4L1263.7 360.4"/><path fill="#28009c" d="M1262.6 361.4L1849.3 1399.8L1869.8 1388L1266.3 358.1"/><path fill="#2a009c" d="M1265.3 359L1863.9 1391.4L1884.3 1379.4L1268.9 355.8"/><path fill="#2c009c" d="M1267.9 356.7L1878.5 1382.9L1898.7 1370.6L1271.5 353.5"/><path fill="#2f009c" d="M1270.5 354.4L1892.9 1374.1L1913 1361.7L1274.1 351.2"/><path fill="#31009c" d="M1273.1 352.1L1907.3 1365.3L1927.2 1352.6L1276.7 348.9"/><path fill="#34009c" d="M1275.7 349.8L1921.5 1356.2L1941.3 1343.3L1279.3 346.6"/><path fill="#36009c" d="M1278.3 347.5L1935.7 1347.1L1955.3 1333.9L1281.9 344.3"/><path fill="#39009c" d="M1280.9 345.2L1949.7 1337.7L1969.2 1324.4L1284.5 342.1"/><path fill="#3c009c" d="M1283.4 343L1963.6 1328.2L1983 1314.6L1287 339.8"/><path fill="#3f009c" d="M1286 340.7L1977.5 1318.5L1996.6 1304.8L1289.6 337.5"/><path fill="#42009c" d="M1288.6 338.4L1991.2 1308.7L2010.2 1294.7L1292.1 335.3"/><path fill="#45009c" d="M1291.1 336.2L2004.8 1298.8L2023.6 1284.5L1294.7 333"/><path fill="#48009c" d="M1293.7 333.9L2018.3 1288.6L2037 1274.2L1297.2 330.8"/><path fill="#4b009c" d="M1296.2 331.7L2031.7 1278.4L2050.2 1263.7L1299.8 328.5"/><path fill="#4f009c" d="M1298.8 329.4L2044.9 1267.9L2063.3 1253.1L1302.3 326.3"/><path fill="#52009c" d="M1301.3 327.2L2058.1 1257.4L2076.3 1242.3L1304.9 324"/><path fill="#56009c" d="M1303.8 324.9L2071.1 1246.7L2089.1 1231.4L1307.4 321.8"/><path fill="#59009c" d="M1306.4 322.7L2084 1235.8L2101.8 1220.3L1309.9 319.6"/><path fill="#5d009c" d="M1308.9 320.5L2096.8 1224.8L2114.5 1209.1L1312.5 317.3"/><path fill="#61009c" d="M1311.4 318.2L2109.4 1213.6L2126.9 1197.8L1315 315.1"/><path fill="#65009c" d="M1314 316L2122 1202.3L2139.3 1186.3L1317.5 312.9"/><path fill="#69009c" d="M1316.5 313.7L2134.4 1190.9L2151.5 1174.7L1320.1 310.6"/><path fill="#6e009c" d="M1319 311.5L2146.6 1179.3L2163.6 1162.9L1322.6 308.4"/><path fill="#72009c" d="M1321.6 309.3L2158.8 1167.6L2175.5 1151L1325.1 306.1"/><path fill="#77009c" d="M1324.1 307L2170.8 1155.8L2187.4 1139L1327.7 303.9"/><path fill="#7c009c" d="M1326.7 304.8L2182.7 1143.8L2199 1126.8L1330.2 301.6"/><path fill="#81009c" d="M1329.2 302.5L2194.4 1131.7L2210.6 1114.5L1332.8 299.4"/><path fill="#86009c" d="M1331.8 300.3L2206 1119.4L2222 1102.1L1335.4 297.1"/><path fill="#8b009c" d="M1334.3 298L2217.5 1107.1L2233.3 1089.5L1337.9 294.8"/><path fill="#91009c" d="M1336.9 295.7L2228.8 1094.6L2244.4 1076.9L1340.5 292.6"/><path fill="#97009c" d="M1339.5 293.5L2240 1081.9L2255.4 1064L1343.1 290.3"/><path fill="#9c009a" d="M1342.1 291.2L2251 1069.2L2266.2 1051.1L1345.7 288"/><path fill="#9c0094" d="M1344.7 288.9L2261.9 1056.3L2276.9 1038.1L1348.3 285.7"/><path fill="#9c008f" d="M1347.3 286.6L2272.7 1043.3L2287.5 1024.9L1350.9 283.4"/><path fill="#9c0089" d="M1349.9 284.3L2283.3 1030.2L2297.9 1011.6L1353.5 281.1"/><path fill="#9c0084" d="M1352.5 282L2293.7 1017L2308.1 998.2L1356.2 278.8"/><path fill="#9c007f" d="M1355.1 279.7L2304 1003.6L2318.2 984.7L1358.8 276.4"/><path fill="#9c007a" d="M1357.8 277.4L2314.2 990.1L2328.1 971.1L1361.5 274.1"/><path fill="#9c0075" d="M1360.4 275L2324.2 976.6L2337.9 957.4L1364.1 271.7"/><path fill="#9c0070" d="M1363.1 272.7L2334 962.9L2347.6 943.5L1366.8 269.4"/><path fill="#9c006c" d="M1365.8 270.3L2343.7 949.1L2357 929.6L1369.5 267"/><path fill="#9c0067" d="M1368.5 267.9L2353.3 935.1L2366.4 915.5L1372.3 264.6"/><path fill="#9c0063" d="M1371.2 265.5L2362.6 921.1L2375.5 901.3L1375 262.2"/><path fill="#9c005f" d="M1373.9 263.1L2371.9 907L2384.5 887.1L1377.8 259.7"/><path fill="#9c005b" d="M1376.6 260.7L2380.9 892.8L2393.4 872.7L1380.5 257.3"/><path fill="#9c0057" d="M1379.4 258.3L2389.8 878.5L2402 858.2L1383.3 254.8"/><path fill="#9c0053" d="M1382.2 255.8L2398.6 864L2410.5 843.7L1386.1 252.4"/><path fill="#9c0050" d="M1385 253.4L2407.2 849.5L2418.9 829L1389 249.9"/><path fill="#9c004c" d="M1387.8 250.9L2415.6 834.9L2427.1 814.3L1391.8 247.3"/><path fill="#9c0049" d="M1390.7 248.4L2423.8 820.2L2435.1 799.4L1394.7 244.8"/><path fill="#9c0046" d="M1393.6 245.8L2431.9 805.4L2443 784.5L1397.6 242.3"/><path fill="#9c0042" d="M1396.5 243.3L2439.8 790.5L2450.6 769.5L1400.6 239.7"/><path fill="#9c003f" d="M1399.4 240.7L2447.6 775.5L2458.1 754.4L1403.5 237.1"/><path fill="#9c003c" d="M1402.3 238.1L2455.2 760.4L2465.5 739.2L1406.5 234.4"/><path fill="#9c0039" d="M1405.3 235.5L2462.6 745.3L2472.7 723.9L1409.5 231.8"/><path fill="#9c0037" d="M1408.3 232.8L2469.8 730L2479.7 708.6L1412.6 229.1"/><path fill="#9c0034" d="M1411.3 230.2L2476.9 714.7L2486.5 693.2L1415.6 226.4"/><path fill="#9c0031" d="M1414.4 227.5L2483.8 699.3L2493.1 677.7L1418.7 223.7"/><path fill="#9c002e" d="M1417.5 224.8L2490.5 683.9L2499.6 662.1L1421.9 220.9"/><path fill="#9c002c" d="M1420.6 222L2497 668.3L2505.9 646.4L1425.1 218.1"/><path fill="#9c0029" d="M1423.8 219.2L2503.4 652.7L2512 630.7L1428.3 215.3"/><path fill="#9c0027" d="M1427 216.4L2509.6 637L2518 614.9L1431.5 212.4"/><path fill="#9c0025" d="M1430.2 213.6L2515.6 621.3L2523.8 599.1L1434.8 209.5"/><path fill="#9c0022" d="M1433.5 210.7L2521.5 605.4L2529.4 583.2L1438.2 206.6"/><path fill="#9c0020" d="M1436.8 207.7L2527.1 589.5L2534.8 567.2L1441.6 203.6"/><path fill="#9c001e" d="M1440.2 204.8L2532.6 573.6L2540 551.2L1445 200.6"/><path fill="#9c001c" d="M1443.6 201.8L2537.9 557.6L2545.1 535.1L1448.4 197.5"/><path fill="#9c001a" d="M1447.1 198.8L2543.1 541.5L2549.9 518.9L1452 194.4"/><path fill="#9c0018" d="M1450.5 195.7L2548 525.4L2554.6 502.7L1455.5 191.3"/><path fill="#9c0016" d="M1454.1 192.6L2552.8 509.2L2559.1 486.5L1459.2 188.1"/><path fill="#9c0014" d="M1457.7 189.4L2557.3 493L2563.5 470.2L1462.8 184.9"/><path fill="#9c0012" d="M1461.3 186.2L2561.7 476.7L2567.6 453.8L1466.6 181.6"/><path fill="#9c0010" d="M1465.1 182.9L2566 460.3L2571.5 437.4L1470.3 178.3"/><path fill="#9c000f" d="M1468.8 179.6L2570 444L2575.3 421L1474.2 174.9"/><path fill="#9c000d" d="M1472.7 176.2L2573.8 427.5L2578.9 404.5L1478.1 171.4"/><path fill="#9c000b" d="M1476.5 172.8L2577.5 411.1L2582.3 388L1482.1 167.9"/><path fill="#9c000a" d="M1480.5 169.3L2581 394.6L2585.5 371.4L1486.1 164.4"/><path fill="#9c0008" d="M1484.5 165.8L2584.3 378L2588.6 354.8L1490.3 160.7"/><path fill="#9c0007" d="M1488.6 162.2L2587.4 361.5L2591.4 338.2L1494.5 157"/><path fill="#9c0006" d="M1492.8 158.5L2590.3 344.8L2594 321.5L1498.7 153.3"/><path fill="#9c0004" d="M1497 154.8L2593 328.2L2596.5 304.8L1503.1 149.5"/><path fill="#9c0003" d="M1501.3 151L2595.5 311.5L2598.8 288.1L1507.5 145.6"/><path fill="#9c0002" d="M1505.7 147.1L2597.9 294.8L2600.9 271.4L1512.1 141.6"/><path fill="#9c0001" d="M1510.2 143.2L2600.1 278.1L2602.8 254.6L1516.7 137.5"/><path fill="#9c0000" d="M1514.8 139.1L2602 261.3L2603.8 244.6L1519.5 135"/><path fill="#9c0000" d="M1519.9 136.2L2314.9 -565.9L2301.1 -581.3L1511.8 135.4"/><path fill="#9c0000" d="M1514.1 135.6L2305.1 -576.9L2291.2 -592.1L1506.1 134.8"/><path fill="#9c0100" d="M1508.4 135L2295.2 -587.8L2281.1 -602.9L1500.5 134.2"/><path fill="#9c0100" d="M1502.7 134.5L2285.2 -598.6L2271 -613.6L1495.1 133.7"/><path fill="#9c0100" d="M1497.2 133.9L2275 -609.3L2260.7 -624.1L1489.7 133.2"/><path fill="#9c0200" d="M1491.8 133.4L2264.8 -619.9L2250.3 -634.6L1484.4 132.6"/><path fill="#9c0200" d="M1486.5 132.9L2254.5 -630.4L2239.8 -644.9L1479.2 132.1"/><path fill="#9c0300" d="M1481.2 132.3L2244 -640.8L2229.2 -655.2L1474 131.6"/><path fill="#9c0300" d="M1476.1 131.8L2233.5 -651.1L2218.6 -665.4L1469 131.1"/><path fill="#9c0400" d="M1471 131.3L2222.8 -661.3L2207.8 -675.4L1464 130.6"/><path fill="#9c0400" d="M1466 130.8L2212.1 -671.4L2196.9 -685.3L1459.1 130.1"/><path fill="#9c0500" d="M1461.1 130.3L2201.3 -681.4L2185.9 -695.2L1454.3 129.7"/><path fill="#9c0600" d="M1456.2 129.8L2190.3 -691.3L2174.9 -704.9L1449.5 129.2"/><path fill="#9c0600" d="M1451.4 129.4L2179.3 -701L2163.7 -714.5L1444.8 128.7"/><path fill="#9c0700" d="M1446.7 128.9L2168.2 -710.7L2152.4 -724L1440.2 128.3"/><path fill="#9c0800" d="M1442 128.4L2156.9 -720.2L2141.1 -733.4L1435.6 127.8"/><path fill="#9c0800" d="M1437.4 128L2145.6 -729.7L2129.6 -742.7L1431.1 127.4"/><path fill="#9c0900" d="M1432.9 127.5L2134.2 -739L2118.1 -751.9L1426.7 126.9"/><path fill="#9c0a00" d="M1428.4 127.1L2122.7 -748.2L2106.5 -760.9L1422.3 126.5"/><path fill="#9c0a00" d="M1424 126.7L2111.1 -757.3L2094.8 -769.8L1417.9 126"/><path fill="#9c0b00" d="M1419.6 126.2L2099.5 -766.3L2083 -778.7L1413.6 125.6"/><path fill="#9c0c00" d="M1415.3 125.8L2087.7 -775.2L2071.1 -787.4L1409.4 125.2"/><path fill="#9c0d00" d="M1411.1 125.4L2075.8 -783.9L2059.1 -796L1405.2 124.8"/><path fill="#9c0e00" d="M1406.8 124.9L2063.9 -792.5L2047.1 -804.4L1401 124.4"/><path fill="#9c0f00" d="M1402.7 124.5L2051.9 -801.1L2034.9 -812.8L1396.9 124"/><path fill="#9c0f00" d="M1398.6 124.1L2039.8 -809.5L2022.7 -821L1392.9 123.6"/><path fill="#9c1000" d="M1394.5 123.7L2027.6 -817.8L2010.4 -829.1L1388.8 123.2"/><path fill="#9c1100" d="M1390.4 123.3L2015.3 -825.9L1998 -837.1L1384.9 122.8"/><path fill="#9c1200" d="M1386.5 122.9L2003 -834L1985.6 -845L1380.9 122.4"/><path fill="#9c1300" d="M1382.5 122.5L1990.6 -841.9L1973 -852.8L1377 122"/><path fill="#9c1400" d="M1378.6 122.1L1978 -849.7L1960.4 -860.4L1373.2 121.6"/><path fill="#9c1500" d="M1374.7 121.8L1965.5 -857.3L1947.7 -867.9L1369.3 121.2"/><path fill="#9c1700" d="M1370.9 121.4L1952.8 -864.9L1935 -875.3L1365.6 120.8"/><path fill="#9c1800" d="M1367.1 121L1940.1 -872.3L1922.2 -882.5L1361.8 120.5"/><path fill="#9c1900" d="M1363.3 120.6L1927.3 -879.6L1909.3 -889.6L1358.1 120.1"/><path fill="#9c1a00" d="M1359.6 120.3L1914.4 -886.8L1896.3 -896.6L1354.4 119.7"/><path fill="#9c1b00" d="M1355.8 119.9L1901.5 -893.8L1883.2 -903.5L1350.7 119.4"/><path fill="#9c1d00" d="M1352.2 119.5L1888.5 -900.8L1870.1 -910.2L1347.1 119"/><path fill="#9c1e00" d="M1348.5 119.2L1875.4 -907.6L1857 -916.8L1343.5 118.6"/><path fill="#9c1f00" d="M1344.9 118.8L1862.3 -914.2L1843.7 -923.3L1339.9 118.3"/><path fill="#9c2100" d="M1341.3 118.4L1849 -920.8L1830.5 -929.7L1336.3 117.9"/><path fill="#9c2200" d="M1337.7 118.1L1835.8 -927.2L1817.1 -935.9L1332.8 117.6"/><path fill="#9c2400" d="M1334.2 117.7L1822.4 -933.4L1803.7 -942L1329.3 117.2"/><path fill="#9c2500" d="M1330.7 117.4L1809 -939.6L1790.2 -947.9L1325.8 116.9"/><path fill="#9c2700" d="M1327.2 117L1795.6 -945.6L1776.7 -953.8L1322.3 116.5"/><path fill="#9c2900" d="M1323.7 116.7L1782.1 -951.5L1763.1 -959.5L1318.9 116.2"/><path fill="#9c2a00" d="M1320.3 116.3L1768.5 -957.2L1749.4 -965L1315.5 115.9"/><path fill="#9c2c00" d="M1316.8 116L1754.9 -962.8L1735.7 -970.4L1312.1 115.5"/><path fill="#9c2e00" d="M1313.4 115.7L1741.2 -968.3L1722 -975.7L1308.7 115.2"/><path fill="#9c3000" d="M1310 115.3L1727.5 -973.6L1708.2 -980.9L1305.3 114.8"/><path fill="#9c3200" d="M1306.7 115L1713.7 -978.8L1694.3 -985.9L1302 114.5"/><path fill="#9c3400" d="M1303.3 114.6L1699.9 -983.9L1680.4 -990.8L1298.6 114.2"/><path fill="#9c3600" d="M1300 114.3L1686 -988.8L1666.5 -995.5L1295.3 113.8"/><path fill="#9c3900" d="M1296.6 114L1672 -993.6L1652.5 -1000.1L1292 113.5"/><path fill="#9c3b00" d="M1293.3 113.6L1658.1 -998.3L1638.4 -1004.6L1288.7 113.2"/><path fill="#9c3d00" d="M1290 113.3L1644 -1002.8L1624.3 -1008.9L1285.4 112.9"/><path fill="#9c4000" d="M1286.8 113L1630 -1007.2L1610.2 -1013.1L1282.2 112.5"/><path fill="#9c4300" d="M1283.5 112.7L1615.9 -1011.5L1596 -1017.2L1278.9 112.2"/><path fill="#9c4600" d="M1280.2 112.3L1601.7 -1015.6L1581.8 -1021.1L1275.7 111.9"/><path fill="#9c4800" d="M1277 112L1587.5 -1019.5L1567.6 -1024.9L1272.5 111.6"/><path fill="#9c4c00" d="M1273.8 111.7L1573.3 -1023.4L1553.3 -1028.5L1269.2 111.2"/><path fill="#9c4f00" d="M1270.5 111.4L1559 -1027.1L1539 -1032L1266 110.9"/><path fill="#9c5200" d="M1267.3 111L1544.7 -1030.6L1524.7 -1035.3L1262.8 110.6"/><path fill="#9c5600" d="M1264.1 110.7L1530.4 -1034L1510.3 -1038.6L1259.6 110.3"/><path fill="#9c5900" d="M1260.9 110.4L1516 -1037.3L1495.9 -1041.6L1256.5 109.9"/><path fill="#9c5d00" d="M1257.7 110.1L1501.6 -1040.4L1481.4 -1044.5L1253.3 109.6"/><path fill="#9c6100" d="M1254.5 109.8L1487.2 -1043.4L1467 -1047.3L1250.1 109.3"/><path fill="#9c6500" d="M1251.4 109.4L1472.7 -1046.2L1452.5 -1050L1246.9 109"/><path fill="#9c6a00" d="M1248.2 109.1L1458.3 -1048.9L1437.9 -1052.5L1243.8 108.7"/><path fill="#9c6f00" d="M1245 108.8L1443.7 -1051.5L1423.4 -1054.8L1240.6 108.4"/><path fill="#9c7400" d="M1241.9 108.5L1429.2 -1053.9L1408.8 -1057.1L1237.5 108"/><path fill="#9c7900" d="M1238.7 108.2L1414.7 -1056.2L1394.2 -1059.1L1234.3 107.7"/><path fill="#9c7f00" d="M1235.6 107.8L1400.1 -1058.3L1379.6 -1061.1L1231.2 107.4"/><path fill="#9c8500" d="M1232.4 107.5L1385.5 -1060.3L1365 -1062.8L1228 107.1"/><path fill="#9c8b00" d="M1229.3 107.2L1370.9 -1062.1L1350.4 -1064.5L1224.9 106.8"/><path fill="#9c9200" d="M1226.1 106.9L1356.2 -1063.8L1335.7 -1066L1221.7 106.4"/><path fill="#9c9900" d="M1223 106.6L1341.6 -1065.4L1321 -1067.3L1218.6 106.1"/><path fill="#969c00" d="M1219.8 106.3L1326.9 -1066.8L1306.3 -1068.5L1215.4 105.8"/><path fill="#8f9c00" d="M1216.7 105.9L1312.2 -1068.1L1291.6 -1069.6L1212.3 105.5"/><path fill="#889c00" d="M1213.5 105.6L1297.5 -1069.2L1276.9 -1070.5L1209.1 105.2"/><path fill="#819c00" d="M1210.4 105.3L1282.8 -1070.2L1262.2 -1071.3L1206 104.9"/><path fill="#7a9c00" d="M1207.2 105L1268.1 -1071L1247.5 -1071.9L1202.8 104.5"/><path fill="#739c00" d="M1204.1 104.7L1253.4 -1071.7L1232.8 -1072.4L1199.6 104.2"/><path fill="#6d9c00" d="M1200.9 104.3L1238.7 -1072.2L1218 -1072.8L1196.5 103.9"/><path fill="#679c00" d="M1197.7 104L1223.9 -1072.6L1203.3 -1073L1193.3 103.6"/><path fill="#619c00" d="M1194.6 103.7L1209.2 -1072.9L1188.6 -1073L1190.1 103.2"/><path fill="#5b9c00" d="M1191.4 103.4L1194.5 -1073L1173.8 -1072.9L1186.9 102.9"/><path fill="#569c00" d="M1188.2 103.1L1179.7 -1073L1159.1 -1072.7L1183.7 102.6"/><path fill="#509c00" d="M1185 102.7L1165 -1072.8L1144.4 -1072.3L1180.6 102.3"/><path fill="#4b9c00" d="M1181.8 102.4L1150.3 -1072.5L1129.7 -1071.8L1177.3 102"/><path fill="#469c00" d="M1178.6 102.1L1135.5 -1072L1114.9 -1071.1L1174.1 101.6"/><path fill="#419c00" d="M1175.4 101.8L1120.8 -1071.4L1100.2 -1070.3L1170.9 101.3"/><path fill="#3c9c00" d="M1172.2 101.4L1106.1 -1070.6L1085.5 -1069.3L1167.7 101"/><path fill="#379c00" d="M1169 101.1L1091.4 -1069.7L1070.8 -1068.2L1164.4 100.6"/><path fill="#329c00" d="M1165.7 100.8L1076.7 -1068.7L1056.1 -1067L1161.2 100.3"/><path fill="#2e9c00" d="M1162.5 100.4L1062 -1067.5L1041.5 -1065.6L1157.9 100"/><path fill="#2a9c00" d="M1159.2 100.1L1047.3 -1066.2L1026.8 -1064.1L1154.6 99.6"/><path fill="#269c00" d="M1155.9 99.8L1032.7 -1064.7L1012.2 -1062.4L1151.3 99.3"/><path fill="#229c00" d="M1152.6 99.4L1018 -1063.1L997.6 -1060.6L1148 99"/><path fill="#1e9c00" d="M1149.3 99.1L1003.4 -1061.3L983 -1058.6L1144.7 98.6"/><path fill="#1a9c00" d="M1146 98.8L988.8 -1059.4L968.4 -1056.5L1141.3 98.3"/><path fill="#179c00" d="M1142.7 98.4L974.2 -1057.3L953.8 -1054.2L1138 97.9"/><path fill="#139c00" d="M1139.3 98.1L959.6 -1055.1L939.3 -1051.8L1134.6 97.6"/><path fill="#109c00" d="M1135.9 97.7L945.1 -1052.8L924.8 -1049.3L1131.2 97.2"/><path fill="#0d9c00" d="M1132.5 97.4L930.6 -1050.3L910.3 -1046.6L1127.8 96.9"/><path fill="#0a9c00" d="M1129.1 97L916.1 -1047.7L895.8 -1043.8L1124.3 96.5"/><path fill="#079c00" d="M1125.7 96.7L901.6 -1044.9L881.4 -1040.8L1120.9 96.2"/><path fill="#059c00" d="M1122.3 96.3L887.2 -1042L867 -1037.7L1117.4 95.8"/><path fill="#039c00" d="M1118.8 96L872.7 -1039L852.6 -1034.5L1113.9 95.5"/><path fill="#019c00" d="M1115.3 95.6L858.4 -1035.8L844 -1032.4L1111.8 95.3"/></g><g clip-path="url(#ct)"><g shape-rendering="crispEdges"><path fill="url(#g0)" d="M1213.6 180.6L1538.5 176.3L1538.5 187.8"/><path fill="url(#g1)" d="M1213.6 180.6L1529.4 184.7L1529.1 195.9"/><path fill="url(#g2)" d="M1213.6 180.6L1520.8 192.7L1520.2 203.5"/><path fill="url(#g3)" d="M1213.6 180.6L1512.6 200.2L1511.8 210.7"/><path fill="url(#g4)" d="M1213.6 180.6L1504.9 207.4L1503.7 217.6"/><path fill="url(#g5)" d="M1213.6 180.6L1497.5 214.2L1496.1 224.2"/><path fill="url(#g6)" d="M1213.6 180.6L1490.4 220.7L1488.8 230.5"/><path fill="url(#g7)" d="M1213.6 180.6L1483.6 227L1481.8 236.5"/><path fill="url(#g8)" d="M1213.6 180.6L1477.1 233L1475.1 242.3"/><path fill="url(#g9)" d="M1213.6 180.6L1470.8 238.8L1468.6 247.8"/><path fill="url(#g10)" d="M1213.6 180.6L1464.8 244.4L1462.3 253.2"/><path fill="url(#g11)" d="M1213.6 180.6L1458.9 249.8L1456.3 258.4"/><path fill="url(#g12)" d="M1213.6 180.6L1453.2 255L1450.5 263.4"/><path fill="url(#g13)" d="M1213.6 180.6L1447.7 260.1L1444.8 268.3"/><path fill="url(#g14)" d="M1213.6 180.6L1442.4 265L1439.3 273"/><path fill="url(#g15)" d="M1213.6 180.6L1437.2 269.8L1433.9 277.6"/><path fill="url(#g16)" d="M1213.6 180.6L1432.1 274.5L1428.7 282.1"/><path fill="url(#g17)" d="M1213.6 180.6L1427.2 279L1423.5 286.5"/><path fill="url(#g18)" d="M1213.6 180.6L1422.3 283.5L1418.5 290.8"/><path fill="url(#g19)" d="M1213.6 180.6L1417.5 287.9L1413.6 295"/><path fill="url(#g20)" d="M1213.6 180.6L1412.9 292.2L1408.8 299.2"/><path fill="url(#g21)" d="M1213.6 180.6L1408.3 296.4L1404.1 303.2"/><path fill="url(#g22)" d="M1213.6 180.6L1403.7 300.6L1399.4 307.2"/><path fill="url(#g23)" d="M1213.6 180.6L1399.3 304.7L1394.8 311.1"/><path fill="url(#g24)" d="M1213.6 180.6L1394.9 308.7L1390.2 315"/><path fill="url(#g25)" d="M1213.6 180.6L1390.5 312.7L1385.7 318.9"/><path fill="url(#g26)" d="M1213.6 180.6L1386.2 316.6L1381.3 322.7"/><path fill="url(#g27)" d="M1213.6 180.6L1381.9 320.6L1376.8 326.4"/><path fill="url(#g28)" d="M1213.6 180.6L1377.6 324.4L1372.4 330.1"/><path fill="url(#g29)" d="M1213.6 180.6L1373.4 328.3L1368.1 333.9"/><path fill="url(#g30)" d="M1213.6 180.6L1369.2 332.1L1363.7 337.5"/><path fill="url(#g31)" d="M1213.6 180.6L1365 336L1359.4 341.2"/><path fill="url(#g32)" d="M1213.6 180.6L1360.8 339.8L1355 344.9"/><path fill="url(#g33)" d="M1213.6 180.6L1356.6 343.6L1350.7 348.5"/><path fill="url(#g34)" d="M1213.6 180.6L1352.3 347.4L1346.4 352.2"/><path fill="url(#g35)" d="M1213.6 180.6L1348.1 351.2L1342 355.9"/><path fill="url(#g36)" d="M1213.6 180.6L1343.9 355.1L1337.6 359.6"/><path fill="url(#g37)" d="M1213.6 180.6L1339.6 358.9L1333.2 363.2"/><path fill="url(#g38)" d="M1213.6 180.6L1335.3 362.8L1328.8 367"/><path fill="url(#g39)" d="M1213.6 180.6L1331 366.7L1324.4 370.7"/><path fill="url(#g40)" d="M1213.6 180.6L1326.6 370.6L1319.9 374.5"/><path fill="url(#g41)" d="M1213.6 180.6L1322.2 374.6L1315.3 378.3"/><path fill="url(#g42)" d="M1213.6 180.6L1317.8 378.6L1310.7 382.1"/><path fill="url(#g43)" d="M1213.6 180.6L1313.2 382.6L1306 386"/><path fill="url(#g44)" d="M1213.6 180.6L1308.6 386.7L1301.3 390"/><path fill="url(#g45)" d="M1213.6 180.6L1304 390.9L1296.5 394"/><path fill="url(#g46)" d="M1213.6 180.6L1299.2 395.2L1291.6 398.1"/><path fill="url(#g47)" d="M1213.6 180.6L1294.4 399.5L1286.6 402.2"/><path fill="url(#g48)" d="M1213.6 180.6L1289.4 403.9L1281.5 406.5"/><path fill="url(#g49)" d="M1213.6 180.6L1284.4 408.4L1276.3 410.8"/><path fill="url(#g50)" d="M1213.6 180.6L1279.2 413.1L1270.9 415.2"/><path fill="url(#g51)" d="M1213.6 180.6L1273.8 417.8L1265.4 419.8"/><path fill="url(#g52)" d="M1213.6 180.6L1268.4 422.7L1259.8 424.5"/><path fill="url(#g53)" d="M1213.6 180.6L1262.8 427.7L1254 429.3"/><path fill="url(#g54)" d="M1213.6 180.6L1257 432.8L1248 434.2"/><path fill="url(#g55)" d="M1213.6 180.6L1251 438.2L1241.8 439.3"/><path fill="url(#g56)" d="M1213.6 180.6L1244.7 443.7L1235.4 444.7"/><path fill="url(#g57)" d="M1213.6 180.6L1238.3 449.4L1228.8 450.2"/><path fill="url(#g58)" d="M1213.6 180.6L1231.6 455.4L1221.9 455.9"/><path fill="url(#g59)" d="M1213.6 180.6L1224.6 461.6L1214.7 461.8"/><path fill="url(#g60)" d="M1213.6 180.6L1217.4 468.1L1207.2 468.1"/><path fill="url(#g61)" d="M1213.6 180.6L1209.8 474.9L1199.4 474.6"/><path fill="url(#g62)" d="M1213.6 180.6L1201.8 482L1191.1 481.4"/><path fill="url(#g63)" d="M1213.6 180.6L1193.4 489.5L1182.5 488.6"/><path fill="url(#g64)" d="M1213.6 180.6L1185.8 483.6L1175.1 482.4"/><path fill="url(#g65)" d="M1213.6 180.6L1180.3 462.2L1170.3 460.9"/><path fill="url(#g66)" d="M1213.6 180.6L1175.5 443.6L1166.2 442.1"/><path fill="url(#g67)" d="M1213.6 180.6L1171.2 427.2L1162.5 425.6"/><path fill="url(#g68)" d="M1213.6 180.6L1167.4 412.7L1159.3 410.9"/><path fill="url(#g69)" d="M1213.6 180.6L1164 399.6L1156.3 397.7"/><path fill="url(#g70)" d="M1213.6 180.6L1161 387.9L1153.7 385.9"/><path fill="url(#g71)" d="M1213.6 180.6L1158.2 377.2L1151.3 375.1"/><path fill="url(#g72)" d="M1213.6 180.6L1155.6 367.4L1149 365.2"/><path fill="url(#g73)" d="M1213.6 180.6L1153.2 358.5L1147 356.2"/><path fill="url(#g74)" d="M1213.6 180.6L1151 350.2L1145.1 347.9"/><path fill="url(#g75)" d="M1213.6 180.6L1149 342.5L1143.3 340.1"/><path fill="url(#g76)" d="M1213.6 180.6L1147.1 335.4L1141.7 332.9"/><path fill="url(#g77)" d="M1213.6 180.6L1145.3 328.7L1140.1 326.2"/><path fill="url(#g78)" d="M1213.6 180.6L1143.6 322.5L1138.7 319.9"/><path fill="url(#g79)" d="M1213.6 180.6L1142.1 316.6L1137.3 314"/><path fill="url(#g80)" d="M1213.6 180.6L1140.6 311L1136 308.4"/><path fill="url(#g81)" d="M1213.6 180.6L1139.1 305.8L1134.8 303"/><path fill="url(#g82)" d="M1213.6 180.6L1137.8 300.7L1133.6 298"/><path fill="url(#g83)" d="M1213.6 180.6L1136.5 296L1132.5 293.2"/><path fill="url(#g84)" d="M1213.6 180.6L1135.3 291.4L1131.4 288.6"/><path fill="url(#g85)" d="M1213.6 180.6L1134.1 287.1L1130.4 284.2"/><path fill="url(#g86)" d="M1213.6 180.6L1133 282.9L1129.4 280"/><path fill="url(#g87)" d="M1213.6 180.6L1131.9 278.9L1128.4 275.9"/><path fill="url(#g88)" d="M1213.6 180.6L1130.8 275L1127.5 272"/><path fill="url(#g89)" d="M1213.6 180.6L1129.8 271.3L1126.6 268.2"/><path fill="url(#g90)" d="M1213.6 180.6L1128.8 267.6L1125.8 264.6"/><path fill="url(#g91)" d="M1213.6 180.6L1127.9 264.1L1125 261"/><path fill="url(#g92)" d="M1213.6 180.6L1126.9 260.7L1124.2 257.6"/><path fill="url(#g93)" d="M1213.6 180.6L1126 257.4L1123.4 254.2"/><path fill="url(#g94)" d="M1213.6 180.6L1125.2 254.1L1122.6 251"/><path fill="url(#g95)" d="M1213.6 180.6L1124.3 251L1121.9 247.8"/><path fill="url(#g96)" d="M1213.6 180.6L1123.5 247.9L1121.2 244.7"/><path fill="url(#g97)" d="M1213.6 180.6L1122.7 244.9L1120.5 241.6"/><path fill="url(#g98)" d="M1213.6 180.6L1121.9 241.9L1119.8 238.6"/><path fill="url(#g99)" d="M1213.6 180.6L1121.1 239L1119.1 235.7"/><path fill="url(#g100)" d="M1213.6 180.6L1120.3 236.1L1118.4 232.8"/><path fill="url(#g101)" d="M1213.6 180.6L1119.6 233.2L1117.8 229.9"/><path fill="url(#g102)" d="M1213.6 180.6L1118.8 230.4L1117.1 227.1"/><path fill="url(#g103)" d="M1213.6 180.6L1118.1 227.7L1116.5 224.3"/><path fill="url(#g104)" d="M1213.6 180.6L1117.4 224.9L1115.9 221.5"/><path fill="url(#g105)" d="M1213.6 180.6L1116.7 222.2L1115.3 218.8"/><path fill="url(#g106)" d="M1213.6 180.6L1116 219.5L1114.7 216.1"/><path fill="url(#g107)" d="M1213.6 180.6L1115.3 216.9L1114.1 213.4"/><path fill="url(#g108)" d="M1213.6 180.6L1114.6 214.2L1113.5 210.7"/><path fill="url(#g109)" d="M1213.6 180.6L1114 211.5L1112.9 208"/><path fill="url(#g110)" d="M1213.6 180.6L1113.3 208.9L1112.3 205.3"/><path fill="url(#g111)" d="M1213.6 180.6L1112.6 206.2L1111.8 202.7"/><path fill="url(#g112)" d="M1213.6 180.6L1112 203.6L1111.2 200"/><path fill="url(#g113)" d="M1213.6 180.6L1111.3 200.9L1110.6 197.3"/><path fill="url(#g114)" d="M1213.6 180.6L1110.6 198.3L1110.1 194.6"/><path fill="url(#g115)" d="M1213.6 180.6L1110 195.6L1109.5 191.9"/><path fill="url(#g116)" d="M1213.6 180.6L1109.3 192.9L1108.9 189.2"/><path fill="url(#g117)" d="M1213.6 180.6L1108.7 190.2L1108.4 186.5"/><path fill="url(#g118)" d="M1213.6 180.6L1108 187.5L1107.8 183.8"/><path fill="url(#g119)" d="M1213.6 180.6L1107.3 184.8L1107.2 181"/><path fill="url(#g120)" d="M1213.6 180.6L1106.7 182L1106.7 178.2"/><path fill="url(#g121)" d="M1213.6 180.6L1106 179.2L1106.1 175.4"/><path fill="url(#g122)" d="M1213.6 180.6L1105.3 176.3L1105.5 172.5"/><path fill="url(#g123)" d="M1213.6 180.6L1104.6 173.5L1104.9 169.6"/><path fill="url(#g124)" d="M1213.6 180.6L1103.9 170.5L1104.4 166.6"/><path fill="url(#g125)" d="M1213.6 180.6L1103.2 167.5L1103.8 163.6"/><path fill="url(#g126)" d="M1213.6 180.6L1102.5 164.5L1103.1 160.6"/><path fill="url(#g127)" d="M1213.6 180.6L1101.8 161.4L1102.5 157.4"/><path fill="url(#g128)" d="M1213.6 180.6L1101 158.2L1101.9 154.2"/><path fill="url(#g129)" d="M1213.6 180.6L1100.3 155L1101.3 151"/><path fill="url(#g130)" d="M1213.6 180.6L1099.5 151.6L1100.6 147.6"/><path fill="url(#g131)" d="M1213.6 180.6L1098.7 148.2L1099.9 144.2"/><path fill="url(#g132)" d="M1213.6 180.6L1097.9 144.7L1099.2 140.6"/><path fill="url(#g133)" d="M1213.6 180.6L1097.1 141L1098.5 136.9"/><path fill="url(#g134)" d="M1213.6 180.6L1096.2 137.3L1097.8 133.2"/><path fill="url(#g135)" d="M1213.6 180.6L1095.3 133.4L1097 129.2"/><path fill="url(#g136)" d="M1213.6 180.6L1094.4 129.4L1096.2 125.2"/><path fill="url(#g137)" d="M1213.6 180.6L1093.4 125.2L1095.4 121"/><path fill="url(#g138)" d="M1213.6 180.6L1092.4 120.8L1094.6 116.6"/><path fill="url(#g139)" d="M1213.6 180.6L1091.3 116.3L1093.7 112"/><path fill="url(#g140)" d="M1213.6 180.6L1090.2 111.5L1092.7 107.2"/><path fill="url(#g141)" d="M1213.6 180.6L1089 106.5L1091.7 102.1"/><path fill="url(#g142)" d="M1213.6 180.6L1087.8 101.2L1090.7 96.8"/><path fill="url(#g143)" d="M1213.6 180.6L1086.5 95.7L1089.6 91.2"/><path fill="url(#g144)" d="M1213.6 180.6L1085.2 89.8L1088.4 85.3"/><path fill="url(#g145)" d="M1213.6 180.6L1083.7 83.6L1087.2 79.1"/><path fill="url(#g146)" d="M1213.6 180.6L1082.1 76.9L1085.9 72.4"/><path fill="url(#g147)" d="M1213.6 180.6L1081.4 70.7L1085.4 66.1"/><path fill="url(#g148)" d="M1213.6 180.6L1088.9 71.2L1092.8 66.9"/><path fill="url(#g149)" d="M1213.6 180.6L1095.8 71.7L1099.7 67.6"/><path fill="url(#g150)" d="M1213.6 180.6L1102.3 72.2L1106.2 68.3"/><path fill="url(#g151)" d="M1213.6 180.6L1108.4 72.6L1112.3 69"/><path fill="url(#g152)" d="M1213.6 180.6L1114.2 73L1118 69.6"/><path fill="url(#g153)" d="M1213.6 180.6L1119.6 73.4L1123.4 70.1"/><path fill="url(#g154)" d="M1213.6 180.6L1124.7 73.8L1128.6 70.7"/><path fill="url(#g155)" d="M1213.6 180.6L1129.6 74.1L1133.5 71.2"/><path fill="url(#g156)" d="M1213.6 180.6L1134.3 74.4L1138.1 71.7"/><path fill="url(#g157)" d="M1213.6 180.6L1138.8 74.7L1142.6 72.1"/><path fill="url(#g158)" d="M1213.6 180.6L1143.1 75L1146.8 72.6"/><path fill="url(#g159)" d="M1213.6 180.6L1147.2 75.3L1150.9 73"/><path fill="url(#g160)" d="M1213.6 180.6L1151.1 75.6L1154.9 73.4"/><path fill="url(#g161)" d="M1213.6 180.6L1154.9 75.8L1158.7 73.8"/><path fill="url(#g162)" d="M1213.6 180.6L1158.6 76.1L1162.3 74.2"/><path fill="url(#g163)" d="M1213.6 180.6L1162.2 76.3L1165.9 74.6"/><path fill="url(#g164)" d="M1213.6 180.6L1165.6 76.6L1169.3 74.9"/><path fill="url(#g165)" d="M1213.6 180.6L1169 76.8L1172.7 75.3"/><path fill="url(#g166)" d="M1213.6 180.6L1172.3 77L1176 75.6"/><path fill="url(#g167)" d="M1213.6 180.6L1175.5 77.2L1179.1 76"/><path fill="url(#g168)" d="M1213.6 180.6L1178.6 77.5L1182.3 76.3"/><path fill="url(#g169)" d="M1213.6 180.6L1181.6 77.7L1185.3 76.6"/><path fill="url(#g170)" d="M1213.6 180.6L1184.6 77.9L1188.3 76.9"/><path fill="url(#g171)" d="M1213.6 180.6L1187.6 78.1L1191.2 77.2"/><path fill="url(#g172)" d="M1213.6 180.6L1190.5 78.3L1194.1 77.6"/><path fill="url(#g173)" d="M1213.6 180.6L1193.3 78.5L1196.9 77.9"/><path fill="url(#g174)" d="M1213.6 180.6L1196.1 78.7L1199.7 78.2"/><path fill="url(#g175)" d="M1213.6 180.6L1198.9 78.9L1202.5 78.5"/><path fill="url(#g176)" d="M1213.6 180.6L1201.6 79.2L1205.2 78.8"/><path fill="url(#g177)" d="M1213.6 180.6L1204.3 79.4L1207.9 79.1"/><path fill="url(#g178)" d="M1213.6 180.6L1207 79.6L1210.6 79.4"/><path fill="url(#g179)" d="M1213.6 180.6L1209.6 79.8L1213.2 79.7"/><path fill="url(#g180)" d="M1213.6 180.6L1212.3 80L1215.8 80"/><path fill="url(#g181)" d="M1213.6 180.6L1214.9 80.2L1218.5 80.3"/><path fill="url(#g182)" d="M1213.6 180.6L1217.5 80.5L1221.1 80.7"/><path fill="url(#g183)" d="M1213.6 180.6L1220.2 80.7L1223.7 81"/><path fill="url(#g184)" d="M1213.6 180.6L1222.8 80.9L1226.3 81.3"/><path fill="url(#g185)" d="M1213.6 180.6L1225.4 81.1L1228.9 81.6"/><path fill="url(#g186)" d="M1213.6 180.6L1228 81.4L1231.5 81.9"/><path fill="url(#g187)" d="M1213.6 180.6L1230.6 81.6L1234.1 82.3"/><path fill="url(#g188)" d="M1213.6 180.6L1233.2 81.9L1236.7 82.6"/><path fill="url(#g189)" d="M1213.6 180.6L1235.9 82.1L1239.4 83"/><path fill="url(#g190)" d="M1213.6 180.6L1238.6 82.4L1242 83.3"/><path fill="url(#g191)" d="M1213.6 180.6L1241.2 82.6L1244.7 83.7"/><path fill="url(#g192)" d="M1213.6 180.6L1243.9 82.9L1247.4 84"/><path fill="url(#g193)" d="M1213.6 180.6L1246.7 83.1L1250.1 84.4"/><path fill="url(#g194)" d="M1213.6 180.6L1249.5 83.4L1252.9 84.8"/><path fill="url(#g195)" d="M1213.6 180.6L1252.3 83.7L1255.7 85.1"/><path fill="url(#g196)" d="M1213.6 180.6L1255.1 84L1258.5 85.5"/><path fill="url(#g197)" d="M1213.6 180.6L1258 84.3L1261.4 85.9"/><path fill="url(#g198)" d="M1213.6 180.6L1260.9 84.6L1264.3 86.3"/><path fill="url(#g199)" d="M1213.6 180.6L1263.9 84.9L1267.3 86.8"/><path fill="url(#g200)" d="M1213.6 180.6L1267 85.2L1270.3 87.2"/><path fill="url(#g201)" d="M1213.6 180.6L1270.1 85.6L1273.5 87.6"/><path fill="url(#g202)" d="M1213.6 180.6L1273.4 85.9L1276.7 88.1"/><path fill="url(#g203)" d="M1213.6 180.6L1276.6 86.3L1279.9 88.5"/><path fill="url(#g204)" d="M1213.6 180.6L1280 86.6L1283.3 89"/><path fill="url(#g205)" d="M1213.6 180.6L1283.5 87L1286.8 89.5"/><path fill="url(#g206)" d="M1213.6 180.6L1287.1 87.4L1290.3 90"/><path fill="url(#g207)" d="M1213.6 180.6L1290.8 87.8L1294 90.6"/><path fill="url(#g208)" d="M1213.6 180.6L1294.6 88.2L1297.9 91.1"/><path fill="url(#g209)" d="M1213.6 180.6L1298.6 88.6L1301.8 91.7"/><path fill="url(#g210)" d="M1213.6 180.6L1302.8 89.1L1306 92.3"/><path fill="url(#g211)" d="M1213.6 180.6L1307.1 89.5L1310.2 92.9"/><path fill="url(#g212)" d="M1213.6 180.6L1311.6 90L1314.7 93.5"/><path fill="url(#g213)" d="M1213.6 180.6L1316.3 90.5L1319.4 94.2"/><path fill="url(#g214)" d="M1213.6 180.6L1321.3 91L1324.4 94.9"/><path fill="url(#g215)" d="M1213.6 180.6L1326.5 91.6L1329.6 95.6"/><path fill="url(#g216)" d="M1213.6 180.6L1332 92.2L1335.1 96.4"/><path fill="url(#g217)" d="M1213.6 180.6L1337.9 92.8L1340.9 97.2"/><path fill="url(#g218)" d="M1213.6 180.6L1344.1 93.4L1347.1 98.1"/><path fill="url(#g219)" d="M1213.6 180.6L1350.7 94.1L1353.6 99"/><path fill="url(#g220)" d="M1213.6 180.6L1357.7 94.8L1360.7 100"/><path fill="url(#g221)" d="M1213.6 180.6L1365.3 95.6L1368.2 101"/><path fill="url(#g222)" d="M1213.6 180.6L1373.5 96.4L1376.4 102.2"/><path fill="url(#g223)" d="M1213.6 180.6L1382.4 97.3L1385.3 103.4"/><path fill="url(#g224)" d="M1213.6 180.6L1392.1 98.3L1394.9 104.7"/><path fill="url(#g225)" d="M1213.6 180.6L1402.7 99.3L1405.5 106.1"/><path fill="url(#g226)" d="M1213.6 180.6L1414.4 100.5L1417.1 107.6"/><path fill="url(#g227)" d="M1213.6 180.6L1427.3 101.7L1430 109.3"/><path fill="url(#g228)" d="M1213.6 180.6L1441.8 103.1L1444.4 111.2"/><path fill="url(#g229)" d="M1213.6 180.6L1458.1 104.7L1460.6 113.4"/><path fill="url(#g230)" d="M1213.6 180.6L1476.6 106.4L1479 115.8"/><path fill="url(#g231)" d="M1213.6 180.6L1497.8 108.4L1500.2 118.5"/><path fill="url(#g232)" d="M1213.6 180.6L1522.5 110.7L1524.7 121.7"/><path fill="url(#g233)" d="M1213.6 180.6L1551.5 113.4L1553.7 125.4"/><path fill="url(#g234)" d="M1213.6 180.6L1586.2 116.6L1588.3 129.8"/><path fill="url(#g235)" d="M1213.6 180.6L1593.9 125.5L1595.6 138.9"/><path fill="url(#g236)" d="M1213.6 180.6L1581.2 137.1L1582.5 150.1"/><path fill="url(#g237)" d="M1213.6 180.6L1569.4 147.9L1570.4 160.5"/><path fill="url(#g238)" d="M1213.6 180.6L1558.5 158L1559 170.2"/><path fill="url(#g239)" d="M1213.6 180.6L1548.2 167.4L1548.4 179.3"/></g></g></g></svg>
<div class="a" style="left:1009.6px;top:76px;width:618.4px;height:1px;background:#a2a2a2;"></div>
<div class="a" style="left:1009.6px;top:553px;width:618.4px;height:1px;background:#a2a2a2;"></div>
<div class="a" style="left:1009px;top:76.8px;width:1px;height:476.3px;background:#a2a2a2;"></div>
<div class="a" style="left:1628px;top:76.8px;width:1px;height:476.3px;background:#a2a2a2;"></div>
<div class="a" style="left:1009px;top:553.1px;width:2px;height:6px;background:#c8c8c8;"></div>
<div class="t " style="left:1006.05px;top:561.8px;font-size:14.3px;line-height:14.3px;transform:scaleX(0.970);transform-origin:0 50%;color:#d6d6d6;">0</div>
<div class="a" style="left:1003.6px;top:552px;width:6px;height:2px;background:#c8c8c8;"></div>
<div class="t " style="left:996.39px;top:547.1px;font-size:14.3px;line-height:14.3px;transform:scaleX(0.970);transform-origin:0 50%;color:#d6d6d6;">0</div>
<div class="a" style="left:1061px;top:553.1px;width:1px;height:6px;background:#c8c8c8;"></div>
<div class="t " style="left:1047.94px;top:561.8px;font-size:14.3px;line-height:14.3px;transform:scaleX(0.970);transform-origin:0 50%;color:#d6d6d6;">0,05</div>
<div class="a" style="left:1003.6px;top:512px;width:6px;height:2px;background:#c8c8c8;"></div>
<div class="t " style="left:977.18px;top:507.49px;font-size:14.3px;line-height:14.3px;transform:scaleX(0.970);transform-origin:0 50%;color:#d6d6d6;">0,05</div>
<div class="a" style="left:1112px;top:553.1px;width:2px;height:6px;background:#c8c8c8;"></div>
<div class="t " style="left:1103.31px;top:561.8px;font-size:14.3px;line-height:14.3px;transform:scaleX(0.970);transform-origin:0 50%;color:#d6d6d6;">0,1</div>
<div class="a" style="left:1003.6px;top:473px;width:6px;height:2px;background:#c8c8c8;"></div>
<div class="t " style="left:984.94px;top:467.88px;font-size:14.3px;line-height:14.3px;transform:scaleX(0.970);transform-origin:0 50%;color:#d6d6d6;">0,1</div>
<div class="a" style="left:1164px;top:553.1px;width:1px;height:6px;background:#c8c8c8;"></div>
<div class="t " style="left:1150.92px;top:561.8px;font-size:14.3px;line-height:14.3px;transform:scaleX(0.970);transform-origin:0 50%;color:#d6d6d6;">0,15</div>
<div class="a" style="left:1003.6px;top:433px;width:6px;height:2px;background:#c8c8c8;"></div>
<div class="t " style="left:977.18px;top:428.27px;font-size:14.3px;line-height:14.3px;transform:scaleX(0.970);transform-origin:0 50%;color:#d6d6d6;">0,15</div>
<div class="a" style="left:1215px;top:553.1px;width:2px;height:6px;background:#c8c8c8;"></div>
<div class="t " style="left:1206.29px;top:561.8px;font-size:14.3px;line-height:14.3px;transform:scaleX(0.970);transform-origin:0 50%;color:#d6d6d6;">0,2</div>
<div class="a" style="left:1003.6px;top:394px;width:6px;height:1px;background:#c8c8c8;"></div>
<div class="t " style="left:984.94px;top:388.66px;font-size:14.3px;line-height:14.3px;transform:scaleX(0.970);transform-origin:0 50%;color:#d6d6d6;">0,2</div>
<div class="a" style="left:1267px;top:553.1px;width:1px;height:6px;background:#c8c8c8;"></div>
<div class="t " style="left:1253.9px;top:561.8px;font-size:14.3px;line-height:14.3px;transform:scaleX(0.970);transform-origin:0 50%;color:#d6d6d6;">0,25</div>
<div class="a" style="left:1003.6px;top:355px;width:6px;height:1px;background:#c8c8c8;"></div>
<div class="t " style="left:977.18px;top:349.05px;font-size:14.3px;line-height:14.3px;transform:scaleX(0.970);transform-origin:0 50%;color:#d6d6d6;">0,25</div>
<div class="a" style="left:1318px;top:553.1px;width:2px;height:6px;background:#c8c8c8;"></div>
<div class="t " style="left:1309.23px;top:561.8px;font-size:14.3px;line-height:14.3px;transform:scaleX(0.970);transform-origin:0 50%;color:#d6d6d6;">0,3</div>
<div class="a" style="left:1003.6px;top:315px;width:6px;height:1px;background:#c8c8c8;"></div>
<div class="t " style="left:984.87px;top:309.44px;font-size:14.3px;line-height:14.3px;transform:scaleX(0.970);transform-origin:0 50%;color:#d6d6d6;">0,3</div>
<div class="a" style="left:1370px;top:553.1px;width:1px;height:6px;background:#c8c8c8;"></div>
<div class="t " style="left:1356.88px;top:561.8px;font-size:14.3px;line-height:14.3px;transform:scaleX(0.970);transform-origin:0 50%;color:#d6d6d6;">0,35</div>
<div class="a" style="left:1003.6px;top:275px;width:6px;height:1px;background:#c8c8c8;"></div>
<div class="t " style="left:977.18px;top:269.83px;font-size:14.3px;line-height:14.3px;transform:scaleX(0.970);transform-origin:0 50%;color:#d6d6d6;">0,35</div>
<div class="a" style="left:1421px;top:553.1px;width:2px;height:6px;background:#c8c8c8;"></div>
<div class="t " style="left:1412.11px;top:561.8px;font-size:14.3px;line-height:14.3px;transform:scaleX(0.970);transform-origin:0 50%;color:#d6d6d6;">0,4</div>
<div class="a" style="left:1003.6px;top:236px;width:6px;height:1px;background:#c8c8c8;"></div>
<div class="t " style="left:984.67px;top:230.22px;font-size:14.3px;line-height:14.3px;transform:scaleX(0.970);transform-origin:0 50%;color:#d6d6d6;">0,4</div>
<div class="a" style="left:1473px;top:553.1px;width:1px;height:6px;background:#c8c8c8;"></div>
<div class="t " style="left:1459.86px;top:561.8px;font-size:14.3px;line-height:14.3px;transform:scaleX(0.970);transform-origin:0 50%;color:#d6d6d6;">0,45</div>
<div class="a" style="left:1003.6px;top:196px;width:6px;height:1px;background:#c8c8c8;"></div>
<div class="t " style="left:977.18px;top:190.61px;font-size:14.3px;line-height:14.3px;transform:scaleX(0.970);transform-origin:0 50%;color:#d6d6d6;">0,45</div>
<div class="a" style="left:1524px;top:553.1px;width:2px;height:6px;background:#c8c8c8;"></div>
<div class="t " style="left:1515.19px;top:561.8px;font-size:14.3px;line-height:14.3px;transform:scaleX(0.970);transform-origin:0 50%;color:#d6d6d6;">0,5</div>
<div class="a" style="left:1003.6px;top:156px;width:6px;height:1px;background:#c8c8c8;"></div>
<div class="t " style="left:984.87px;top:151px;font-size:14.3px;line-height:14.3px;transform:scaleX(0.970);transform-origin:0 50%;color:#d6d6d6;">0,5</div>
<div class="a" style="left:1576px;top:553.1px;width:1px;height:6px;background:#c8c8c8;"></div>
<div class="t " style="left:1562.84px;top:561.8px;font-size:14.3px;line-height:14.3px;transform:scaleX(0.970);transform-origin:0 50%;color:#d6d6d6;">0,55</div>
<div class="a" style="left:1003.6px;top:117px;width:6px;height:1px;background:#c8c8c8;"></div>
<div class="t " style="left:977.18px;top:111.39px;font-size:14.3px;line-height:14.3px;transform:scaleX(0.970);transform-origin:0 50%;color:#d6d6d6;">0,55</div>
<div class="a" style="left:1381.5px;top:522.2px;width:244px;height:25.8px;background:#2f2f2f;"></div>
<div class="t " style="left:1381.75px;top:525.29px;font-size:19.5px;line-height:19.5px;transform:scaleX(0.978);transform-origin:0 50%;color:#f4f4f4;white-space:pre;">Gamut Coverage:  99,3%</div>
<div class="a" style="left:1104px;top:89.5px;width:8.8px;height:8.8px;box-sizing:border-box;border-radius:50%;border:1.3px solid #000;background:#0a9e0a;"></div>
<div class="a" style="left:1104.1px;top:86.5px;width:14.6px;height:14.6px;box-sizing:border-box;border:1.7px solid #fff;"></div>
<div class="a" style="left:1213.4px;top:100.3px;width:8.8px;height:8.8px;box-sizing:border-box;border-radius:50%;border:1.3px solid #000;background:#c4bc00;"></div>
<div class="a" style="left:1213.1px;top:96.9px;width:14.6px;height:14.6px;box-sizing:border-box;border:1.7px solid #fff;"></div>
<div class="a" style="left:1511.2px;top:129.8px;width:8.8px;height:8.8px;box-sizing:border-box;border-radius:50%;border:1.3px solid #000;background:#c80808;"></div>
<div class="a" style="left:1513.7px;top:127.5px;width:14.6px;height:14.6px;box-sizing:border-box;border:1.7px solid #fff;"></div>
<div class="a" style="left:1128px;top:186px;width:8.8px;height:8.8px;box-sizing:border-box;border-radius:50%;border:1.3px solid #000;background:#10bcbc;"></div>
<div class="a" style="left:1126.7px;top:185px;width:14.6px;height:14.6px;box-sizing:border-box;border:1.7px solid #fff;"></div>
<div class="a" style="left:1341px;top:284.1px;width:8.8px;height:8.8px;box-sizing:border-box;border-radius:50%;border:1.3px solid #000;background:#b010b8;"></div>
<div class="a" style="left:1337.2px;top:284.1px;width:14.6px;height:14.6px;box-sizing:border-box;border:1.7px solid #fff;"></div>
<div class="a" style="left:1185.8px;top:420.2px;width:8.8px;height:8.8px;box-sizing:border-box;border-radius:50%;border:1.3px solid #000;background:#0808c0;"></div>
<div class="a" style="left:1183.2px;top:419.7px;width:14.6px;height:14.6px;box-sizing:border-box;border:1.7px solid #fff;"></div>
<div class="a" style="left:1206.2px;top:174.1px;width:13.6px;height:13.6px;box-sizing:border-box;border:1.8px solid #000;background:rgba(255,255,255,0.35);"></div>
<div class="a" style="left:1207.3px;top:175.1px;width:8.8px;height:8.8px;box-sizing:border-box;border-radius:50%;border:1.3px solid #000;background:none;"></div>
<div class="a" style="left:1210px;top:175.4px;width:8.8px;height:8.8px;box-sizing:border-box;border-radius:50%;border:1.3px solid #000;background:#fff;"></div>
<div class="t " style="left:38.34px;top:627.4px;font-size:28px;line-height:28px;transform:scaleX(1.042);transform-origin:0 50%;color:#f0f0f0;">Current Reading</div>
<div class="t " style="left:39.56px;top:698.76px;font-size:24.5px;line-height:24.5px;transform:scaleX(0.980);transform-origin:0 50%;color:#f0f0f0;">x: 0,3147</div>
<div class="t " style="left:190.6px;top:698.76px;font-size:24.5px;line-height:24.5px;transform:scaleX(0.997);transform-origin:0 50%;color:#f0f0f0;">y: 0,3312</div>
<div class="t " style="left:39.55px;top:738.26px;font-size:24.5px;line-height:24.5px;transform:scaleX(1.002);transform-origin:0 50%;color:#f0f0f0;">fL: 112,71</div>
<div class="t " style="left:38.78px;top:777.56px;font-size:24.5px;line-height:24.5px;transform:scaleX(1.037);transform-origin:0 50%;color:#f0f0f0;">cd/m²: 386,19</div>
<div class="t " style="left:435.32px;top:607.95px;font-size:14px;line-height:14px;transform:scaleX(0.962);transform-origin:0 50%;color:#d6d6d6;">RGB Balance</div>
<div class="a" style="left:358.9px;top:626px;width:253.2px;height:174px;background:#232323;"></div>
<div class="a" style="left:358.9px;top:626px;width:253.2px;height:1px;background:#a2a2a2;"></div>
<div class="a" style="left:353.4px;top:626px;width:5.5px;height:1px;background:#a2a2a2;"></div>
<div class="t " style="left:345.3px;top:618.73px;font-size:14.5px;line-height:14.5px;transform:scaleX(0.950);transform-origin:0 50%;color:#d6d6d6;">4</div>
<div class="a" style="left:358.9px;top:669px;width:253.2px;height:1px;background:#a2a2a2;"></div>
<div class="a" style="left:353.4px;top:669px;width:5.5px;height:1px;background:#a2a2a2;"></div>
<div class="t " style="left:345.57px;top:662.53px;font-size:14.5px;line-height:14.5px;transform:scaleX(0.950);transform-origin:0 50%;color:#d6d6d6;">2</div>
<div class="a" style="left:358.9px;top:712px;width:253.2px;height:1px;background:#a2a2a2;"></div>
<div class="a" style="left:353.4px;top:712px;width:5.5px;height:1px;background:#a2a2a2;"></div>
<div class="t " style="left:345.44px;top:705.83px;font-size:14.5px;line-height:14.5px;transform:scaleX(0.950);transform-origin:0 50%;color:#d6d6d6;">0</div>
<div class="a" style="left:358.9px;top:756px;width:253.2px;height:1px;background:#a2a2a2;"></div>
<div class="a" style="left:353.4px;top:756px;width:5.5px;height:1px;background:#a2a2a2;"></div>
<div class="t " style="left:340.96px;top:749.63px;font-size:14.5px;line-height:14.5px;transform:scaleX(0.950);transform-origin:0 50%;color:#d6d6d6;">-2</div>
<div class="a" style="left:358.9px;top:800px;width:253.2px;height:1px;background:#a2a2a2;"></div>
<div class="a" style="left:353.4px;top:800px;width:5.5px;height:1px;background:#a2a2a2;"></div>
<div class="t " style="left:340.68px;top:793.23px;font-size:14.5px;line-height:14.5px;transform:scaleX(0.950);transform-origin:0 50%;color:#d6d6d6;">-4</div>
<div class="a" style="left:358.9px;top:626px;width:253.2px;height:1px;background:#a2a2a2;"></div>
<div class="a" style="left:358px;top:626px;width:1px;height:174px;background:#a2a2a2;"></div>
<div class="a" style="left:612px;top:626px;width:1px;height:174px;background:#a2a2a2;"></div>
<div class="a" style="left:358px;top:800px;width:1px;height:6px;background:#a2a2a2;"></div>
<div class="a" style="left:612px;top:800px;width:1px;height:6px;background:#a2a2a2;"></div>
<div class="t " style="left:465.18px;top:802.43px;font-size:14.5px;line-height:14.5px;transform:scaleX(1.032);transform-origin:0 50%;color:#d6d6d6;">100W</div>
<div class="a" style="left:383px;top:712px;width:202px;height:1.4px;background:#141414;"></div>
<div class="a" style="left:383.2px;top:694px;width:67.3px;height:19.2px;box-sizing:border-box;border:1.4px solid #000;background:linear-gradient(#ff1818,#fa0000 55%,#b00000);"></div>
<div class="a" style="left:518.2px;top:712.2px;width:66.6px;height:49.6px;box-sizing:border-box;border:1.4px solid #000;background:linear-gradient(#1414ff,#0000f8 50%,#000088);"></div>
<div class="t " style="left:768.42px;top:600.15px;font-size:14px;line-height:14px;transform:scaleX(0.967);transform-origin:0 50%;color:#d6d6d6;">CIE 1931 xy</div>
<div class="a" style="left:639.8px;top:615.4px;width:331.6px;height:193.8px;background:#a8a8a8;"></div>
<svg class="a" style="left:640.8px;top:616.4px" width="329.6" height="191.8" viewBox="640.8 616.4 329.6 191.8"><defs><linearGradient id="z0" gradientUnits="userSpaceOnUse" x1="805" y1="711.5" x2="1065" y2="711.5"><stop offset="0" stop-color="#ffffff"/><stop offset="0.25" stop-color="#ffd9d9"/><stop offset="0.5" stop-color="#ffbabb"/><stop offset="0.75" stop-color="#ffa2a2"/><stop offset="1" stop-color="#ff8e8e"/></linearGradient><linearGradient id="z1" gradientUnits="userSpaceOnUse" x1="805" y1="711.5" x2="1064.6" y2="725.1"><stop offset="0" stop-color="#ffffff"/><stop offset="0.25" stop-color="#ffd7d9"/><stop offset="0.5" stop-color="#ffb7bb"/><stop offset="0.75" stop-color="#ff9ea3"/><stop offset="1" stop-color="#ff8990"/></linearGradient><linearGradient id="z2" gradientUnits="userSpaceOnUse" x1="805" y1="711.5" x2="1063.6" y2="738.7"><stop offset="0" stop-color="#ffffff"/><stop offset="0.25" stop-color="#ffd5d9"/><stop offset="0.5" stop-color="#ffb4bc"/><stop offset="0.75" stop-color="#ff9aa5"/><stop offset="1" stop-color="#ff8491"/></linearGradient><linearGradient id="z3" gradientUnits="userSpaceOnUse" x1="805" y1="711.5" x2="1061.8" y2="752.2"><stop offset="0" stop-color="#ffffff"/><stop offset="0.25" stop-color="#ffd3da"/><stop offset="0.5" stop-color="#ffb1bd"/><stop offset="0.75" stop-color="#ff96a6"/><stop offset="1" stop-color="#ff8093"/></linearGradient><linearGradient id="z4" gradientUnits="userSpaceOnUse" x1="805" y1="711.5" x2="1059.3" y2="765.6"><stop offset="0" stop-color="#ffffff"/><stop offset="0.25" stop-color="#ffd2db"/><stop offset="0.5" stop-color="#ffaebe"/><stop offset="0.75" stop-color="#ff92a8"/><stop offset="1" stop-color="#ff7b95"/></linearGradient><linearGradient id="z5" gradientUnits="userSpaceOnUse" x1="805" y1="711.5" x2="1056.1" y2="778.8"><stop offset="0" stop-color="#ffffff"/><stop offset="0.25" stop-color="#ffd0db"/><stop offset="0.5" stop-color="#ffacc0"/><stop offset="0.75" stop-color="#ff8faa"/><stop offset="1" stop-color="#ff7798"/></linearGradient><linearGradient id="z6" gradientUnits="userSpaceOnUse" x1="805" y1="711.5" x2="1052.3" y2="791.8"><stop offset="0" stop-color="#ffffff"/><stop offset="0.25" stop-color="#ffcfdc"/><stop offset="0.5" stop-color="#ffa9c1"/><stop offset="0.75" stop-color="#ff8cab"/><stop offset="1" stop-color="#ff749a"/></linearGradient><linearGradient id="z7" gradientUnits="userSpaceOnUse" x1="805" y1="711.5" x2="1047.7" y2="804.7"><stop offset="0" stop-color="#ffffff"/><stop offset="0.25" stop-color="#ffcddd"/><stop offset="0.5" stop-color="#ffa7c2"/><stop offset="0.75" stop-color="#ff89ae"/><stop offset="1" stop-color="#ff709c"/></linearGradient><linearGradient id="z8" gradientUnits="userSpaceOnUse" x1="805" y1="711.5" x2="1042.5" y2="817.3"><stop offset="0" stop-color="#ffffff"/><stop offset="0.25" stop-color="#ffccde"/><stop offset="0.5" stop-color="#ffa5c4"/><stop offset="0.75" stop-color="#ff86b0"/><stop offset="1" stop-color="#ff6d9f"/></linearGradient><linearGradient id="z9" gradientUnits="userSpaceOnUse" x1="805" y1="711.5" x2="1036.7" y2="829.5"><stop offset="0" stop-color="#ffffff"/><stop offset="0.25" stop-color="#ffcbdf"/><stop offset="0.5" stop-color="#ffa3c6"/><stop offset="0.75" stop-color="#ff84b2"/><stop offset="1" stop-color="#ff6aa2"/></linearGradient><linearGradient id="z10" gradientUnits="userSpaceOnUse" x1="805" y1="711.5" x2="1030.2" y2="841.5"><stop offset="0" stop-color="#ffffff"/><stop offset="0.25" stop-color="#ffcae0"/><stop offset="0.5" stop-color="#ffa2c8"/><stop offset="0.75" stop-color="#ff82b5"/><stop offset="1" stop-color="#ff67a5"/></linearGradient><linearGradient id="z11" gradientUnits="userSpaceOnUse" x1="805" y1="711.5" x2="1023.1" y2="853.1"><stop offset="0" stop-color="#ffffff"/><stop offset="0.25" stop-color="#ffcae1"/><stop offset="0.5" stop-color="#ffa0ca"/><stop offset="0.75" stop-color="#ff80b7"/><stop offset="1" stop-color="#ff65a8"/></linearGradient><linearGradient id="z12" gradientUnits="userSpaceOnUse" x1="805" y1="711.5" x2="1015.3" y2="864.3"><stop offset="0" stop-color="#ffffff"/><stop offset="0.25" stop-color="#ffc9e2"/><stop offset="0.5" stop-color="#ff9fcc"/><stop offset="0.75" stop-color="#ff7eba"/><stop offset="1" stop-color="#ff63ac"/></linearGradient><linearGradient id="z13" gradientUnits="userSpaceOnUse" x1="805" y1="711.5" x2="1007.1" y2="875.1"><stop offset="0" stop-color="#ffffff"/><stop offset="0.25" stop-color="#ffc8e3"/><stop offset="0.5" stop-color="#ff9ece"/><stop offset="0.75" stop-color="#ff7dbd"/><stop offset="1" stop-color="#ff61af"/></linearGradient><linearGradient id="z14" gradientUnits="userSpaceOnUse" x1="805" y1="711.5" x2="998.2" y2="885.5"><stop offset="0" stop-color="#ffffff"/><stop offset="0.25" stop-color="#ffc8e5"/><stop offset="0.5" stop-color="#ff9dd1"/><stop offset="0.75" stop-color="#ff7bc0"/><stop offset="1" stop-color="#ff5fb3"/></linearGradient><linearGradient id="z15" gradientUnits="userSpaceOnUse" x1="805" y1="711.5" x2="988.8" y2="895.3"><stop offset="0" stop-color="#ffffff"/><stop offset="0.25" stop-color="#ffc8e6"/><stop offset="0.5" stop-color="#ff9dd3"/><stop offset="0.75" stop-color="#ff7ac4"/><stop offset="1" stop-color="#ff5eb7"/></linearGradient><linearGradient id="z16" gradientUnits="userSpaceOnUse" x1="805" y1="711.5" x2="979" y2="904.7"><stop offset="0" stop-color="#ffffff"/><stop offset="0.25" stop-color="#ffc8e8"/><stop offset="0.5" stop-color="#ff9cd6"/><stop offset="0.75" stop-color="#ff7ac7"/><stop offset="1" stop-color="#ff5dbb"/></linearGradient><linearGradient id="z17" gradientUnits="userSpaceOnUse" x1="805" y1="711.5" x2="968.6" y2="913.6"><stop offset="0" stop-color="#ffffff"/><stop offset="0.25" stop-color="#ffc8e9"/><stop offset="0.5" stop-color="#ff9cd8"/><stop offset="0.75" stop-color="#ff79ca"/><stop offset="1" stop-color="#ff5cbf"/></linearGradient><linearGradient id="z18" gradientUnits="userSpaceOnUse" x1="805" y1="711.5" x2="957.8" y2="921.8"><stop offset="0" stop-color="#ffffff"/><stop offset="0.25" stop-color="#ffc8eb"/><stop offset="0.5" stop-color="#ff9cdb"/><stop offset="0.75" stop-color="#ff79ce"/><stop offset="1" stop-color="#ff5bc4"/></linearGradient><linearGradient id="z19" gradientUnits="userSpaceOnUse" x1="805" y1="711.5" x2="946.6" y2="929.6"><stop offset="0" stop-color="#ffffff"/><stop offset="0.25" stop-color="#ffc8ed"/><stop offset="0.5" stop-color="#ff9cde"/><stop offset="0.75" stop-color="#ff79d2"/><stop offset="1" stop-color="#ff5bc8"/></linearGradient><linearGradient id="z20" gradientUnits="userSpaceOnUse" x1="805" y1="711.5" x2="935" y2="936.7"><stop offset="0" stop-color="#ffffff"/><stop offset="0.25" stop-color="#ffc9ee"/><stop offset="0.5" stop-color="#ff9de1"/><stop offset="0.75" stop-color="#ff79d6"/><stop offset="1" stop-color="#ff5bcd"/></linearGradient><linearGradient id="z21" gradientUnits="userSpaceOnUse" x1="805" y1="711.5" x2="923" y2="943.2"><stop offset="0" stop-color="#ffffff"/><stop offset="0.25" stop-color="#ffc9f0"/><stop offset="0.5" stop-color="#ff9ee4"/><stop offset="0.75" stop-color="#ff7ada"/><stop offset="1" stop-color="#ff5bd2"/></linearGradient><linearGradient id="z22" gradientUnits="userSpaceOnUse" x1="805" y1="711.5" x2="910.8" y2="949"><stop offset="0" stop-color="#ffffff"/><stop offset="0.25" stop-color="#ffcaf2"/><stop offset="0.5" stop-color="#ff9ee7"/><stop offset="0.75" stop-color="#ff7adf"/><stop offset="1" stop-color="#ff5cd7"/></linearGradient><linearGradient id="z23" gradientUnits="userSpaceOnUse" x1="805" y1="711.5" x2="898.2" y2="954.2"><stop offset="0" stop-color="#ffffff"/><stop offset="0.25" stop-color="#ffcbf4"/><stop offset="0.5" stop-color="#ffa0eb"/><stop offset="0.75" stop-color="#ff7ce3"/><stop offset="1" stop-color="#ff5ddd"/></linearGradient><linearGradient id="z24" gradientUnits="userSpaceOnUse" x1="805" y1="711.5" x2="885.3" y2="958.8"><stop offset="0" stop-color="#ffffff"/><stop offset="0.25" stop-color="#ffccf6"/><stop offset="0.5" stop-color="#ffa1ee"/><stop offset="0.75" stop-color="#ff7de8"/><stop offset="1" stop-color="#ff5ee2"/></linearGradient><linearGradient id="z25" gradientUnits="userSpaceOnUse" x1="805" y1="711.5" x2="872.3" y2="962.6"><stop offset="0" stop-color="#ffffff"/><stop offset="0.25" stop-color="#ffcdf8"/><stop offset="0.5" stop-color="#ffa3f2"/><stop offset="0.75" stop-color="#ff7fed"/><stop offset="1" stop-color="#ff60e8"/></linearGradient><linearGradient id="z26" gradientUnits="userSpaceOnUse" x1="805" y1="711.5" x2="859.1" y2="965.8"><stop offset="0" stop-color="#ffffff"/><stop offset="0.25" stop-color="#ffcefa"/><stop offset="0.5" stop-color="#ffa4f6"/><stop offset="0.75" stop-color="#ff81f2"/><stop offset="1" stop-color="#ff62ef"/></linearGradient><linearGradient id="z27" gradientUnits="userSpaceOnUse" x1="805" y1="711.5" x2="845.7" y2="968.3"><stop offset="0" stop-color="#ffffff"/><stop offset="0.25" stop-color="#ffcffc"/><stop offset="0.5" stop-color="#ffa7f9"/><stop offset="0.75" stop-color="#ff83f7"/><stop offset="1" stop-color="#ff64f5"/></linearGradient><linearGradient id="z28" gradientUnits="userSpaceOnUse" x1="805" y1="711.5" x2="832.2" y2="970.1"><stop offset="0" stop-color="#ffffff"/><stop offset="0.25" stop-color="#ffd1fe"/><stop offset="0.5" stop-color="#ffa9fd"/><stop offset="0.75" stop-color="#ff86fc"/><stop offset="1" stop-color="#ff67fc"/></linearGradient><linearGradient id="z29" gradientUnits="userSpaceOnUse" x1="805" y1="711.5" x2="818.6" y2="971.1"><stop offset="0" stop-color="#ffffff"/><stop offset="0.25" stop-color="#fed2ff"/><stop offset="0.5" stop-color="#fdaaff"/><stop offset="0.75" stop-color="#fc88ff"/><stop offset="1" stop-color="#fb69ff"/></linearGradient><linearGradient id="z30" gradientUnits="userSpaceOnUse" x1="805" y1="711.5" x2="805" y2="971.5"><stop offset="0" stop-color="#ffffff"/><stop offset="0.25" stop-color="#fcd2ff"/><stop offset="0.5" stop-color="#f9aaff"/><stop offset="0.75" stop-color="#f688ff"/><stop offset="1" stop-color="#f46aff"/></linearGradient><linearGradient id="z31" gradientUnits="userSpaceOnUse" x1="805" y1="711.5" x2="791.4" y2="971.1"><stop offset="0" stop-color="#ffffff"/><stop offset="0.25" stop-color="#fad2ff"/><stop offset="0.5" stop-color="#f5abff"/><stop offset="0.75" stop-color="#f189ff"/><stop offset="1" stop-color="#ed6bff"/></linearGradient><linearGradient id="z32" gradientUnits="userSpaceOnUse" x1="805" y1="711.5" x2="777.8" y2="970.1"><stop offset="0" stop-color="#ffffff"/><stop offset="0.25" stop-color="#f8d2ff"/><stop offset="0.5" stop-color="#f1abff"/><stop offset="0.75" stop-color="#ec8aff"/><stop offset="1" stop-color="#e76cff"/></linearGradient><linearGradient id="z33" gradientUnits="userSpaceOnUse" x1="805" y1="711.5" x2="764.3" y2="968.3"><stop offset="0" stop-color="#ffffff"/><stop offset="0.25" stop-color="#f6d2ff"/><stop offset="0.5" stop-color="#edacff"/><stop offset="0.75" stop-color="#e68bff"/><stop offset="1" stop-color="#e06eff"/></linearGradient><linearGradient id="z34" gradientUnits="userSpaceOnUse" x1="805" y1="711.5" x2="750.9" y2="965.8"><stop offset="0" stop-color="#ffffff"/><stop offset="0.25" stop-color="#f4d3ff"/><stop offset="0.5" stop-color="#eaadff"/><stop offset="0.75" stop-color="#e18cff"/><stop offset="1" stop-color="#da70ff"/></linearGradient><linearGradient id="z35" gradientUnits="userSpaceOnUse" x1="805" y1="711.5" x2="737.7" y2="962.6"><stop offset="0" stop-color="#ffffff"/><stop offset="0.25" stop-color="#f2d3ff"/><stop offset="0.5" stop-color="#e6aeff"/><stop offset="0.75" stop-color="#dc8eff"/><stop offset="1" stop-color="#d372ff"/></linearGradient><linearGradient id="z36" gradientUnits="userSpaceOnUse" x1="805" y1="711.5" x2="724.7" y2="958.8"><stop offset="0" stop-color="#ffffff"/><stop offset="0.25" stop-color="#f0d4ff"/><stop offset="0.5" stop-color="#e2afff"/><stop offset="0.75" stop-color="#d790ff"/><stop offset="1" stop-color="#cd74ff"/></linearGradient><linearGradient id="z37" gradientUnits="userSpaceOnUse" x1="805" y1="711.5" x2="711.8" y2="954.2"><stop offset="0" stop-color="#ffffff"/><stop offset="0.25" stop-color="#eed5ff"/><stop offset="0.5" stop-color="#dfb1ff"/><stop offset="0.75" stop-color="#d292ff"/><stop offset="1" stop-color="#c777ff"/></linearGradient><linearGradient id="z38" gradientUnits="userSpaceOnUse" x1="805" y1="711.5" x2="699.2" y2="949"><stop offset="0" stop-color="#ffffff"/><stop offset="0.25" stop-color="#ecd6ff"/><stop offset="0.5" stop-color="#dbb3ff"/><stop offset="0.75" stop-color="#cd94ff"/><stop offset="1" stop-color="#c17aff"/></linearGradient><linearGradient id="z39" gradientUnits="userSpaceOnUse" x1="805" y1="711.5" x2="687" y2="943.2"><stop offset="0" stop-color="#ffffff"/><stop offset="0.25" stop-color="#ead7ff"/><stop offset="0.5" stop-color="#d8b5ff"/><stop offset="0.75" stop-color="#c997ff"/><stop offset="1" stop-color="#bb7dff"/></linearGradient><linearGradient id="z40" gradientUnits="userSpaceOnUse" x1="805" y1="711.5" x2="675" y2="936.7"><stop offset="0" stop-color="#ffffff"/><stop offset="0.25" stop-color="#e8d8ff"/><stop offset="0.5" stop-color="#d5b7ff"/><stop offset="0.75" stop-color="#c49aff"/><stop offset="1" stop-color="#b581ff"/></linearGradient><linearGradient id="z41" gradientUnits="userSpaceOnUse" x1="805" y1="711.5" x2="663.4" y2="929.6"><stop offset="0" stop-color="#ffffff"/><stop offset="0.25" stop-color="#e7d9ff"/><stop offset="0.5" stop-color="#d2b9ff"/><stop offset="0.75" stop-color="#bf9dff"/><stop offset="1" stop-color="#b085ff"/></linearGradient><linearGradient id="z42" gradientUnits="userSpaceOnUse" x1="805" y1="711.5" x2="652.2" y2="921.8"><stop offset="0" stop-color="#ffffff"/><stop offset="0.25" stop-color="#e5daff"/><stop offset="0.5" stop-color="#cfbbff"/><stop offset="0.75" stop-color="#bba0ff"/><stop offset="1" stop-color="#aa89ff"/></linearGradient><linearGradient id="z43" gradientUnits="userSpaceOnUse" x1="805" y1="711.5" x2="641.4" y2="913.6"><stop offset="0" stop-color="#ffffff"/><stop offset="0.25" stop-color="#e3dcff"/><stop offset="0.5" stop-color="#ccbeff"/><stop offset="0.75" stop-color="#b7a4ff"/><stop offset="1" stop-color="#a58dff"/></linearGradient><linearGradient id="z44" gradientUnits="userSpaceOnUse" x1="805" y1="711.5" x2="631" y2="904.7"><stop offset="0" stop-color="#ffffff"/><stop offset="0.25" stop-color="#e2ddff"/><stop offset="0.5" stop-color="#c9c1ff"/><stop offset="0.75" stop-color="#b3a8ff"/><stop offset="1" stop-color="#a092ff"/></linearGradient><linearGradient id="z45" gradientUnits="userSpaceOnUse" x1="805" y1="711.5" x2="621.2" y2="895.3"><stop offset="0" stop-color="#ffffff"/><stop offset="0.25" stop-color="#e0dfff"/><stop offset="0.5" stop-color="#c6c3ff"/><stop offset="0.75" stop-color="#afabff"/><stop offset="1" stop-color="#9b96ff"/></linearGradient><linearGradient id="z46" gradientUnits="userSpaceOnUse" x1="805" y1="711.5" x2="611.8" y2="885.5"><stop offset="0" stop-color="#ffffff"/><stop offset="0.25" stop-color="#dfe1ff"/><stop offset="0.5" stop-color="#c3c7ff"/><stop offset="0.75" stop-color="#abb0ff"/><stop offset="1" stop-color="#969cff"/></linearGradient><linearGradient id="z47" gradientUnits="userSpaceOnUse" x1="805" y1="711.5" x2="602.9" y2="875.1"><stop offset="0" stop-color="#ffffff"/><stop offset="0.25" stop-color="#dee2ff"/><stop offset="0.5" stop-color="#c1caff"/><stop offset="0.75" stop-color="#a7b4ff"/><stop offset="1" stop-color="#91a1ff"/></linearGradient><linearGradient id="z48" gradientUnits="userSpaceOnUse" x1="805" y1="711.5" x2="594.7" y2="864.3"><stop offset="0" stop-color="#ffffff"/><stop offset="0.25" stop-color="#dce4ff"/><stop offset="0.5" stop-color="#becdff"/><stop offset="0.75" stop-color="#a4b9ff"/><stop offset="1" stop-color="#8da7ff"/></linearGradient><linearGradient id="z49" gradientUnits="userSpaceOnUse" x1="805" y1="711.5" x2="586.9" y2="853.1"><stop offset="0" stop-color="#ffffff"/><stop offset="0.25" stop-color="#dbe6ff"/><stop offset="0.5" stop-color="#bcd1ff"/><stop offset="0.75" stop-color="#a1bdff"/><stop offset="1" stop-color="#88adff"/></linearGradient><linearGradient id="z50" gradientUnits="userSpaceOnUse" x1="805" y1="711.5" x2="579.8" y2="841.5"><stop offset="0" stop-color="#ffffff"/><stop offset="0.25" stop-color="#dae8ff"/><stop offset="0.5" stop-color="#bad4ff"/><stop offset="0.75" stop-color="#9ec2ff"/><stop offset="1" stop-color="#84b3ff"/></linearGradient><linearGradient id="z51" gradientUnits="userSpaceOnUse" x1="805" y1="711.5" x2="573.3" y2="829.5"><stop offset="0" stop-color="#ffffff"/><stop offset="0.25" stop-color="#d9eaff"/><stop offset="0.5" stop-color="#b8d8ff"/><stop offset="0.75" stop-color="#9bc8ff"/><stop offset="1" stop-color="#80b9ff"/></linearGradient><linearGradient id="z52" gradientUnits="userSpaceOnUse" x1="805" y1="711.5" x2="567.5" y2="817.3"><stop offset="0" stop-color="#ffffff"/><stop offset="0.25" stop-color="#d8ecff"/><stop offset="0.5" stop-color="#b6dcff"/><stop offset="0.75" stop-color="#98cdff"/><stop offset="1" stop-color="#7dc0ff"/></linearGradient><linearGradient id="z53" gradientUnits="userSpaceOnUse" x1="805" y1="711.5" x2="562.3" y2="804.7"><stop offset="0" stop-color="#ffffff"/><stop offset="0.25" stop-color="#d8efff"/><stop offset="0.5" stop-color="#b5e0ff"/><stop offset="0.75" stop-color="#95d3ff"/><stop offset="1" stop-color="#79c7ff"/></linearGradient><linearGradient id="z54" gradientUnits="userSpaceOnUse" x1="805" y1="711.5" x2="557.7" y2="791.8"><stop offset="0" stop-color="#ffffff"/><stop offset="0.25" stop-color="#d7f1ff"/><stop offset="0.5" stop-color="#b3e4ff"/><stop offset="0.75" stop-color="#93d9ff"/><stop offset="1" stop-color="#76ceff"/></linearGradient><linearGradient id="z55" gradientUnits="userSpaceOnUse" x1="805" y1="711.5" x2="553.9" y2="778.8"><stop offset="0" stop-color="#ffffff"/><stop offset="0.25" stop-color="#d6f3ff"/><stop offset="0.5" stop-color="#b2e8ff"/><stop offset="0.75" stop-color="#91dfff"/><stop offset="1" stop-color="#73d6ff"/></linearGradient><linearGradient id="z56" gradientUnits="userSpaceOnUse" x1="805" y1="711.5" x2="550.7" y2="765.6"><stop offset="0" stop-color="#ffffff"/><stop offset="0.25" stop-color="#d6f5ff"/><stop offset="0.5" stop-color="#b1edff"/><stop offset="0.75" stop-color="#8fe5ff"/><stop offset="1" stop-color="#70ddff"/></linearGradient><linearGradient id="z57" gradientUnits="userSpaceOnUse" x1="805" y1="711.5" x2="548.2" y2="752.2"><stop offset="0" stop-color="#ffffff"/><stop offset="0.25" stop-color="#d6f8ff"/><stop offset="0.5" stop-color="#b0f1ff"/><stop offset="0.75" stop-color="#8debff"/><stop offset="1" stop-color="#6de6ff"/></linearGradient><linearGradient id="z58" gradientUnits="userSpaceOnUse" x1="805" y1="711.5" x2="546.4" y2="738.7"><stop offset="0" stop-color="#ffffff"/><stop offset="0.25" stop-color="#d5faff"/><stop offset="0.5" stop-color="#aff6ff"/><stop offset="0.75" stop-color="#8cf2ff"/><stop offset="1" stop-color="#6beeff"/></linearGradient><linearGradient id="z59" gradientUnits="userSpaceOnUse" x1="805" y1="711.5" x2="545.4" y2="725.1"><stop offset="0" stop-color="#ffffff"/><stop offset="0.25" stop-color="#d5fdff"/><stop offset="0.5" stop-color="#aefaff"/><stop offset="0.75" stop-color="#8af8ff"/><stop offset="1" stop-color="#69f6ff"/></linearGradient><linearGradient id="z60" gradientUnits="userSpaceOnUse" x1="805" y1="711.5" x2="545" y2="711.5"><stop offset="0" stop-color="#ffffff"/><stop offset="0.25" stop-color="#d5ffff"/><stop offset="0.5" stop-color="#aeffff"/><stop offset="0.75" stop-color="#89ffff"/><stop offset="1" stop-color="#67ffff"/></linearGradient><linearGradient id="z61" gradientUnits="userSpaceOnUse" x1="805" y1="711.5" x2="545.4" y2="697.9"><stop offset="0" stop-color="#ffffff"/><stop offset="0.25" stop-color="#d3fffc"/><stop offset="0.5" stop-color="#abfffa"/><stop offset="0.75" stop-color="#85fff8"/><stop offset="1" stop-color="#62fff6"/></linearGradient><linearGradient id="z62" gradientUnits="userSpaceOnUse" x1="805" y1="711.5" x2="546.4" y2="684.3"><stop offset="0" stop-color="#ffffff"/><stop offset="0.25" stop-color="#d1fffa"/><stop offset="0.5" stop-color="#a7fff5"/><stop offset="0.75" stop-color="#81fff1"/><stop offset="1" stop-color="#5effee"/></linearGradient><linearGradient id="z63" gradientUnits="userSpaceOnUse" x1="805" y1="711.5" x2="548.2" y2="670.8"><stop offset="0" stop-color="#ffffff"/><stop offset="0.25" stop-color="#cffff8"/><stop offset="0.5" stop-color="#a5fff1"/><stop offset="0.75" stop-color="#7effeb"/><stop offset="1" stop-color="#5affe5"/></linearGradient><linearGradient id="z64" gradientUnits="userSpaceOnUse" x1="805" y1="711.5" x2="550.7" y2="657.4"><stop offset="0" stop-color="#ffffff"/><stop offset="0.25" stop-color="#cefff5"/><stop offset="0.5" stop-color="#a2ffed"/><stop offset="0.75" stop-color="#7bffe5"/><stop offset="1" stop-color="#57ffde"/></linearGradient><linearGradient id="z65" gradientUnits="userSpaceOnUse" x1="805" y1="711.5" x2="553.9" y2="644.2"><stop offset="0" stop-color="#ffffff"/><stop offset="0.25" stop-color="#ccfff3"/><stop offset="0.5" stop-color="#a0ffe8"/><stop offset="0.75" stop-color="#78ffdf"/><stop offset="1" stop-color="#54ffd6"/></linearGradient><linearGradient id="z66" gradientUnits="userSpaceOnUse" x1="805" y1="711.5" x2="557.7" y2="631.2"><stop offset="0" stop-color="#ffffff"/><stop offset="0.25" stop-color="#cbfff1"/><stop offset="0.5" stop-color="#9effe4"/><stop offset="0.75" stop-color="#76ffd9"/><stop offset="1" stop-color="#52ffcf"/></linearGradient><linearGradient id="z67" gradientUnits="userSpaceOnUse" x1="805" y1="711.5" x2="562.3" y2="618.3"><stop offset="0" stop-color="#ffffff"/><stop offset="0.25" stop-color="#caffef"/><stop offset="0.5" stop-color="#9cffe0"/><stop offset="0.75" stop-color="#74ffd4"/><stop offset="1" stop-color="#50ffc9"/></linearGradient><linearGradient id="z68" gradientUnits="userSpaceOnUse" x1="805" y1="711.5" x2="567.5" y2="605.7"><stop offset="0" stop-color="#ffffff"/><stop offset="0.25" stop-color="#c9ffec"/><stop offset="0.5" stop-color="#9bffdc"/><stop offset="0.75" stop-color="#72ffcf"/><stop offset="1" stop-color="#4effc2"/></linearGradient><linearGradient id="z69" gradientUnits="userSpaceOnUse" x1="805" y1="711.5" x2="573.3" y2="593.5"><stop offset="0" stop-color="#ffffff"/><stop offset="0.25" stop-color="#c8ffea"/><stop offset="0.5" stop-color="#99ffd9"/><stop offset="0.75" stop-color="#71ffca"/><stop offset="1" stop-color="#4dffbc"/></linearGradient><linearGradient id="z70" gradientUnits="userSpaceOnUse" x1="805" y1="711.5" x2="579.8" y2="581.5"><stop offset="0" stop-color="#ffffff"/><stop offset="0.25" stop-color="#c8ffe8"/><stop offset="0.5" stop-color="#98ffd5"/><stop offset="0.75" stop-color="#70ffc5"/><stop offset="1" stop-color="#4dffb6"/></linearGradient><linearGradient id="z71" gradientUnits="userSpaceOnUse" x1="805" y1="711.5" x2="586.9" y2="569.9"><stop offset="0" stop-color="#ffffff"/><stop offset="0.25" stop-color="#c7ffe7"/><stop offset="0.5" stop-color="#98ffd2"/><stop offset="0.75" stop-color="#6fffc0"/><stop offset="1" stop-color="#4cffb1"/></linearGradient><linearGradient id="z72" gradientUnits="userSpaceOnUse" x1="805" y1="711.5" x2="594.7" y2="558.7"><stop offset="0" stop-color="#ffffff"/><stop offset="0.25" stop-color="#c7ffe5"/><stop offset="0.5" stop-color="#97ffcf"/><stop offset="0.75" stop-color="#6fffbc"/><stop offset="1" stop-color="#4cffac"/></linearGradient><linearGradient id="z73" gradientUnits="userSpaceOnUse" x1="805" y1="711.5" x2="602.9" y2="547.9"><stop offset="0" stop-color="#ffffff"/><stop offset="0.25" stop-color="#c6ffe3"/><stop offset="0.5" stop-color="#97ffcb"/><stop offset="0.75" stop-color="#6fffb8"/><stop offset="1" stop-color="#4dffa7"/></linearGradient><linearGradient id="z74" gradientUnits="userSpaceOnUse" x1="805" y1="711.5" x2="611.8" y2="537.5"><stop offset="0" stop-color="#ffffff"/><stop offset="0.25" stop-color="#c6ffe1"/><stop offset="0.5" stop-color="#97ffc9"/><stop offset="0.75" stop-color="#6fffb4"/><stop offset="1" stop-color="#4dffa2"/></linearGradient><linearGradient id="z75" gradientUnits="userSpaceOnUse" x1="805" y1="711.5" x2="621.2" y2="527.7"><stop offset="0" stop-color="#ffffff"/><stop offset="0.25" stop-color="#c6ffe0"/><stop offset="0.5" stop-color="#97ffc6"/><stop offset="0.75" stop-color="#70ffb0"/><stop offset="1" stop-color="#4eff9e"/></linearGradient><linearGradient id="z76" gradientUnits="userSpaceOnUse" x1="805" y1="711.5" x2="631" y2="518.3"><stop offset="0" stop-color="#ffffff"/><stop offset="0.25" stop-color="#c6ffde"/><stop offset="0.5" stop-color="#98ffc3"/><stop offset="0.75" stop-color="#71ffad"/><stop offset="1" stop-color="#50ff99"/></linearGradient><linearGradient id="z77" gradientUnits="userSpaceOnUse" x1="805" y1="711.5" x2="641.4" y2="509.4"><stop offset="0" stop-color="#ffffff"/><stop offset="0.25" stop-color="#c7ffdd"/><stop offset="0.5" stop-color="#98ffc1"/><stop offset="0.75" stop-color="#72ffa9"/><stop offset="1" stop-color="#51ff95"/></linearGradient><linearGradient id="z78" gradientUnits="userSpaceOnUse" x1="805" y1="711.5" x2="652.2" y2="501.2"><stop offset="0" stop-color="#ffffff"/><stop offset="0.25" stop-color="#c7ffdb"/><stop offset="0.5" stop-color="#99ffbe"/><stop offset="0.75" stop-color="#73ffa6"/><stop offset="1" stop-color="#53ff92"/></linearGradient><linearGradient id="z79" gradientUnits="userSpaceOnUse" x1="805" y1="711.5" x2="663.4" y2="493.4"><stop offset="0" stop-color="#ffffff"/><stop offset="0.25" stop-color="#c8ffda"/><stop offset="0.5" stop-color="#9bffbc"/><stop offset="0.75" stop-color="#75ffa3"/><stop offset="1" stop-color="#56ff8e"/></linearGradient><linearGradient id="z80" gradientUnits="userSpaceOnUse" x1="805" y1="711.5" x2="675" y2="486.3"><stop offset="0" stop-color="#ffffff"/><stop offset="0.25" stop-color="#c8ffd9"/><stop offset="0.5" stop-color="#9cffba"/><stop offset="0.75" stop-color="#77ffa1"/><stop offset="1" stop-color="#58ff8b"/></linearGradient><linearGradient id="z81" gradientUnits="userSpaceOnUse" x1="805" y1="711.5" x2="687" y2="479.8"><stop offset="0" stop-color="#ffffff"/><stop offset="0.25" stop-color="#c9ffd8"/><stop offset="0.5" stop-color="#9dffb8"/><stop offset="0.75" stop-color="#79ff9e"/><stop offset="1" stop-color="#5bff88"/></linearGradient><linearGradient id="z82" gradientUnits="userSpaceOnUse" x1="805" y1="711.5" x2="699.2" y2="474"><stop offset="0" stop-color="#ffffff"/><stop offset="0.25" stop-color="#caffd7"/><stop offset="0.5" stop-color="#9fffb7"/><stop offset="0.75" stop-color="#7cff9c"/><stop offset="1" stop-color="#5eff86"/></linearGradient><linearGradient id="z83" gradientUnits="userSpaceOnUse" x1="805" y1="711.5" x2="711.8" y2="468.8"><stop offset="0" stop-color="#ffffff"/><stop offset="0.25" stop-color="#cbffd6"/><stop offset="0.5" stop-color="#a1ffb5"/><stop offset="0.75" stop-color="#7fff9a"/><stop offset="1" stop-color="#62ff83"/></linearGradient><linearGradient id="z84" gradientUnits="userSpaceOnUse" x1="805" y1="711.5" x2="724.7" y2="464.2"><stop offset="0" stop-color="#ffffff"/><stop offset="0.25" stop-color="#ccffd5"/><stop offset="0.5" stop-color="#a4ffb4"/><stop offset="0.75" stop-color="#82ff98"/><stop offset="1" stop-color="#66ff81"/></linearGradient><linearGradient id="z85" gradientUnits="userSpaceOnUse" x1="805" y1="711.5" x2="737.7" y2="460.4"><stop offset="0" stop-color="#ffffff"/><stop offset="0.25" stop-color="#ceffd5"/><stop offset="0.5" stop-color="#a6ffb3"/><stop offset="0.75" stop-color="#85ff96"/><stop offset="1" stop-color="#6aff7f"/></linearGradient><linearGradient id="z86" gradientUnits="userSpaceOnUse" x1="805" y1="711.5" x2="750.9" y2="457.2"><stop offset="0" stop-color="#ffffff"/><stop offset="0.25" stop-color="#cfffd4"/><stop offset="0.5" stop-color="#a9ffb2"/><stop offset="0.75" stop-color="#89ff95"/><stop offset="1" stop-color="#6eff7d"/></linearGradient><linearGradient id="z87" gradientUnits="userSpaceOnUse" x1="805" y1="711.5" x2="764.3" y2="454.7"><stop offset="0" stop-color="#ffffff"/><stop offset="0.25" stop-color="#d1ffd4"/><stop offset="0.5" stop-color="#abffb1"/><stop offset="0.75" stop-color="#8cff94"/><stop offset="1" stop-color="#73ff7c"/></linearGradient><linearGradient id="z88" gradientUnits="userSpaceOnUse" x1="805" y1="711.5" x2="777.8" y2="452.9"><stop offset="0" stop-color="#ffffff"/><stop offset="0.25" stop-color="#d2ffd3"/><stop offset="0.5" stop-color="#aeffb0"/><stop offset="0.75" stop-color="#90ff93"/><stop offset="1" stop-color="#77ff7a"/></linearGradient><linearGradient id="z89" gradientUnits="userSpaceOnUse" x1="805" y1="711.5" x2="791.4" y2="451.9"><stop offset="0" stop-color="#ffffff"/><stop offset="0.25" stop-color="#d4ffd3"/><stop offset="0.5" stop-color="#b2ffb0"/><stop offset="0.75" stop-color="#95ff92"/><stop offset="1" stop-color="#7dff79"/></linearGradient><linearGradient id="z90" gradientUnits="userSpaceOnUse" x1="805" y1="711.5" x2="805" y2="451.5"><stop offset="0" stop-color="#ffffff"/><stop offset="0.25" stop-color="#d6ffd3"/><stop offset="0.5" stop-color="#b5ffaf"/><stop offset="0.75" stop-color="#99ff91"/><stop offset="1" stop-color="#82ff78"/></linearGradient><linearGradient id="z91" gradientUnits="userSpaceOnUse" x1="805" y1="711.5" x2="818.6" y2="451.9"><stop offset="0" stop-color="#ffffff"/><stop offset="0.25" stop-color="#d8ffd3"/><stop offset="0.5" stop-color="#b8ffaf"/><stop offset="0.75" stop-color="#9eff91"/><stop offset="1" stop-color="#88ff78"/></linearGradient><linearGradient id="z92" gradientUnits="userSpaceOnUse" x1="805" y1="711.5" x2="832.2" y2="452.9"><stop offset="0" stop-color="#ffffff"/><stop offset="0.25" stop-color="#daffd3"/><stop offset="0.5" stop-color="#bcffaf"/><stop offset="0.75" stop-color="#a3ff91"/><stop offset="1" stop-color="#8eff77"/></linearGradient><linearGradient id="z93" gradientUnits="userSpaceOnUse" x1="805" y1="711.5" x2="845.7" y2="454.7"><stop offset="0" stop-color="#ffffff"/><stop offset="0.25" stop-color="#ddffd3"/><stop offset="0.5" stop-color="#c0ffaf"/><stop offset="0.75" stop-color="#a8ff91"/><stop offset="1" stop-color="#94ff77"/></linearGradient><linearGradient id="z94" gradientUnits="userSpaceOnUse" x1="805" y1="711.5" x2="859.1" y2="457.2"><stop offset="0" stop-color="#ffffff"/><stop offset="0.25" stop-color="#dfffd4"/><stop offset="0.5" stop-color="#c4ffb0"/><stop offset="0.75" stop-color="#aeff91"/><stop offset="1" stop-color="#9bff78"/></linearGradient><linearGradient id="z95" gradientUnits="userSpaceOnUse" x1="805" y1="711.5" x2="872.3" y2="460.4"><stop offset="0" stop-color="#ffffff"/><stop offset="0.25" stop-color="#e1ffd4"/><stop offset="0.5" stop-color="#c9ffb0"/><stop offset="0.75" stop-color="#b4ff92"/><stop offset="1" stop-color="#a2ff78"/></linearGradient><linearGradient id="z96" gradientUnits="userSpaceOnUse" x1="805" y1="711.5" x2="885.3" y2="464.2"><stop offset="0" stop-color="#ffffff"/><stop offset="0.25" stop-color="#e4ffd5"/><stop offset="0.5" stop-color="#cdffb1"/><stop offset="0.75" stop-color="#baff93"/><stop offset="1" stop-color="#a9ff79"/></linearGradient><linearGradient id="z97" gradientUnits="userSpaceOnUse" x1="805" y1="711.5" x2="898.2" y2="468.8"><stop offset="0" stop-color="#ffffff"/><stop offset="0.25" stop-color="#e6ffd5"/><stop offset="0.5" stop-color="#d2ffb2"/><stop offset="0.75" stop-color="#c0ff94"/><stop offset="1" stop-color="#b1ff7a"/></linearGradient><linearGradient id="z98" gradientUnits="userSpaceOnUse" x1="805" y1="711.5" x2="910.8" y2="474"><stop offset="0" stop-color="#ffffff"/><stop offset="0.25" stop-color="#e9ffd6"/><stop offset="0.5" stop-color="#d7ffb3"/><stop offset="0.75" stop-color="#c7ff95"/><stop offset="1" stop-color="#b9ff7b"/></linearGradient><linearGradient id="z99" gradientUnits="userSpaceOnUse" x1="805" y1="711.5" x2="923" y2="479.8"><stop offset="0" stop-color="#ffffff"/><stop offset="0.25" stop-color="#ecffd7"/><stop offset="0.5" stop-color="#dbffb4"/><stop offset="0.75" stop-color="#cdff97"/><stop offset="1" stop-color="#c1ff7d"/></linearGradient><linearGradient id="z100" gradientUnits="userSpaceOnUse" x1="805" y1="711.5" x2="935" y2="486.3"><stop offset="0" stop-color="#ffffff"/><stop offset="0.25" stop-color="#efffd8"/><stop offset="0.5" stop-color="#e1ffb6"/><stop offset="0.75" stop-color="#d4ff99"/><stop offset="1" stop-color="#caff7f"/></linearGradient><linearGradient id="z101" gradientUnits="userSpaceOnUse" x1="805" y1="711.5" x2="946.6" y2="493.4"><stop offset="0" stop-color="#ffffff"/><stop offset="0.25" stop-color="#f2ffd9"/><stop offset="0.5" stop-color="#e6ffb8"/><stop offset="0.75" stop-color="#dcff9b"/><stop offset="1" stop-color="#d3ff81"/></linearGradient><linearGradient id="z102" gradientUnits="userSpaceOnUse" x1="805" y1="711.5" x2="957.8" y2="501.2"><stop offset="0" stop-color="#ffffff"/><stop offset="0.25" stop-color="#f5ffda"/><stop offset="0.5" stop-color="#ebffba"/><stop offset="0.75" stop-color="#e3ff9d"/><stop offset="1" stop-color="#dcff84"/></linearGradient><linearGradient id="z103" gradientUnits="userSpaceOnUse" x1="805" y1="711.5" x2="968.6" y2="509.4"><stop offset="0" stop-color="#ffffff"/><stop offset="0.25" stop-color="#f8ffdb"/><stop offset="0.5" stop-color="#f1ffbc"/><stop offset="0.75" stop-color="#ebffa0"/><stop offset="1" stop-color="#e6ff87"/></linearGradient><linearGradient id="z104" gradientUnits="userSpaceOnUse" x1="805" y1="711.5" x2="979" y2="518.3"><stop offset="0" stop-color="#ffffff"/><stop offset="0.25" stop-color="#fbffdd"/><stop offset="0.5" stop-color="#f7ffbe"/><stop offset="0.75" stop-color="#f3ffa3"/><stop offset="1" stop-color="#f0ff8a"/></linearGradient><linearGradient id="z105" gradientUnits="userSpaceOnUse" x1="805" y1="711.5" x2="988.8" y2="527.7"><stop offset="0" stop-color="#ffffff"/><stop offset="0.25" stop-color="#feffde"/><stop offset="0.5" stop-color="#fcffc1"/><stop offset="0.75" stop-color="#fbffa6"/><stop offset="1" stop-color="#faff8e"/></linearGradient><linearGradient id="z106" gradientUnits="userSpaceOnUse" x1="805" y1="711.5" x2="998.2" y2="537.5"><stop offset="0" stop-color="#ffffff"/><stop offset="0.25" stop-color="#fffdde"/><stop offset="0.5" stop-color="#fffcc1"/><stop offset="0.75" stop-color="#fffaa6"/><stop offset="1" stop-color="#fff98e"/></linearGradient><linearGradient id="z107" gradientUnits="userSpaceOnUse" x1="805" y1="711.5" x2="1007.1" y2="547.9"><stop offset="0" stop-color="#ffffff"/><stop offset="0.25" stop-color="#fffadd"/><stop offset="0.5" stop-color="#fff6bf"/><stop offset="0.75" stop-color="#fff2a5"/><stop offset="1" stop-color="#ffef8c"/></linearGradient><linearGradient id="z108" gradientUnits="userSpaceOnUse" x1="805" y1="711.5" x2="1015.3" y2="558.7"><stop offset="0" stop-color="#ffffff"/><stop offset="0.25" stop-color="#fff7dc"/><stop offset="0.5" stop-color="#fff0be"/><stop offset="0.75" stop-color="#ffeaa3"/><stop offset="1" stop-color="#ffe58b"/></linearGradient><linearGradient id="z109" gradientUnits="userSpaceOnUse" x1="805" y1="711.5" x2="1023.1" y2="569.9"><stop offset="0" stop-color="#ffffff"/><stop offset="0.25" stop-color="#fff4db"/><stop offset="0.5" stop-color="#ffebbd"/><stop offset="0.75" stop-color="#ffe3a2"/><stop offset="1" stop-color="#ffdb8a"/></linearGradient><linearGradient id="z110" gradientUnits="userSpaceOnUse" x1="805" y1="711.5" x2="1030.2" y2="581.5"><stop offset="0" stop-color="#ffffff"/><stop offset="0.25" stop-color="#fff1db"/><stop offset="0.5" stop-color="#ffe5bc"/><stop offset="0.75" stop-color="#ffdba1"/><stop offset="1" stop-color="#ffd289"/></linearGradient><linearGradient id="z111" gradientUnits="userSpaceOnUse" x1="805" y1="711.5" x2="1036.7" y2="593.5"><stop offset="0" stop-color="#ffffff"/><stop offset="0.25" stop-color="#ffeeda"/><stop offset="0.5" stop-color="#ffe0bb"/><stop offset="0.75" stop-color="#ffd4a0"/><stop offset="1" stop-color="#ffca89"/></linearGradient><linearGradient id="z112" gradientUnits="userSpaceOnUse" x1="805" y1="711.5" x2="1042.5" y2="605.7"><stop offset="0" stop-color="#ffffff"/><stop offset="0.25" stop-color="#ffecda"/><stop offset="0.5" stop-color="#ffdbba"/><stop offset="0.75" stop-color="#ffce9f"/><stop offset="1" stop-color="#ffc288"/></linearGradient><linearGradient id="z113" gradientUnits="userSpaceOnUse" x1="805" y1="711.5" x2="1047.7" y2="618.3"><stop offset="0" stop-color="#ffffff"/><stop offset="0.25" stop-color="#ffe9d9"/><stop offset="0.5" stop-color="#ffd7ba"/><stop offset="0.75" stop-color="#ffc79f"/><stop offset="1" stop-color="#ffba88"/></linearGradient><linearGradient id="z114" gradientUnits="userSpaceOnUse" x1="805" y1="711.5" x2="1052.3" y2="631.2"><stop offset="0" stop-color="#ffffff"/><stop offset="0.25" stop-color="#ffe6d9"/><stop offset="0.5" stop-color="#ffd2b9"/><stop offset="0.75" stop-color="#ffc19f"/><stop offset="1" stop-color="#ffb389"/></linearGradient><linearGradient id="z115" gradientUnits="userSpaceOnUse" x1="805" y1="711.5" x2="1056.1" y2="644.2"><stop offset="0" stop-color="#ffffff"/><stop offset="0.25" stop-color="#ffe4d9"/><stop offset="0.5" stop-color="#ffceb9"/><stop offset="0.75" stop-color="#ffbb9f"/><stop offset="1" stop-color="#ffac89"/></linearGradient><linearGradient id="z116" gradientUnits="userSpaceOnUse" x1="805" y1="711.5" x2="1059.3" y2="657.4"><stop offset="0" stop-color="#ffffff"/><stop offset="0.25" stop-color="#ffe1d8"/><stop offset="0.5" stop-color="#ffc9b9"/><stop offset="0.75" stop-color="#ffb69f"/><stop offset="1" stop-color="#ffa58a"/></linearGradient><linearGradient id="z117" gradientUnits="userSpaceOnUse" x1="805" y1="711.5" x2="1061.8" y2="670.8"><stop offset="0" stop-color="#ffffff"/><stop offset="0.25" stop-color="#ffdfd8"/><stop offset="0.5" stop-color="#ffc5b9"/><stop offset="0.75" stop-color="#ffb0a0"/><stop offset="1" stop-color="#ff9f8a"/></linearGradient><linearGradient id="z118" gradientUnits="userSpaceOnUse" x1="805" y1="711.5" x2="1063.6" y2="684.3"><stop offset="0" stop-color="#ffffff"/><stop offset="0.25" stop-color="#ffddd8"/><stop offset="0.5" stop-color="#ffc2ba"/><stop offset="0.75" stop-color="#ffaba0"/><stop offset="1" stop-color="#ff998b"/></linearGradient><linearGradient id="z119" gradientUnits="userSpaceOnUse" x1="805" y1="711.5" x2="1064.6" y2="697.9"><stop offset="0" stop-color="#ffffff"/><stop offset="0.25" stop-color="#ffdbd9"/><stop offset="0.5" stop-color="#ffbeba"/><stop offset="0.75" stop-color="#ffa7a1"/><stop offset="1" stop-color="#ff938d"/></linearGradient></defs><rect x="600" y="600" width="400" height="250" fill="#fff"/><g shape-rendering="crispEdges"><path fill="url(#z0)" d="M805 711.5L1134.9 702.9L1134.7 726.2"/><path fill="url(#z1)" d="M805 711.5L1134.9 720.1L1133.5 743.4"/><path fill="url(#z2)" d="M805 711.5L1134 737.4L1131.3 760.6"/><path fill="url(#z3)" d="M805 711.5L1132.2 754.6L1128.3 777.6"/><path fill="url(#z4)" d="M805 711.5L1129.5 771.6L1124.4 794.4"/><path fill="url(#z5)" d="M805 711.5L1125.9 788.5L1119.6 811"/><path fill="url(#z6)" d="M805 711.5L1121.4 805.2L1114 827.3"/><path fill="url(#z7)" d="M805 711.5L1116.1 821.7L1107.5 843.4"/><path fill="url(#z8)" d="M805 711.5L1109.9 837.8L1100.2 859"/><path fill="url(#z9)" d="M805 711.5L1102.9 853.6L1092.1 874.3"/><path fill="url(#z10)" d="M805 711.5L1095 869L1083.2 889.1"/><path fill="url(#z11)" d="M805 711.5L1086.4 883.9L1073.5 903.4"/><path fill="url(#z12)" d="M805 711.5L1077 898.4L1063.1 917.2"/><path fill="url(#z13)" d="M805 711.5L1066.8 912.4L1052 930.4"/><path fill="url(#z14)" d="M805 711.5L1055.9 925.8L1040.2 943"/><path fill="url(#z15)" d="M805 711.5L1044.4 938.7L1027.7 955"/><path fill="url(#z16)" d="M805 711.5L1032.2 950.9L1014.7 966.3"/><path fill="url(#z17)" d="M805 711.5L1019.3 962.4L1001.1 976.9"/><path fill="url(#z18)" d="M805 711.5L1005.9 973.3L986.9 986.8"/><path fill="url(#z19)" d="M805 711.5L991.9 983.5L972.2 996"/><path fill="url(#z20)" d="M805 711.5L977.4 992.9L957.1 1004.3"/><path fill="url(#z21)" d="M805 711.5L962.5 1001.5L941.6 1011.9"/><path fill="url(#z22)" d="M805 711.5L947.1 1009.4L925.7 1018.6"/><path fill="url(#z23)" d="M805 711.5L931.3 1016.4L909.4 1024.5"/><path fill="url(#z24)" d="M805 711.5L915.2 1022.6L892.9 1029.6"/><path fill="url(#z25)" d="M805 711.5L898.7 1027.9L876.1 1033.7"/><path fill="url(#z26)" d="M805 711.5L882 1032.4L859.2 1037"/><path fill="url(#z27)" d="M805 711.5L865.1 1036L842.1 1039.4"/><path fill="url(#z28)" d="M805 711.5L848.1 1038.7L824.9 1040.9"/><path fill="url(#z29)" d="M805 711.5L830.9 1040.5L807.6 1041.5"/><path fill="url(#z30)" d="M805 711.5L813.6 1041.4L790.3 1041.2"/><path fill="url(#z31)" d="M805 711.5L796.4 1041.4L773.1 1040"/><path fill="url(#z32)" d="M805 711.5L779.1 1040.5L755.9 1037.8"/><path fill="url(#z33)" d="M805 711.5L761.9 1038.7L738.9 1034.8"/><path fill="url(#z34)" d="M805 711.5L744.9 1036L722.1 1030.9"/><path fill="url(#z35)" d="M805 711.5L728 1032.4L705.5 1026.1"/><path fill="url(#z36)" d="M805 711.5L711.3 1027.9L689.2 1020.5"/><path fill="url(#z37)" d="M805 711.5L694.8 1022.6L673.1 1014"/><path fill="url(#z38)" d="M805 711.5L678.7 1016.4L657.5 1006.7"/><path fill="url(#z39)" d="M805 711.5L662.9 1009.4L642.2 998.6"/><path fill="url(#z40)" d="M805 711.5L647.5 1001.5L627.4 989.7"/><path fill="url(#z41)" d="M805 711.5L632.6 992.9L613.1 980"/><path fill="url(#z42)" d="M805 711.5L618.1 983.5L599.3 969.6"/><path fill="url(#z43)" d="M805 711.5L604.1 973.3L586.1 958.5"/><path fill="url(#z44)" d="M805 711.5L590.7 962.4L573.5 946.7"/><path fill="url(#z45)" d="M805 711.5L577.8 950.9L561.5 934.2"/><path fill="url(#z46)" d="M805 711.5L565.6 938.7L550.2 921.2"/><path fill="url(#z47)" d="M805 711.5L554.1 925.8L539.6 907.6"/><path fill="url(#z48)" d="M805 711.5L543.2 912.4L529.7 893.4"/><path fill="url(#z49)" d="M805 711.5L533 898.4L520.5 878.7"/><path fill="url(#z50)" d="M805 711.5L523.6 883.9L512.2 863.6"/><path fill="url(#z51)" d="M805 711.5L515 869L504.6 848.1"/><path fill="url(#z52)" d="M805 711.5L507.1 853.6L497.9 832.2"/><path fill="url(#z53)" d="M805 711.5L500.1 837.8L492 815.9"/><path fill="url(#z54)" d="M805 711.5L493.9 821.7L486.9 799.4"/><path fill="url(#z55)" d="M805 711.5L488.6 805.2L482.8 782.6"/><path fill="url(#z56)" d="M805 711.5L484.1 788.5L479.5 765.7"/><path fill="url(#z57)" d="M805 711.5L480.5 771.6L477.1 748.6"/><path fill="url(#z58)" d="M805 711.5L477.8 754.6L475.6 731.4"/><path fill="url(#z59)" d="M805 711.5L476 737.4L475 714.1"/><path fill="url(#z60)" d="M805 711.5L475.1 720.1L475.3 696.8"/><path fill="url(#z61)" d="M805 711.5L475.1 702.9L476.5 679.6"/><path fill="url(#z62)" d="M805 711.5L476 685.6L478.7 662.4"/><path fill="url(#z63)" d="M805 711.5L477.8 668.4L481.7 645.4"/><path fill="url(#z64)" d="M805 711.5L480.5 651.4L485.6 628.6"/><path fill="url(#z65)" d="M805 711.5L484.1 634.5L490.4 612"/><path fill="url(#z66)" d="M805 711.5L488.6 617.8L496 595.7"/><path fill="url(#z67)" d="M805 711.5L493.9 601.3L502.5 579.6"/><path fill="url(#z68)" d="M805 711.5L500.1 585.2L509.8 564"/><path fill="url(#z69)" d="M805 711.5L507.1 569.4L517.9 548.7"/><path fill="url(#z70)" d="M805 711.5L515 554L526.8 533.9"/><path fill="url(#z71)" d="M805 711.5L523.6 539.1L536.5 519.6"/><path fill="url(#z72)" d="M805 711.5L533 524.6L546.9 505.8"/><path fill="url(#z73)" d="M805 711.5L543.2 510.6L558 492.6"/><path fill="url(#z74)" d="M805 711.5L554.1 497.2L569.8 480"/><path fill="url(#z75)" d="M805 711.5L565.6 484.3L582.3 468"/><path fill="url(#z76)" d="M805 711.5L577.8 472.1L595.3 456.7"/><path fill="url(#z77)" d="M805 711.5L590.7 460.6L608.9 446.1"/><path fill="url(#z78)" d="M805 711.5L604.1 449.7L623.1 436.2"/><path fill="url(#z79)" d="M805 711.5L618.1 439.5L637.8 427"/><path fill="url(#z80)" d="M805 711.5L632.6 430.1L652.9 418.7"/><path fill="url(#z81)" d="M805 711.5L647.5 421.5L668.4 411.1"/><path fill="url(#z82)" d="M805 711.5L662.9 413.6L684.3 404.4"/><path fill="url(#z83)" d="M805 711.5L678.7 406.6L700.6 398.5"/><path fill="url(#z84)" d="M805 711.5L694.8 400.4L717.1 393.4"/><path fill="url(#z85)" d="M805 711.5L711.3 395.1L733.9 389.3"/><path fill="url(#z86)" d="M805 711.5L728 390.6L750.8 386"/><path fill="url(#z87)" d="M805 711.5L744.9 387L767.9 383.6"/><path fill="url(#z88)" d="M805 711.5L761.9 384.3L785.1 382.1"/><path fill="url(#z89)" d="M805 711.5L779.1 382.5L802.4 381.5"/><path fill="url(#z90)" d="M805 711.5L796.4 381.6L819.7 381.8"/><path fill="url(#z91)" d="M805 711.5L813.6 381.6L836.9 383"/><path fill="url(#z92)" d="M805 711.5L830.9 382.5L854.1 385.2"/><path fill="url(#z93)" d="M805 711.5L848.1 384.3L871.1 388.2"/><path fill="url(#z94)" d="M805 711.5L865.1 387L887.9 392.1"/><path fill="url(#z95)" d="M805 711.5L882 390.6L904.5 396.9"/><path fill="url(#z96)" d="M805 711.5L898.7 395.1L920.8 402.5"/><path fill="url(#z97)" d="M805 711.5L915.2 400.4L936.9 409"/><path fill="url(#z98)" d="M805 711.5L931.3 406.6L952.5 416.3"/><path fill="url(#z99)" d="M805 711.5L947.1 413.6L967.8 424.4"/><path fill="url(#z100)" d="M805 711.5L962.5 421.5L982.6 433.3"/><path fill="url(#z101)" d="M805 711.5L977.4 430.1L996.9 443"/><path fill="url(#z102)" d="M805 711.5L991.9 439.5L1010.7 453.4"/><path fill="url(#z103)" d="M805 711.5L1005.9 449.7L1023.9 464.5"/><path fill="url(#z104)" d="M805 711.5L1019.3 460.6L1036.5 476.3"/><path fill="url(#z105)" d="M805 711.5L1032.2 472.1L1048.5 488.8"/><path fill="url(#z106)" d="M805 711.5L1044.4 484.3L1059.8 501.8"/><path fill="url(#z107)" d="M805 711.5L1055.9 497.2L1070.4 515.4"/><path fill="url(#z108)" d="M805 711.5L1066.8 510.6L1080.3 529.6"/><path fill="url(#z109)" d="M805 711.5L1077 524.6L1089.5 544.3"/><path fill="url(#z110)" d="M805 711.5L1086.4 539.1L1097.8 559.4"/><path fill="url(#z111)" d="M805 711.5L1095 554L1105.4 574.9"/><path fill="url(#z112)" d="M805 711.5L1102.9 569.4L1112.1 590.8"/><path fill="url(#z113)" d="M805 711.5L1109.9 585.2L1118 607.1"/><path fill="url(#z114)" d="M805 711.5L1116.1 601.3L1123.1 623.6"/><path fill="url(#z115)" d="M805 711.5L1121.4 617.8L1127.2 640.4"/><path fill="url(#z116)" d="M805 711.5L1125.9 634.5L1130.5 657.3"/><path fill="url(#z117)" d="M805 711.5L1129.5 651.4L1132.9 674.4"/><path fill="url(#z118)" d="M805 711.5L1132.2 668.4L1134.4 691.6"/><path fill="url(#z119)" d="M805 711.5L1134 685.6L1135 708.9"/></g></svg>
<div class="a" style="left:797.5px;top:704.2px;width:15px;height:14.6px;box-sizing:border-box;border:2.2px solid #000;background:#fff;"></div>
<div class="a" style="left:810px;top:695.2px;width:8.4px;height:8.4px;box-sizing:border-box;border-radius:50%;border:0.9px solid #555;background:#aaa;"></div>
<div class="a" style="left:813.4px;top:699.5px;width:8.4px;height:8.4px;box-sizing:border-box;border-radius:50%;border:1.1px solid #000;background:#fff;"></div>
<div class="a" style="left:988px;top:603.3px;width:612.7px;height:190.3px;overflow:hidden;">
<div class="a" style="left:0px;top:0px;width:613px;height:37.4px;background:linear-gradient(#363636,#303030 45%,#1d1d1d 50%,#232323);"></div>
<div class="a" style="left:0px;top:0px;width:14px;height:37.4px;background:#000;"></div>
<div class="a" style="left:0px;top:37.4px;width:613px;height:35.1px;background:#4b4b4b;"></div>
<div class="a" style="left:0px;top:37.4px;width:14px;height:35.1px;background:#3a3a3a;"></div>
<div class="a" style="left:0px;top:72.5px;width:613px;height:34.6px;background:#868686;"></div>
<div class="a" style="left:0px;top:72.5px;width:14px;height:34.6px;background:#4e4e4e;"></div>
<div class="a" style="left:0px;top:107.1px;width:613px;height:34.6px;background:#404040;"></div>
<div class="a" style="left:0px;top:107.1px;width:14px;height:34.6px;background:#333;"></div>
<div class="a" style="left:0px;top:141.7px;width:613px;height:35.6px;background:#7e7e7e;"></div>
<div class="a" style="left:0px;top:141.7px;width:14px;height:35.6px;background:#4a4a4a;"></div>
<div class="a" style="left:0px;top:177.3px;width:613px;height:34.4px;background:#3e3e3e;"></div>
<div class="a" style="left:0px;top:177.3px;width:14px;height:34.4px;background:#333;"></div>
<div class="t " style="left:88.2px;top:9.86px;font-size:18.6px;line-height:18.6px;transform:scaleX(0.868);transform-origin:0 50%;color:#f2f2f2;">White</div>
<div class="t " style="left:163.69px;top:9.86px;font-size:18.6px;line-height:18.6px;transform:scaleX(0.815);transform-origin:0 50%;color:#f2f2f2;">Red</div>
<div class="t " style="left:231.42px;top:9.86px;font-size:18.6px;line-height:18.6px;transform:scaleX(0.838);transform-origin:0 50%;color:#f2f2f2;">Green</div>
<div class="t " style="left:308.05px;top:9.86px;font-size:18.6px;line-height:18.6px;transform:scaleX(0.841);transform-origin:0 50%;color:#f2f2f2;">Blue</div>
<div class="t " style="left:375.46px;top:9.86px;font-size:18.6px;line-height:18.6px;transform:scaleX(0.797);transform-origin:0 50%;color:#f2f2f2;">Cyan</div>
<div class="t " style="left:452.04px;top:9.86px;font-size:18.6px;line-height:18.6px;transform:scaleX(0.844);transform-origin:0 50%;color:#f2f2f2;">Magenta</div>
<div class="t " style="left:521.89px;top:9.86px;font-size:18.6px;line-height:18.6px;transform:scaleX(0.827);transform-origin:0 50%;color:#f2f2f2;">Yellow</div>
<div class="t " style="left:597.72px;top:9.86px;font-size:18.6px;line-height:18.6px;transform:scaleX(0.847);transform-origin:0 50%;color:#f2f2f2;">100W</div>
<div class="t " style="left:18.35px;top:44.92px;font-size:21px;line-height:21px;transform:scaleX(0.709);transform-origin:0 50%;color:#f2f2f2;">x: CIE31</div>
<div class="t " style="left:87.65px;top:44.92px;font-size:21px;line-height:21px;transform:scaleX(0.748);transform-origin:0 50%;color:#f2f2f2;-webkit-text-stroke:0.2px #f2f2f2;">0,3143</div>
<div class="t " style="left:164.35px;top:44.92px;font-size:21px;line-height:21px;transform:scaleX(0.748);transform-origin:0 50%;color:#f2f2f2;-webkit-text-stroke:0.2px #f2f2f2;">0,6769</div>
<div class="t " style="left:231.65px;top:44.92px;font-size:21px;line-height:21px;transform:scaleX(0.748);transform-origin:0 50%;color:#f2f2f2;-webkit-text-stroke:0.2px #f2f2f2;">0,2595</div>
<div class="t " style="left:308.75px;top:44.92px;font-size:21px;line-height:21px;transform:scaleX(0.748);transform-origin:0 50%;color:#f2f2f2;-webkit-text-stroke:0.2px #f2f2f2;">0,1510</div>
<div class="t " style="left:375.65px;top:44.92px;font-size:21px;line-height:21px;transform:scaleX(0.748);transform-origin:0 50%;color:#f2f2f2;-webkit-text-stroke:0.2px #f2f2f2;">0,1982</div>
<div class="t " style="left:452.75px;top:44.92px;font-size:21px;line-height:21px;transform:scaleX(0.748);transform-origin:0 50%;color:#f2f2f2;-webkit-text-stroke:0.2px #f2f2f2;">0,3389</div>
<div class="t " style="left:521.65px;top:44.92px;font-size:21px;line-height:21px;transform:scaleX(0.748);transform-origin:0 50%;color:#f2f2f2;-webkit-text-stroke:0.2px #f2f2f2;">0,4354</div>
<div class="t " style="left:598.35px;top:44.92px;font-size:21px;line-height:21px;transform:scaleX(0.748);transform-origin:0 50%;color:#f2f2f2;-webkit-text-stroke:0.2px #f2f2f2;">0,3128</div>
<div class="t " style="left:18.5px;top:79.92px;font-size:21px;line-height:21px;transform:scaleX(0.707);transform-origin:0 50%;color:#f2f2f2;">y: CIE31</div>
<div class="t " style="left:87.65px;top:79.92px;font-size:21px;line-height:21px;transform:scaleX(0.748);transform-origin:0 50%;color:#f2f2f2;-webkit-text-stroke:0.2px #f2f2f2;">0,3321</div>
<div class="t " style="left:164.35px;top:79.92px;font-size:21px;line-height:21px;transform:scaleX(0.748);transform-origin:0 50%;color:#f2f2f2;-webkit-text-stroke:0.2px #f2f2f2;">0,3218</div>
<div class="t " style="left:231.65px;top:79.92px;font-size:21px;line-height:21px;transform:scaleX(0.748);transform-origin:0 50%;color:#f2f2f2;-webkit-text-stroke:0.2px #f2f2f2;">0,6957</div>
<div class="t " style="left:308.75px;top:79.92px;font-size:21px;line-height:21px;transform:scaleX(0.748);transform-origin:0 50%;color:#f2f2f2;-webkit-text-stroke:0.2px #f2f2f2;">0,0616</div>
<div class="t " style="left:375.65px;top:79.92px;font-size:21px;line-height:21px;transform:scaleX(0.748);transform-origin:0 50%;color:#f2f2f2;-webkit-text-stroke:0.2px #f2f2f2;">0,3376</div>
<div class="t " style="left:452.75px;top:79.92px;font-size:21px;line-height:21px;transform:scaleX(0.748);transform-origin:0 50%;color:#f2f2f2;-webkit-text-stroke:0.2px #f2f2f2;">0,1531</div>
<div class="t " style="left:521.65px;top:79.92px;font-size:21px;line-height:21px;transform:scaleX(0.748);transform-origin:0 50%;color:#f2f2f2;-webkit-text-stroke:0.2px #f2f2f2;">0,5377</div>
<div class="t " style="left:598.35px;top:79.92px;font-size:21px;line-height:21px;transform:scaleX(0.748);transform-origin:0 50%;color:#f2f2f2;-webkit-text-stroke:0.2px #f2f2f2;">0,3301</div>
<div class="t " style="left:18.2px;top:115.02px;font-size:21px;line-height:21px;transform:scaleX(0.716);transform-origin:0 50%;color:#f2f2f2;">Y</div>
<div class="t " style="left:87.41px;top:115.02px;font-size:21px;line-height:21px;transform:scaleX(0.748);transform-origin:0 50%;color:#f2f2f2;-webkit-text-stroke:0.2px #f2f2f2;">201,1867</div>
<div class="t " style="left:164.59px;top:115.02px;font-size:21px;line-height:21px;transform:scaleX(0.748);transform-origin:0 50%;color:#f2f2f2;-webkit-text-stroke:0.2px #f2f2f2;">47,5336</div>
<div class="t " style="left:231.02px;top:115.02px;font-size:21px;line-height:21px;transform:scaleX(0.748);transform-origin:0 50%;color:#f2f2f2;-webkit-text-stroke:0.2px #f2f2f2;">139,6823</div>
<div class="t " style="left:308.12px;top:115.02px;font-size:21px;line-height:21px;transform:scaleX(0.748);transform-origin:0 50%;color:#f2f2f2;-webkit-text-stroke:0.2px #f2f2f2;">15,8666</div>
<div class="t " style="left:375.02px;top:115.02px;font-size:21px;line-height:21px;transform:scaleX(0.748);transform-origin:0 50%;color:#f2f2f2;-webkit-text-stroke:0.2px #f2f2f2;">153,2339</div>
<div class="t " style="left:452.51px;top:115.02px;font-size:21px;line-height:21px;transform:scaleX(0.748);transform-origin:0 50%;color:#f2f2f2;-webkit-text-stroke:0.2px #f2f2f2;">61,3032</div>
<div class="t " style="left:521.02px;top:115.02px;font-size:21px;line-height:21px;transform:scaleX(0.748);transform-origin:0 50%;color:#f2f2f2;-webkit-text-stroke:0.2px #f2f2f2;">185,3845</div>
<div class="t " style="left:598.35px;top:115.02px;font-size:21px;line-height:21px;transform:scaleX(0.748);transform-origin:0 50%;color:#f2f2f2;-webkit-text-stroke:0.2px #f2f2f2;">386,1893</div>
<div class="t " style="left:18.18px;top:150.12px;font-size:21px;line-height:21px;transform:scaleX(0.768);transform-origin:0 50%;color:#f2f2f2;">Target Y</div>
<div class="t " style="left:87.41px;top:150.12px;font-size:21px;line-height:21px;transform:scaleX(0.748);transform-origin:0 50%;color:#f2f2f2;-webkit-text-stroke:0.2px #f2f2f2;">201,1867</div>
<div class="t " style="left:164.59px;top:150.12px;font-size:21px;line-height:21px;transform:scaleX(0.748);transform-origin:0 50%;color:#f2f2f2;-webkit-text-stroke:0.2px #f2f2f2;">46,0695</div>
<div class="t " style="left:231.02px;top:150.12px;font-size:21px;line-height:21px;transform:scaleX(0.748);transform-origin:0 50%;color:#f2f2f2;-webkit-text-stroke:0.2px #f2f2f2;">139,1671</div>
<div class="t " style="left:308.12px;top:150.12px;font-size:21px;line-height:21px;transform:scaleX(0.748);transform-origin:0 50%;color:#f2f2f2;-webkit-text-stroke:0.2px #f2f2f2;">15,9501</div>
<div class="t " style="left:375.02px;top:150.12px;font-size:21px;line-height:21px;transform:scaleX(0.748);transform-origin:0 50%;color:#f2f2f2;-webkit-text-stroke:0.2px #f2f2f2;">155,1172</div>
<div class="t " style="left:452.51px;top:150.12px;font-size:21px;line-height:21px;transform:scaleX(0.748);transform-origin:0 50%;color:#f2f2f2;-webkit-text-stroke:0.2px #f2f2f2;">62,0197</div>
<div class="t " style="left:521.02px;top:150.12px;font-size:21px;line-height:21px;transform:scaleX(0.748);transform-origin:0 50%;color:#f2f2f2;-webkit-text-stroke:0.2px #f2f2f2;">185,2366</div>
<div class="t " style="left:598.35px;top:150.12px;font-size:21px;line-height:21px;transform:scaleX(0.748);transform-origin:0 50%;color:#f2f2f2;-webkit-text-stroke:0.2px #f2f2f2;">386,1893</div>
<div class="t " style="left:18.12px;top:185.32px;font-size:21px;line-height:21px;transform:scaleX(0.732);transform-origin:0 50%;color:#f2f2f2;">ΔE 2000</div>
<div class="t " style="left:87.02px;top:185.32px;font-size:21px;line-height:21px;transform:scaleX(0.748);transform-origin:0 50%;color:#f2f2f2;-webkit-text-stroke:0.2px #f2f2f2;">1,4383</div>
<div class="t " style="left:164.35px;top:185.32px;font-size:21px;line-height:21px;transform:scaleX(0.748);transform-origin:0 50%;color:#f2f2f2;-webkit-text-stroke:0.2px #f2f2f2;">0,5839</div>
<div class="t " style="left:231.65px;top:185.32px;font-size:21px;line-height:21px;transform:scaleX(0.748);transform-origin:0 50%;color:#f2f2f2;-webkit-text-stroke:0.2px #f2f2f2;">0,5431</div>
<div class="t " style="left:308.75px;top:185.32px;font-size:21px;line-height:21px;transform:scaleX(0.748);transform-origin:0 50%;color:#f2f2f2;-webkit-text-stroke:0.2px #f2f2f2;">0,4943</div>
<div class="t " style="left:375.02px;top:185.32px;font-size:21px;line-height:21px;transform:scaleX(0.748);transform-origin:0 50%;color:#f2f2f2;-webkit-text-stroke:0.2px #f2f2f2;">1,2762</div>
<div class="t " style="left:452.75px;top:185.32px;font-size:21px;line-height:21px;transform:scaleX(0.748);transform-origin:0 50%;color:#f2f2f2;-webkit-text-stroke:0.2px #f2f2f2;">0,4122</div>
<div class="t " style="left:521.65px;top:185.32px;font-size:21px;line-height:21px;transform:scaleX(0.748);transform-origin:0 50%;color:#f2f2f2;-webkit-text-stroke:0.2px #f2f2f2;">0,5469</div>
<div class="t " style="left:597.72px;top:185.32px;font-size:21px;line-height:21px;transform:scaleX(0.748);transform-origin:0 50%;color:#f2f2f2;-webkit-text-stroke:0.2px #f2f2f2;">1,1433</div>
</div>
<div class="a" style="left:1601.4px;top:641.5px;width:15.6px;height:152.1px;background:#686868;border-radius:3px;"></div>
<div class="a" style="left:1601.6px;top:641.7px;width:15.2px;height:19.3px;box-sizing:border-box;border:1px solid #9a9a9a;border-radius:4px;background:linear-gradient(#8a8a8a,#6c6c6c);"></div>
<div class="a" style="left:1604.2px;top:647.5px;width:0;height:0;border-left:5px solid transparent;border-right:5px solid transparent;border-bottom:7px solid #c4c4c4;"></div>
<div class="a" style="left:1603.2px;top:664px;width:12.6px;height:84.4px;background:#494949;border-radius:6px;"></div>
<div class="a" style="left:1601.6px;top:773.3px;width:15.2px;height:19.3px;box-sizing:border-box;border:1px solid #9a9a9a;border-radius:4px;background:linear-gradient(#8a8a8a,#6c6c6c);"></div>
<div class="a" style="left:1604.2px;top:779.5px;width:0;height:0;border-left:5px solid transparent;border-right:5px solid transparent;border-top:7px solid #c4c4c4;"></div>
<div class="a" style="left:1002.4px;top:794.4px;width:598.3px;height:20.8px;background:#686868;border-radius:3px;border:1px solid #858585;box-sizing:border-box;"></div>
<div class="a" style="left:1002.8px;top:795px;width:16px;height:19.6px;box-sizing:border-box;border:1px solid #9a9a9a;border-radius:4px;background:linear-gradient(#8a8a8a,#6c6c6c);"></div>
<div class="a" style="left:1006.5px;top:799.8px;width:0;height:0;border-top:5px solid transparent;border-bottom:5px solid transparent;border-right:7px solid #c4c4c4;"></div>
<div class="a" style="left:1020.8px;top:797px;width:511.8px;height:16px;background:#494949;border-radius:7px;"></div>
<div class="a" style="left:1585px;top:795px;width:15.4px;height:19.6px;box-sizing:border-box;border:1px solid #9a9a9a;border-radius:4px;background:linear-gradient(#8a8a8a,#6c6c6c);"></div>
<div class="a" style="left:1589.8px;top:799.8px;width:0;height:0;border-top:5px solid transparent;border-bottom:5px solid transparent;border-left:7px solid #c4c4c4;"></div>
<div class="a" style="left:-1.9px;top:824.6px;width:155.5px;height:75px;box-sizing:border-box;border-radius:5px 5px 0 0;border:1px solid #a9a9a9;border-bottom:none;background:linear-gradient(#a2a2a2,#8c8c8c 30%,#5e5e5e);"></div>
<div class="a" style="left:4.5px;top:831px;width:143.1px;height:44.8px;border-radius:5px;background:#c0c0c0;box-shadow:inset 0 1px 1px 1px #d8d8d8;"></div>
<div class="t " style="left:59.01px;top:883.87px;font-size:13.5px;line-height:13.5px;transform:scaleX(0.930);transform-origin:0 50%;color:#2a2a2a;font-weight:bold;">White</div>
<div class="a" style="left:156.1px;top:824.6px;width:155.5px;height:75px;box-sizing:border-box;border-radius:5px 5px 0 0;border:1px solid #a9a9a9;border-bottom:none;background:linear-gradient(#a2a2a2,#8c8c8c 30%,#5e5e5e);"></div>
<div class="a" style="left:162.5px;top:831px;width:143.1px;height:44.8px;border-radius:5px;background:#c40000;box-shadow:inset 0 0 2px rgba(0,0,0,.35);"></div>
<div class="t " style="left:222.04px;top:883.87px;font-size:13.5px;line-height:13.5px;transform:scaleX(0.930);transform-origin:0 50%;color:#2a2a2a;font-weight:bold;">Red</div>
<div class="a" style="left:314.1px;top:824.6px;width:155.5px;height:75px;box-sizing:border-box;border-radius:5px 5px 0 0;border:1px solid #a9a9a9;border-bottom:none;background:linear-gradient(#a2a2a2,#8c8c8c 30%,#5e5e5e);"></div>
<div class="a" style="left:320.5px;top:831px;width:143.1px;height:44.8px;border-radius:5px;background:#00c400;box-shadow:inset 0 0 2px rgba(0,0,0,.35);"></div>
<div class="t " style="left:373.88px;top:883.87px;font-size:13.5px;line-height:13.5px;transform:scaleX(0.930);transform-origin:0 50%;color:#2a2a2a;font-weight:bold;">Green</div>
<div class="a" style="left:472.1px;top:824.6px;width:155.5px;height:75px;box-sizing:border-box;border-radius:5px 5px 0 0;border:1px solid #a9a9a9;border-bottom:none;background:linear-gradient(#a2a2a2,#8c8c8c 30%,#5e5e5e);"></div>
<div class="a" style="left:478.5px;top:831px;width:143.1px;height:44.8px;border-radius:5px;background:#0000c4;box-shadow:inset 0 0 2px rgba(0,0,0,.35);"></div>
<div class="t " style="left:536.09px;top:883.87px;font-size:13.5px;line-height:13.5px;transform:scaleX(0.930);transform-origin:0 50%;color:#2a2a2a;font-weight:bold;">Blue</div>
<div class="a" style="left:630.1px;top:824.6px;width:155.5px;height:75px;box-sizing:border-box;border-radius:5px 5px 0 0;border:1px solid #a9a9a9;border-bottom:none;background:linear-gradient(#a2a2a2,#8c8c8c 30%,#5e5e5e);"></div>
<div class="a" style="left:636.5px;top:831px;width:143.1px;height:44.8px;border-radius:5px;background:#00c4c4;box-shadow:inset 0 0 2px rgba(0,0,0,.35);"></div>
<div class="t " style="left:692.68px;top:883.87px;font-size:13.5px;line-height:13.5px;transform:scaleX(0.930);transform-origin:0 50%;color:#2a2a2a;font-weight:bold;">Cyan</div>
<div class="a" style="left:788.1px;top:824.6px;width:155.5px;height:75px;box-sizing:border-box;border-radius:5px 5px 0 0;border:1px solid #a9a9a9;border-bottom:none;background:linear-gradient(#a2a2a2,#8c8c8c 30%,#5e5e5e);"></div>
<div class="a" style="left:794.5px;top:831px;width:143.1px;height:44.8px;border-radius:5px;background:#c400c4;box-shadow:inset 0 0 2px rgba(0,0,0,.35);"></div>
<div class="t " style="left:839.97px;top:883.87px;font-size:13.5px;line-height:13.5px;transform:scaleX(0.930);transform-origin:0 50%;color:#2a2a2a;font-weight:bold;">Magenta</div>
<div class="a" style="left:946.1px;top:824.6px;width:155.5px;height:75px;box-sizing:border-box;border-radius:5px 5px 0 0;border:1px solid #a9a9a9;border-bottom:none;background:linear-gradient(#a2a2a2,#8c8c8c 30%,#5e5e5e);"></div>
<div class="a" style="left:952.5px;top:831px;width:143.1px;height:44.8px;border-radius:5px;background:#c4c400;box-shadow:inset 0 0 2px rgba(0,0,0,.35);"></div>
<div class="t " style="left:1004.25px;top:883.87px;font-size:13.5px;line-height:13.5px;transform:scaleX(0.930);transform-origin:0 50%;color:#2a2a2a;font-weight:bold;">Yellow</div>
<div class="a" style="left:1104.4px;top:825.1px;width:154.5px;height:75px;border-radius:5px 5px 0 0;background:#222;"></div>
<div class="a" style="left:1110.8px;top:830.8px;width:142.3px;height:44.9px;border-radius:5px;background:#fff;"></div>
<div class="t " style="left:1163.06px;top:883.87px;font-size:13.5px;line-height:13.5px;transform:scaleX(1.038);transform-origin:0 50%;color:#fff;font-weight:bold;">100W</div>
<div class="a" style="left:1263.3px;top:824.4px;width:59.3px;height:22.4px;border-radius:5px 5px 0 0;background:linear-gradient(#999,#7a7a7a);"></div>
<div class="a" style="left:1284.1px;top:826.6px;width:18.8px;height:18.8px;border-radius:50%;background:linear-gradient(#6a6a6a,#9a9a9a);"></div>
<div class="a" style="left:1287.7px;top:832px;width:0;height:0;border-left:5.8px solid transparent;border-right:5.8px solid transparent;border-bottom:6px solid #333;"></div>
<div class="a" style="left:1263.3px;top:847.8px;width:59.3px;height:50px;background:linear-gradient(#868686,#5c5c5c);"></div>
<div class="a" style="left:1273.5px;top:855.3px;width:38.5px;height:37.7px;box-sizing:border-box;border:2.2px solid #262626;border-radius:6px;background:linear-gradient(#a0a0a0,#9a9a9a 49%,#7c7c7c 50%,#747474);"></div>
<div class="a" style="left:1284.9px;top:866.2px;width:16.9px;height:16.6px;background:linear-gradient(#1c1c1c 48%,#000 50%);"></div>
<div class="a" style="left:1324.1px;top:823.9px;width:282.8px;height:38.3px;background:#2e2e2e;"></div>
<div class="a" style="left:1324.1px;top:823.9px;width:58.1px;height:38px;background:linear-gradient(#ababab,#8e8e8e 35%,#666);border-radius:5px 0 0 0;"></div>
<div class="a" style="left:1341.15px;top:831.1px;width:24.4px;height:24.4px;border-radius:50%;background:linear-gradient(#747474,#a6a6a6);"></div>
<svg class="a" style="left:1340.35px;top:830.3px" width="26" height="26" viewBox="-13 -13 26 26"><rect x="-4.9" y="-4.7" width="9.8" height="9.3" fill="#333"/></svg>
<div class="a" style="left:1382.9px;top:823.9px;width:55.4px;height:38px;background:linear-gradient(#ababab,#8e8e8e 35%,#666);"></div>
<div class="a" style="left:1398.6px;top:831.1px;width:24.4px;height:24.4px;border-radius:50%;background:linear-gradient(#747474,#a6a6a6);"></div>
<svg class="a" style="left:1397.8px;top:830.3px" width="26" height="26" viewBox="-13 -13 26 26"><path d="M-3.6 -5.8L6.7 0.2L-3.6 6.2Z" fill="#333"/></svg>
<div class="a" style="left:1438.9px;top:823.9px;width:55.1px;height:38px;background:linear-gradient(#ababab,#8e8e8e 35%,#666);"></div>
<div class="a" style="left:1454.45px;top:831.1px;width:24.4px;height:24.4px;border-radius:50%;background:linear-gradient(#747474,#a6a6a6);"></div>
<svg class="a" style="left:1453.65px;top:830.3px" width="26" height="26" viewBox="-13 -13 26 26"><path d="M-4.2 -6.5H-7V6.5H-4.2M4.2 -6.5H7V6.5H4.2" fill="none" stroke="#333" stroke-width="2"/><circle cx="-2" cy="0" r="1.1" fill="#333"/><circle cx="2" cy="0" r="1.1" fill="#333"/></svg>
<div class="a" style="left:1496.2px;top:823.9px;width:54.8px;height:38px;background:linear-gradient(#ababab,#8e8e8e 35%,#666);"></div>
<div class="a" style="left:1511.6px;top:831.1px;width:24.4px;height:24.4px;border-radius:50%;background:linear-gradient(#747474,#a6a6a6);"></div>
<svg class="a" style="left:1510.8px;top:830.3px" width="26" height="26" viewBox="-13 -13 26 26"><path d="M0 0C-2.5 -4 -8 -4 -8 0C-8 4 -2.5 4 0 0C2.5 -4 8 -4 8 0C8 4 2.5 4 0 0Z" fill="none" stroke="#333" stroke-width="2"/></svg>
<div class="a" style="left:1552px;top:823.9px;width:54.9px;height:38px;background:linear-gradient(#ababab,#8e8e8e 35%,#666);"></div>
<div class="a" style="left:1567.45px;top:831.1px;width:24.4px;height:24.4px;border-radius:50%;background:linear-gradient(#747474,#a6a6a6);"></div>
<svg class="a" style="left:1566.65px;top:830.3px" width="26" height="26" viewBox="-13 -13 26 26"><path d="M-6.3 -1.2A6.4 6.4 0 0 1 4.6 -4.4" fill="none" stroke="#333" stroke-width="2.4"/><path d="M6.3 1.2A6.4 6.4 0 0 1 -4.6 4.4" fill="none" stroke="#333" stroke-width="2.4"/><path d="M2.2 -2.2L7.6 -1.8L6.8 -7.2Z" fill="#333"/><path d="M-2.2 2.2L-7.6 1.8L-6.8 7.2Z" fill="#333"/></svg>
<div class="a" style="left:1324.1px;top:862.9px;width:169.9px;height:36px;border-radius:5px 0 0 0;background:linear-gradient(#b2b2b2,#8a8a8a 80%,#808080);"></div>
<div class="a" style="left:1496.2px;top:863.2px;width:160px;height:36px;background:linear-gradient(#b2b2b2,#8a8a8a 80%,#808080);"></div>
<div class="a" style="left:1350.4px;top:869.8px;width:24.4px;height:24.4px;border-radius:50%;background:linear-gradient(#747474,#a6a6a6);"></div>
<svg class="a" style="left:1349.6px;top:868.8px" width="26" height="26" viewBox="-13 -13 26 26"><path d="M1.5 -5L-3.5 0.3L1.5 5.6M6.5 -5L1.5 0.3L6.5 5.6" fill="none" stroke="#333" stroke-width="1.7"/></svg>
<div class="a" style="left:1617.6px;top:869.8px;width:24.4px;height:24.4px;border-radius:50%;background:linear-gradient(#747474,#a6a6a6);"></div>
<svg class="a" style="left:1616.8px;top:868.8px" width="26" height="26" viewBox="-13 -13 26 26"><path d="M-1.5 -5L3.5 0.3L-1.5 5.6M-6.5 -5L-1.5 0.3L-6.5 5.6" fill="none" stroke="#333" stroke-width="1.7"/></svg>
<div class="t " style="left:1394.69px;top:868.87px;font-size:26.5px;line-height:26.5px;transform:scaleX(1.092);transform-origin:0 50%;color:#333;-webkit-text-stroke:0.5px #333;text-shadow:0 1px 1.5px rgba(0,0,0,.4);">Back</div>
<div class="t " style="left:1528.34px;top:869.37px;font-size:26.5px;line-height:26.5px;transform:scaleX(1.209);transform-origin:0 50%;color:#333;-webkit-text-stroke:0.5px #333;text-shadow:0 1px 1.5px rgba(0,0,0,.4);">Next</div>
<div class="t" style="left:1615.4px;top:820px;font-family:'DejaVu Sans',sans-serif;font-size:45.8px;line-height:45.8px;color:#e60000;text-shadow:1.2px 1.6px 1px rgba(20,20,20,.6);">✱</div>
</body></html>
